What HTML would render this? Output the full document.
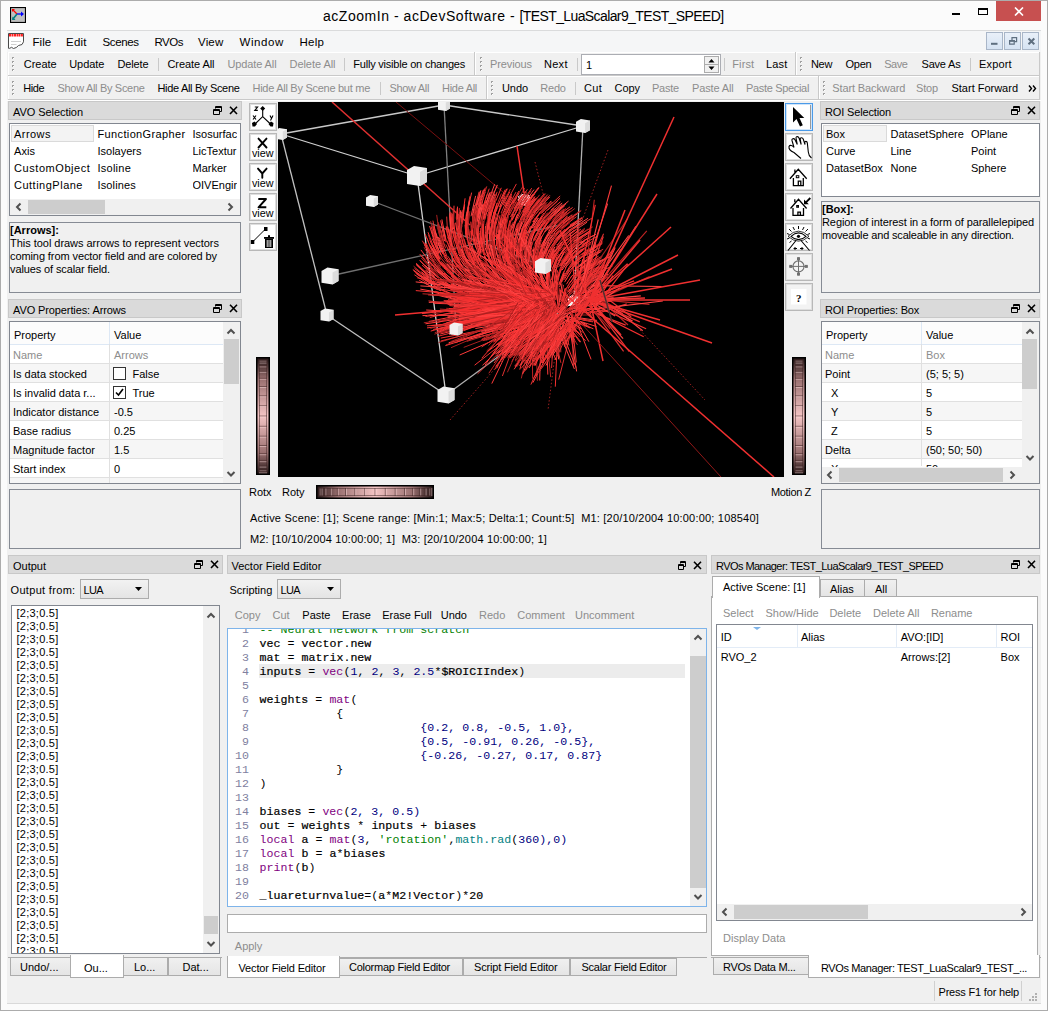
<!DOCTYPE html><html><head><meta charset="utf-8"><style>
html,body{margin:0;padding:0;width:1048px;height:1011px;overflow:hidden;background:#fbfbfb}
.a{position:absolute}
.t{position:absolute;white-space:pre;font-family:"Liberation Sans",sans-serif}
</style></head><body><div class="a" style="left:0px;top:0px;width:1048px;height:1011px;background:#fbfbfb"></div><div class="a" style="left:0px;top:0px;width:1048px;height:1px;background:#acacac"></div><div class="a" style="left:0px;top:1010px;width:1048px;height:1px;background:#acacac"></div><div class="a" style="left:0px;top:0px;width:1px;height:1011px;background:#acacac"></div><div class="a" style="left:1047px;top:0px;width:1px;height:1011px;background:#acacac"></div><svg class="a" style="left:10px;top:7px" width="16" height="16" viewBox="0 0 16 16">
<rect x="0.5" y="0.5" width="15" height="15" fill="#c0c0c0" stroke="#000" stroke-width="1.2"/>
<path d="M7 7 L3 3" stroke="#f00" stroke-width="1.3"/><path d="M2 2 h3 l-3 3z" fill="#f00"/>
<path d="M7 7 H13" stroke="#00f" stroke-width="1.3"/><path d="M14 7 l-3 -2.5 v5z" fill="#00f"/>
<path d="M7 7 L3 12" stroke="#008080" stroke-width="1.6"/><path d="M2 13 h3.5 l-3 -3.5z" fill="#008080"/>
</svg><div class="t" style="left:323px;top:9px;line-height:14px;font-family:'Liberation Sans';font-size:14px;color:#000;letter-spacing:0.535px;">acZoomIn - acDevSoftware - </div><div class="t" style="left:519.5px;top:9px;line-height:14px;font-family:'Liberation Sans';font-size:14px;color:#000;letter-spacing:-0.607px;">[TEST_LuaScalar9_TEST_SPEED]</div><div class="a" style="left:952px;top:13px;width:8px;height:2px;background:#000"></div><div class="a" style="left:978px;top:8px;width:10px;height:7px;border:1px solid #000;border-top-width:2px;box-sizing:border-box"></div><div class="a" style="left:996px;top:1px;width:45px;height:20px;background:#c75050"></div><svg class="a" style="left:1014px;top:7px" width="10" height="9" viewBox="0 0 10 9"><path d="M1 0.5 L9 8.5 M9 0.5 L1 8.5" stroke="#fff" stroke-width="1.6"/></svg><div class="a" style="left:7px;top:30px;width:1034px;height:974px;background:#f0f0f0"></div><div class="a" style="left:7px;top:30px;width:1034px;height:22px;background:#f5f6f7"></div><div class="a" style="left:7px;top:30px;width:1034px;height:1px;background:#dadbdc"></div><svg class="a" style="left:8px;top:33px" width="16" height="16" viewBox="0 0 16 16">
<path d="M0.5 0.5 H15.5 V8.8 L14 11.5 L10.5 12.5 L8.3 14.5 L5.5 15.5 L3.5 14.3 L1.8 15.3 H0.5 Z" fill="#fff" stroke="#4a4a4a" stroke-width="1"/>
<path d="M1 2.2 H15" stroke="#ff2020" stroke-width="2.6" stroke-dasharray="2 0.5 1.5 0.5 2.5 0.5 1.5 0.4 2 0.5"/>
<path d="M3 8.5H13M3 11.5H8.5" stroke="#cfcfcf" stroke-width="1"/>
</svg><div class="t" style="left:32.5px;top:37px;line-height:11.5px;font-family:'Liberation Sans';font-size:11.5px;color:#000;letter-spacing:0.042px;">File</div><div class="t" style="left:66px;top:37px;line-height:11.5px;font-family:'Liberation Sans';font-size:11.5px;color:#000;letter-spacing:0.243px;">Edit</div><div class="t" style="left:102.5px;top:37px;line-height:11.5px;font-family:'Liberation Sans';font-size:11.5px;color:#000;letter-spacing:-0.393px;">Scenes</div><div class="t" style="left:154.5px;top:37px;line-height:11.5px;font-family:'Liberation Sans';font-size:11.5px;color:#000;letter-spacing:-0.492px;">RVOs</div><div class="t" style="left:198px;top:37px;line-height:11.5px;font-family:'Liberation Sans';font-size:11.5px;color:#000;letter-spacing:0.170px;">View</div><div class="t" style="left:239.5px;top:37px;line-height:11.5px;font-family:'Liberation Sans';font-size:11.5px;color:#000;letter-spacing:0.582px;">Window</div><div class="t" style="left:299.5px;top:37px;line-height:11.5px;font-family:'Liberation Sans';font-size:11.5px;color:#000;letter-spacing:0.286px;">Help</div><div class="a" style="left:986px;top:32px;width:17px;height:18px;background:#dce7f5;border:1px solid #a9b6c8;box-sizing:border-box"></div><div class="a" style="left:987px;top:33px;width:15px;height:16px;background:linear-gradient(#e9f0f9,#d6e3f3)"></div><div class="a" style="left:1004px;top:32px;width:17px;height:18px;background:#dce7f5;border:1px solid #a9b6c8;box-sizing:border-box"></div><div class="a" style="left:1005px;top:33px;width:15px;height:16px;background:linear-gradient(#e9f0f9,#d6e3f3)"></div><div class="a" style="left:1022px;top:32px;width:17px;height:18px;background:#dce7f5;border:1px solid #a9b6c8;box-sizing:border-box"></div><div class="a" style="left:1023px;top:33px;width:15px;height:16px;background:linear-gradient(#e9f0f9,#d6e3f3)"></div><svg class="a" style="left:986px;top:32px" width="54" height="18" viewBox="0 0 54 18">
<rect x="5" y="10.8" width="6.5" height="2" fill="#5f6f80"/>
<path d="M23.6 8.6 H28.2 V12.2 H23.6 Z" fill="none" stroke="#5f6f80" stroke-width="1.2"/><rect x="23" y="8" width="5.8" height="1.8" fill="#5f6f80"/>
<path d="M26 8 V5.6 H30.6 V9.6 H28.2" fill="none" stroke="#5f6f80" stroke-width="1.2"/>
<path d="M42.5 6.5 L48.3 12.3 M48.3 6.5 L42.5 12.3" stroke="#5f6f80" stroke-width="2"/>
</svg><div class="a" style="left:8px;top:52px;width:467px;height:24px;background:#f0f0f0"></div><div class="a" style="left:8px;top:52px;width:467px;height:1px;background:#ffffff"></div><div class="a" style="left:8px;top:52px;width:1px;height:24px;background:#ffffff"></div><div class="a" style="left:8px;top:75px;width:467px;height:1px;background:#c9c9c9"></div><div class="a" style="left:474px;top:52px;width:1px;height:24px;background:#c9c9c9"></div><div class="a" style="left:475px;top:52px;width:321px;height:24px;background:#f0f0f0"></div><div class="a" style="left:475px;top:52px;width:321px;height:1px;background:#ffffff"></div><div class="a" style="left:475px;top:52px;width:1px;height:24px;background:#ffffff"></div><div class="a" style="left:475px;top:75px;width:321px;height:1px;background:#c9c9c9"></div><div class="a" style="left:795px;top:52px;width:1px;height:24px;background:#c9c9c9"></div><div class="a" style="left:796px;top:52px;width:244px;height:24px;background:#f0f0f0"></div><div class="a" style="left:796px;top:52px;width:244px;height:1px;background:#ffffff"></div><div class="a" style="left:796px;top:52px;width:1px;height:24px;background:#ffffff"></div><div class="a" style="left:796px;top:75px;width:244px;height:1px;background:#c9c9c9"></div><div class="a" style="left:1039px;top:52px;width:1px;height:24px;background:#c9c9c9"></div><div class="a" style="left:8px;top:76px;width:479px;height:24px;background:#f0f0f0"></div><div class="a" style="left:8px;top:76px;width:479px;height:1px;background:#ffffff"></div><div class="a" style="left:8px;top:76px;width:1px;height:24px;background:#ffffff"></div><div class="a" style="left:8px;top:99px;width:479px;height:1px;background:#c9c9c9"></div><div class="a" style="left:486px;top:76px;width:1px;height:24px;background:#c9c9c9"></div><div class="a" style="left:487px;top:76px;width:332px;height:24px;background:#f0f0f0"></div><div class="a" style="left:487px;top:76px;width:332px;height:1px;background:#ffffff"></div><div class="a" style="left:487px;top:76px;width:1px;height:24px;background:#ffffff"></div><div class="a" style="left:487px;top:99px;width:332px;height:1px;background:#c9c9c9"></div><div class="a" style="left:818px;top:76px;width:1px;height:24px;background:#c9c9c9"></div><div class="a" style="left:819px;top:76px;width:221px;height:24px;background:#f0f0f0"></div><div class="a" style="left:819px;top:76px;width:221px;height:1px;background:#ffffff"></div><div class="a" style="left:819px;top:76px;width:1px;height:24px;background:#ffffff"></div><div class="a" style="left:819px;top:99px;width:221px;height:1px;background:#c9c9c9"></div><div class="a" style="left:1039px;top:76px;width:1px;height:24px;background:#c9c9c9"></div><div class="a" style="left:7px;top:100px;width:1034px;height:1px;background:#ffffff"></div><div class="a" style="left:12px;top:57px;width:2px;height:2px;background:#a0a0a0"></div><div class="a" style="left:13px;top:58px;width:1px;height:1px;background:#fff"></div><div class="a" style="left:12px;top:61px;width:2px;height:2px;background:#a0a0a0"></div><div class="a" style="left:13px;top:62px;width:1px;height:1px;background:#fff"></div><div class="a" style="left:12px;top:65px;width:2px;height:2px;background:#a0a0a0"></div><div class="a" style="left:13px;top:66px;width:1px;height:1px;background:#fff"></div><div class="a" style="left:12px;top:69px;width:2px;height:2px;background:#a0a0a0"></div><div class="a" style="left:13px;top:70px;width:1px;height:1px;background:#fff"></div><div class="a" style="left:480px;top:57px;width:2px;height:2px;background:#a0a0a0"></div><div class="a" style="left:481px;top:58px;width:1px;height:1px;background:#fff"></div><div class="a" style="left:480px;top:61px;width:2px;height:2px;background:#a0a0a0"></div><div class="a" style="left:481px;top:62px;width:1px;height:1px;background:#fff"></div><div class="a" style="left:480px;top:65px;width:2px;height:2px;background:#a0a0a0"></div><div class="a" style="left:481px;top:66px;width:1px;height:1px;background:#fff"></div><div class="a" style="left:480px;top:69px;width:2px;height:2px;background:#a0a0a0"></div><div class="a" style="left:481px;top:70px;width:1px;height:1px;background:#fff"></div><div class="a" style="left:800px;top:57px;width:2px;height:2px;background:#a0a0a0"></div><div class="a" style="left:801px;top:58px;width:1px;height:1px;background:#fff"></div><div class="a" style="left:800px;top:61px;width:2px;height:2px;background:#a0a0a0"></div><div class="a" style="left:801px;top:62px;width:1px;height:1px;background:#fff"></div><div class="a" style="left:800px;top:65px;width:2px;height:2px;background:#a0a0a0"></div><div class="a" style="left:801px;top:66px;width:1px;height:1px;background:#fff"></div><div class="a" style="left:800px;top:69px;width:2px;height:2px;background:#a0a0a0"></div><div class="a" style="left:801px;top:70px;width:1px;height:1px;background:#fff"></div><div class="a" style="left:12px;top:81px;width:2px;height:2px;background:#a0a0a0"></div><div class="a" style="left:13px;top:82px;width:1px;height:1px;background:#fff"></div><div class="a" style="left:12px;top:85px;width:2px;height:2px;background:#a0a0a0"></div><div class="a" style="left:13px;top:86px;width:1px;height:1px;background:#fff"></div><div class="a" style="left:12px;top:89px;width:2px;height:2px;background:#a0a0a0"></div><div class="a" style="left:13px;top:90px;width:1px;height:1px;background:#fff"></div><div class="a" style="left:12px;top:93px;width:2px;height:2px;background:#a0a0a0"></div><div class="a" style="left:13px;top:94px;width:1px;height:1px;background:#fff"></div><div class="a" style="left:491px;top:81px;width:2px;height:2px;background:#a0a0a0"></div><div class="a" style="left:492px;top:82px;width:1px;height:1px;background:#fff"></div><div class="a" style="left:491px;top:85px;width:2px;height:2px;background:#a0a0a0"></div><div class="a" style="left:492px;top:86px;width:1px;height:1px;background:#fff"></div><div class="a" style="left:491px;top:89px;width:2px;height:2px;background:#a0a0a0"></div><div class="a" style="left:492px;top:90px;width:1px;height:1px;background:#fff"></div><div class="a" style="left:491px;top:93px;width:2px;height:2px;background:#a0a0a0"></div><div class="a" style="left:492px;top:94px;width:1px;height:1px;background:#fff"></div><div class="a" style="left:823px;top:81px;width:2px;height:2px;background:#a0a0a0"></div><div class="a" style="left:824px;top:82px;width:1px;height:1px;background:#fff"></div><div class="a" style="left:823px;top:85px;width:2px;height:2px;background:#a0a0a0"></div><div class="a" style="left:824px;top:86px;width:1px;height:1px;background:#fff"></div><div class="a" style="left:823px;top:89px;width:2px;height:2px;background:#a0a0a0"></div><div class="a" style="left:824px;top:90px;width:1px;height:1px;background:#fff"></div><div class="a" style="left:823px;top:93px;width:2px;height:2px;background:#a0a0a0"></div><div class="a" style="left:824px;top:94px;width:1px;height:1px;background:#fff"></div><div class="t" style="left:23.75px;top:59px;line-height:11px;font-family:'Liberation Sans';font-size:11px;color:#000;letter-spacing:-0.005px;">Create</div><div class="t" style="left:69.25px;top:59px;line-height:11px;font-family:'Liberation Sans';font-size:11px;color:#000;letter-spacing:-0.081px;">Update</div><div class="t" style="left:117.5px;top:59px;line-height:11px;font-family:'Liberation Sans';font-size:11px;color:#000;letter-spacing:-0.133px;">Delete</div><div class="t" style="left:167.5px;top:59px;line-height:11px;font-family:'Liberation Sans';font-size:11px;color:#000;letter-spacing:-0.070px;">Create All</div><div class="t" style="left:227.5px;top:59px;line-height:11px;font-family:'Liberation Sans';font-size:11px;color:#8d8d8d;letter-spacing:-0.116px;">Update All</div><div class="t" style="left:289.5px;top:59px;line-height:11px;font-family:'Liberation Sans';font-size:11px;color:#8d8d8d;letter-spacing:-0.048px;">Delete All</div><div class="t" style="left:353.25px;top:59px;line-height:11px;font-family:'Liberation Sans';font-size:11px;color:#000;letter-spacing:-0.210px;">Fully visible on changes</div><div class="t" style="left:490px;top:59px;line-height:11px;font-family:'Liberation Sans';font-size:11px;color:#8d8d8d;letter-spacing:-0.100px;">Previous</div><div class="t" style="left:544px;top:59px;line-height:11px;font-family:'Liberation Sans';font-size:11px;color:#000;letter-spacing:0.281px;">Next</div><div class="t" style="left:732.25px;top:59px;line-height:11px;font-family:'Liberation Sans';font-size:11px;color:#8d8d8d;letter-spacing:0.122px;">First</div><div class="t" style="left:766px;top:59px;line-height:11px;font-family:'Liberation Sans';font-size:11px;color:#000;letter-spacing:0.176px;">Last</div><div class="t" style="left:811px;top:59px;line-height:11px;font-family:'Liberation Sans';font-size:11px;color:#000;letter-spacing:-0.339px;">New</div><div class="t" style="left:845.5px;top:59px;line-height:11px;font-family:'Liberation Sans';font-size:11px;color:#000;letter-spacing:-0.230px;">Open</div><div class="t" style="left:884.25px;top:59px;line-height:11px;font-family:'Liberation Sans';font-size:11px;color:#8d8d8d;letter-spacing:-0.520px;">Save</div><div class="t" style="left:921.5px;top:59px;line-height:11px;font-family:'Liberation Sans';font-size:11px;color:#000;letter-spacing:-0.194px;">Save As</div><div class="t" style="left:979px;top:59px;line-height:11px;font-family:'Liberation Sans';font-size:11px;color:#000;letter-spacing:0.159px;">Export</div><div class="a" style="left:158px;top:58px;width:1px;height:13px;background:#c9c9c9"></div><div class="a" style="left:344px;top:58px;width:1px;height:13px;background:#c9c9c9"></div><div class="a" style="left:577px;top:58px;width:1px;height:13px;background:#c9c9c9"></div><div class="a" style="left:724px;top:58px;width:1px;height:13px;background:#c9c9c9"></div><div class="a" style="left:970px;top:58px;width:1px;height:13px;background:#c9c9c9"></div><div class="a" style="left:581px;top:54px;width:140px;height:21px;background:#fff;border:1px solid #abadb3;box-sizing:border-box"></div><div class="a" style="left:704px;top:56px;width:15px;height:17px;background:#f0f0f0;border:1px solid #acacac;box-sizing:border-box"></div><svg class="a" style="left:704px;top:56px" width="15" height="17" viewBox="0 0 15 17">
<path d="M7.5 3 L10.5 6.5 H4.5Z M7.5 14 L10.5 10.5 H4.5Z" fill="#000"/><path d="M1 8.5 H14" stroke="#acacac"/></svg><div class="t" style="left:586px;top:60px;line-height:11px;font-family:'Liberation Sans';font-size:11px;color:#000;">1</div><div class="t" style="left:23.25px;top:83px;line-height:11px;font-family:'Liberation Sans';font-size:11px;color:#000;letter-spacing:-0.406px;">Hide</div><div class="t" style="left:57.5px;top:83px;line-height:11px;font-family:'Liberation Sans';font-size:11px;color:#8d8d8d;letter-spacing:-0.314px;">Show All By Scene</div><div class="t" style="left:157.5px;top:83px;line-height:11px;font-family:'Liberation Sans';font-size:11px;color:#000;letter-spacing:-0.320px;">Hide All By Scene</div><div class="t" style="left:252.5px;top:83px;line-height:11px;font-family:'Liberation Sans';font-size:11px;color:#8d8d8d;letter-spacing:-0.276px;">Hide All By Scene but me</div><div class="t" style="left:389.5px;top:83px;line-height:11px;font-family:'Liberation Sans';font-size:11px;color:#8d8d8d;letter-spacing:-0.338px;">Show All</div><div class="t" style="left:442px;top:83px;line-height:11px;font-family:'Liberation Sans';font-size:11px;color:#8d8d8d;letter-spacing:-0.287px;">Hide All</div><div class="t" style="left:502px;top:83px;line-height:11px;font-family:'Liberation Sans';font-size:11px;color:#000;letter-spacing:-0.074px;">Undo</div><div class="t" style="left:540.25px;top:83px;line-height:11px;font-family:'Liberation Sans';font-size:11px;color:#8d8d8d;letter-spacing:-0.199px;">Redo</div><div class="t" style="left:584px;top:83px;line-height:11px;font-family:'Liberation Sans';font-size:11px;color:#000;letter-spacing:0.292px;">Cut</div><div class="t" style="left:614.5px;top:83px;line-height:11px;font-family:'Liberation Sans';font-size:11px;color:#000;letter-spacing:-0.047px;">Copy</div><div class="t" style="left:652px;top:83px;line-height:11px;font-family:'Liberation Sans';font-size:11px;color:#8d8d8d;letter-spacing:-0.228px;">Paste</div><div class="t" style="left:692px;top:83px;line-height:11px;font-family:'Liberation Sans';font-size:11px;color:#8d8d8d;letter-spacing:-0.146px;">Paste All</div><div class="t" style="left:746px;top:83px;line-height:11px;font-family:'Liberation Sans';font-size:11px;color:#8d8d8d;letter-spacing:-0.328px;">Paste Special</div><div class="t" style="left:832.25px;top:83px;line-height:11px;font-family:'Liberation Sans';font-size:11px;color:#8d8d8d;letter-spacing:-0.114px;">Start Backward</div><div class="t" style="left:916px;top:83px;line-height:11px;font-family:'Liberation Sans';font-size:11px;color:#8d8d8d;letter-spacing:-0.160px;">Stop</div><div class="t" style="left:951.5px;top:83px;line-height:11px;font-family:'Liberation Sans';font-size:11px;color:#000;letter-spacing:-0.011px;">Start Forward</div><div class="a" style="left:380px;top:82px;width:1px;height:13px;background:#c9c9c9"></div><div class="a" style="left:575px;top:82px;width:1px;height:13px;background:#c9c9c9"></div><svg class="a" style="left:1028px;top:85px" width="9" height="7" viewBox="0 0 9 7"><path d="M1 0.5 L3.5 3.5 L1 6.5 M5 0.5 L7.5 3.5 L5 6.5" fill="none" stroke="#000" stroke-width="1.4"/></svg><div class="a" style="left:8px;top:101px;width:234px;height:19px;background:#dadada;border:1px solid #c8c8c8;box-sizing:border-box"></div><div class="t" style="left:13px;top:107px;line-height:11px;font-family:'Liberation Sans';font-size:11px;color:#000;letter-spacing:-0.056px;">AVO Selection</div><svg class="a" style="left:214px;top:106px" width="24" height="9" viewBox="0 0 24 9" overflow="visible">
<path d="M-0.5 8.5 V3.5 H5.5 V8.5 Z M-0.5 4.5 H5.5" fill="none" stroke="#000" stroke-width="1"/>
<path d="M1.5 2.5 V0.5 H7.5 V5.5 H5.5 M1.5 1.5 H7.5" fill="none" stroke="#000" stroke-width="1"/>
<path d="M16 0.8 L23 8 M23 0.8 L16 8" stroke="#000" stroke-width="1.6"/>
</svg><div class="a" style="left:9px;top:123px;width:232px;height:93px;background:#fff;border:1px solid #828790;box-sizing:border-box"></div><div class="a" style="left:11px;top:125px;width:83px;height:17px;background:#f3f3f3;border:1px solid #dadada;box-sizing:border-box"></div><div class="t" style="left:14px;top:129px;line-height:11px;font-family:'Liberation Sans';font-size:11px;color:#000;letter-spacing:0.461px;">Arrows</div><div class="t" style="left:97.5px;top:129px;line-height:11px;font-family:'Liberation Sans';font-size:11px;color:#000;letter-spacing:0.364px;">FunctionGrapher</div><div class="a" style="left:192px;top:126px;width:48px;height:16px;overflow:hidden;background:transparent"></div><div class="t" style="left:192.5px;top:129px;line-height:11px;font-family:'Liberation Sans';font-size:11px;color:#000;max-width:47px;overflow:hidden">Isosurfac</div><div class="t" style="left:14px;top:146px;line-height:11px;font-family:'Liberation Sans';font-size:11px;color:#000;letter-spacing:0.055px;">Axis</div><div class="t" style="left:97.5px;top:146px;line-height:11px;font-family:'Liberation Sans';font-size:11px;color:#000;letter-spacing:-0.003px;">Isolayers</div><div class="a" style="left:192px;top:143px;width:48px;height:16px;overflow:hidden;background:transparent"></div><div class="t" style="left:192.5px;top:146px;line-height:11px;font-family:'Liberation Sans';font-size:11px;color:#000;max-width:47px;overflow:hidden">LicTextur</div><div class="t" style="left:14px;top:163px;line-height:11px;font-family:'Liberation Sans';font-size:11px;color:#000;letter-spacing:0.566px;">CustomObject</div><div class="t" style="left:97.5px;top:163px;line-height:11px;font-family:'Liberation Sans';font-size:11px;color:#000;letter-spacing:0.243px;">Isoline</div><div class="a" style="left:192px;top:160px;width:48px;height:16px;overflow:hidden;background:transparent"></div><div class="t" style="left:192.5px;top:163px;line-height:11px;font-family:'Liberation Sans';font-size:11px;color:#000;max-width:47px;overflow:hidden">Marker</div><div class="t" style="left:14px;top:180px;line-height:11px;font-family:'Liberation Sans';font-size:11px;color:#000;letter-spacing:0.500px;">CuttingPlane</div><div class="t" style="left:97.5px;top:180px;line-height:11px;font-family:'Liberation Sans';font-size:11px;color:#000;letter-spacing:0.150px;">Isolines</div><div class="a" style="left:192px;top:177px;width:48px;height:16px;overflow:hidden;background:transparent"></div><div class="t" style="left:192.5px;top:180px;line-height:11px;font-family:'Liberation Sans';font-size:11px;color:#000;max-width:47px;overflow:hidden">OIVEngir</div><div class="a" style="left:10px;top:199px;width:230px;height:16px;background:#f0f0f0"></div><div class="a" style="left:28px;top:200px;width:77px;height:14px;background:#cdcdcd"></div><div class="a" style="left:9px;top:222px;width:232px;height:71px;background:#f0f0f0;border:1px solid #868b94;box-sizing:border-box"></div><div class="t" style="left:10px;top:225px;line-height:11px;font-family:'Liberation Sans';font-size:11px;font-weight:bold;color:#000;">[Arrows]:</div><div class="t" style="left:10px;top:238px;line-height:11px;font-family:'Liberation Sans';font-size:11px;color:#000;letter-spacing:-0.031px;">This tool draws arrows to represent vectors</div><div class="t" style="left:10px;top:251px;line-height:11px;font-family:'Liberation Sans';font-size:11px;color:#000;letter-spacing:-0.092px;">coming from vector field and are colored by</div><div class="t" style="left:10px;top:264px;line-height:11px;font-family:'Liberation Sans';font-size:11px;color:#000;letter-spacing:-0.118px;">values of scalar field.</div><div class="a" style="left:8px;top:299px;width:234px;height:19px;background:#dadada;border:1px solid #c8c8c8;box-sizing:border-box"></div><div class="t" style="left:13px;top:305px;line-height:11px;font-family:'Liberation Sans';font-size:11px;color:#000;letter-spacing:-0.107px;">AVO Properties: Arrows</div><svg class="a" style="left:214px;top:304px" width="24" height="9" viewBox="0 0 24 9" overflow="visible">
<path d="M-0.5 8.5 V3.5 H5.5 V8.5 Z M-0.5 4.5 H5.5" fill="none" stroke="#000" stroke-width="1"/>
<path d="M1.5 2.5 V0.5 H7.5 V5.5 H5.5 M1.5 1.5 H7.5" fill="none" stroke="#000" stroke-width="1"/>
<path d="M16 0.8 L23 8 M23 0.8 L16 8" stroke="#000" stroke-width="1.6"/>
</svg><div class="a" style="left:9px;top:321px;width:232px;height:163px;background:#fff;border:1px solid #828790;box-sizing:border-box"></div><div class="a" style="left:10px;top:322px;width:213px;height:22px;background:#fcfcfc"></div><div class="a" style="left:10px;top:344px;width:213px;height:1px;background:#dde8f5"></div><div class="a" style="left:109px;top:322px;width:1px;height:22px;background:#dde8f5"></div><div class="t" style="left:14px;top:330px;line-height:11px;font-family:'Liberation Sans';font-size:11px;color:#000;">Property</div><div class="t" style="left:114px;top:330px;line-height:11px;font-family:'Liberation Sans';font-size:11px;color:#000;">Value</div><div class="a" style="left:10px;top:345px;width:213px;height:18px;background:#ffffff"></div><div class="a" style="left:10px;top:363px;width:213px;height:1px;background:#e0e0e0"></div><div class="a" style="left:109px;top:344px;width:1px;height:19px;background:#e0e0e0"></div><div class="t" style="left:13px;top:350px;line-height:11px;font-family:'Liberation Sans';font-size:11px;color:#8d8d8d;">Name</div><div class="t" style="left:114px;top:350px;line-height:11px;font-family:'Liberation Sans';font-size:11px;color:#8d8d8d;">Arrows</div><div class="a" style="left:10px;top:364px;width:213px;height:18px;background:#f6f6f6"></div><div class="a" style="left:10px;top:382px;width:213px;height:1px;background:#e0e0e0"></div><div class="a" style="left:109px;top:363px;width:1px;height:19px;background:#e0e0e0"></div><div class="t" style="left:13px;top:369px;line-height:11px;font-family:'Liberation Sans';font-size:11px;color:#000;">Is data stocked</div><div class="a" style="left:113px;top:367px;width:13px;height:13px;background:#fff;border:1px solid #333;box-sizing:border-box"></div><div class="t" style="left:132.5px;top:369px;line-height:11px;font-family:'Liberation Sans';font-size:11px;color:#000;">False</div><div class="a" style="left:10px;top:383px;width:213px;height:18px;background:#ffffff"></div><div class="a" style="left:10px;top:401px;width:213px;height:1px;background:#e0e0e0"></div><div class="a" style="left:109px;top:382px;width:1px;height:19px;background:#e0e0e0"></div><div class="t" style="left:13px;top:388px;line-height:11px;font-family:'Liberation Sans';font-size:11px;color:#000;">Is invalid data r...</div><div class="a" style="left:113px;top:386px;width:13px;height:13px;background:#fff;border:1px solid #333;box-sizing:border-box"></div><svg class="a" style="left:113px;top:386px" width="13" height="13" viewBox="0 0 13 13"><path d="M3 6.5 L5.5 9 L10 3" fill="none" stroke="#000" stroke-width="1.6"/></svg><div class="t" style="left:132.5px;top:388px;line-height:11px;font-family:'Liberation Sans';font-size:11px;color:#000;">True</div><div class="a" style="left:10px;top:402px;width:213px;height:18px;background:#f6f6f6"></div><div class="a" style="left:10px;top:420px;width:213px;height:1px;background:#e0e0e0"></div><div class="a" style="left:109px;top:401px;width:1px;height:19px;background:#e0e0e0"></div><div class="t" style="left:13px;top:407px;line-height:11px;font-family:'Liberation Sans';font-size:11px;color:#000;">Indicator distance</div><div class="t" style="left:114px;top:407px;line-height:11px;font-family:'Liberation Sans';font-size:11px;color:#000;">-0.5</div><div class="a" style="left:10px;top:421px;width:213px;height:18px;background:#ffffff"></div><div class="a" style="left:10px;top:439px;width:213px;height:1px;background:#e0e0e0"></div><div class="a" style="left:109px;top:420px;width:1px;height:19px;background:#e0e0e0"></div><div class="t" style="left:13px;top:426px;line-height:11px;font-family:'Liberation Sans';font-size:11px;color:#000;">Base radius</div><div class="t" style="left:114px;top:426px;line-height:11px;font-family:'Liberation Sans';font-size:11px;color:#000;">0.25</div><div class="a" style="left:10px;top:440px;width:213px;height:18px;background:#f6f6f6"></div><div class="a" style="left:10px;top:458px;width:213px;height:1px;background:#e0e0e0"></div><div class="a" style="left:109px;top:439px;width:1px;height:19px;background:#e0e0e0"></div><div class="t" style="left:13px;top:445px;line-height:11px;font-family:'Liberation Sans';font-size:11px;color:#000;">Magnitude factor</div><div class="t" style="left:114px;top:445px;line-height:11px;font-family:'Liberation Sans';font-size:11px;color:#000;">1.5</div><div class="a" style="left:10px;top:459px;width:213px;height:18px;background:#ffffff"></div><div class="a" style="left:10px;top:477px;width:213px;height:1px;background:#e0e0e0"></div><div class="a" style="left:109px;top:458px;width:1px;height:19px;background:#e0e0e0"></div><div class="t" style="left:13px;top:464px;line-height:11px;font-family:'Liberation Sans';font-size:11px;color:#000;">Start index</div><div class="t" style="left:114px;top:464px;line-height:11px;font-family:'Liberation Sans';font-size:11px;color:#000;">0</div><div class="a" style="left:10px;top:478px;width:213px;height:5px;background:#f6f6f6"></div><div class="a" style="left:109px;top:477px;width:1px;height:6px;background:#e0e0e0"></div><div class="t" style="left:13px;top:483px;line-height:11px;font-family:'Liberation Sans';font-size:11px;color:#000;"></div><div class="t" style="left:114px;top:483px;line-height:11px;font-family:'Liberation Sans';font-size:11px;color:#000;"></div><div class="a" style="left:223px;top:322px;width:17px;height:161px;background:#f0f0f0"></div><div class="a" style="left:224px;top:339px;width:15px;height:45px;background:#cdcdcd"></div><div class="a" style="left:9px;top:489px;width:232px;height:60px;background:#f0f0f0;border:1px solid #868b94;box-sizing:border-box"></div><div class="a" style="left:249px;top:103px;width:28px;height:28px;background:#fff;border:1px solid #b8b8b8;box-sizing:border-box;box-shadow:inset 0 0 0 1px #dedede"></div><div class="a" style="left:249px;top:133px;width:28px;height:28px;background:#fff;border:1px solid #b8b8b8;box-sizing:border-box;box-shadow:inset 0 0 0 1px #dedede"></div><div class="a" style="left:249px;top:163px;width:28px;height:28px;background:#fff;border:1px solid #b8b8b8;box-sizing:border-box;box-shadow:inset 0 0 0 1px #dedede"></div><div class="a" style="left:249px;top:193px;width:28px;height:28px;background:#fff;border:1px solid #b8b8b8;box-sizing:border-box;box-shadow:inset 0 0 0 1px #dedede"></div><div class="a" style="left:249px;top:223px;width:28px;height:28px;background:#fff;border:1px solid #b8b8b8;box-sizing:border-box;box-shadow:inset 0 0 0 1px #dedede"></div><div class="a" style="left:785px;top:103px;width:28px;height:28px;background:#fff;border:1px solid #4a9ae8;box-sizing:border-box;box-shadow:inset 0 0 0 1px #cfe5fb"></div><div class="a" style="left:810px;top:105px;width:1px;height:24px;background:#9a9a9a"></div><div class="a" style="left:785px;top:133px;width:28px;height:28px;background:#fff;border:1px solid #b8b8b8;box-sizing:border-box;box-shadow:inset 0 0 0 1px #dedede"></div><div class="a" style="left:785px;top:163px;width:28px;height:28px;background:#fff;border:1px solid #b8b8b8;box-sizing:border-box;box-shadow:inset 0 0 0 1px #dedede"></div><div class="a" style="left:785px;top:193px;width:28px;height:28px;background:#fff;border:1px solid #b8b8b8;box-sizing:border-box;box-shadow:inset 0 0 0 1px #dedede"></div><div class="a" style="left:785px;top:223px;width:28px;height:28px;background:#fff;border:1px solid #b8b8b8;box-sizing:border-box;box-shadow:inset 0 0 0 1px #dedede"></div><div class="a" style="left:785px;top:253px;width:28px;height:28px;background:#f3f3f3;border:1px solid #b8b8b8;box-sizing:border-box;box-shadow:inset 0 0 0 1px #dedede"></div><div class="a" style="left:785px;top:283px;width:28px;height:28px;background:#f3f3f3;border:1px solid #b8b8b8;box-sizing:border-box;box-shadow:inset 0 0 0 1px #dedede"></div><svg class="a" style="left:249px;top:103px" width="28" height="148" viewBox="0 0 28 148">
<path d="M13.7 5 V13.6 L5.5 21.5 M13.7 13.6 L22 21.5" fill="none" stroke="#000" stroke-width="1.1"/>
<path d="M13.7 3 L16.2 5.5 L13.7 8 L11.2 5.5Z" fill="#000"/>
<path d="M3 20 L5.5 18.5 L8 21 L6 23.5 L3.5 23.5Z" fill="#000"/>
<path d="M24.5 20 L22 18.5 L19.5 21 L21.5 23.5 L24 23.5Z" fill="#000"/>
<path d="M5.8 4 H8.6 L5.8 7.4 H8.8" fill="none" stroke="#000" stroke-width="1.1"/>
<path d="M4 12.5 L7 16.5 M7 12.5 L4 16.5" stroke="#000" stroke-width="1.1"/>
<path d="M21 12.5 L22.6 15.5 M24 12.5 L21.5 17.5" stroke="#000" stroke-width="1.1"/>
<path d="M9.5 35.6 L17.5 44.5 M17.5 35.6 L9.5 44.5" stroke="#000" stroke-width="1.9" stroke-linecap="round"/>
<text x="13.7" y="54.2" text-anchor="middle" font-family="Liberation Sans" font-size="11.5" textLength="21.5" lengthAdjust="spacingAndGlyphs">view</text>
<path d="M9 65.6 L13.3 70.5 L17.6 65.6 M13.3 70.5 V74.7" fill="none" stroke="#000" stroke-width="1.9" stroke-linecap="round"/>
<text x="13.7" y="84.2" text-anchor="middle" font-family="Liberation Sans" font-size="11.5" textLength="21.5" lengthAdjust="spacingAndGlyphs">view</text>
<path d="M9.3 96 H17 L9.5 104.3 H17.3" fill="none" stroke="#000" stroke-width="1.9" stroke-linejoin="round"/>
<text x="13.7" y="114.2" text-anchor="middle" font-family="Liberation Sans" font-size="11.5" textLength="21.5" lengthAdjust="spacingAndGlyphs">view</text>
<path d="M3.5 139 L16.5 126" stroke="#000" stroke-width="1"/>
<rect x="1.8" y="137" width="3.5" height="4" fill="#000"/><rect x="15" y="124" width="3.5" height="4" fill="#000"/>
<rect x="15" y="134" width="10" height="1.8" fill="#000"/><rect x="19" y="132.2" width="2" height="2" fill="#000"/>
<rect x="16" y="135.5" width="8" height="9.5" fill="#000"/>
<path d="M18.2 137 V144 M20 137 V144 M21.8 137 V144" stroke="#fff" stroke-width="0.9"/>
</svg><svg class="a" style="left:785px;top:103px" width="28" height="208" viewBox="0 0 28 208">
<path d="M8 4 V19.5 L11.5 16 L15 23.5 L17.8 22.3 L14.5 15 H19.3 Z" fill="#000"/>
<path d="M16 55.5 L9 49.5 C6.5 48.5 3.5 46.5 4 43.5 C5 41.5 7.5 42.5 9 44.5 L7 37.5 C6.5 35.5 9 35 10 36.8 L12.3 41.5 L11 35 C10.8 33.3 13.3 33 14 35 L16.2 41.5 L15.2 36 C15 34.5 17.5 34.3 18.2 36 L20 41.5 L19.8 39.5 C19.8 38 22 38 22.3 39.8 L23.3 49 C23.5 51.5 24.5 53.5 26.5 55" fill="none" stroke="#000" stroke-width="1.1"/>
<path d="M4.9 75.7 L13.3 66.3 L21.7 75.7 M8.4 75 V82.6 H18.3 V75 M13.3 82.6 V78.2 H15.8 V82.6 M9.9 70 V66.5" fill="none" stroke="#000" stroke-width="1.3"/>
<rect x="11.3" y="72.7" width="2.5" height="2" fill="none" stroke="#000" stroke-width="1"/>
<path d="M5.5 105.5 L13.5 96.3 L21.6 105.5 M8 105 V112.3 H18.5 V105 M12.9 112.3 V109.2 H15.4 V112.3 M9.8 99.3 V96.3" fill="none" stroke="#000" stroke-width="1.3"/>
<rect x="11.7" y="102.5" width="1.8" height="1.8" fill="none" stroke="#000" stroke-width="1"/>
<path d="M25.3 95 L19.7 100.6" stroke="#000" stroke-width="1.8"/><path d="M19 96.5 V101.3 H23.8 Z" fill="#000"/>
<ellipse cx="13.5" cy="43.3" rx="0" ry="0"/>
<path d="M6 133.3 Q13.5 126.5 21 133.3 Q13.5 140 6 133.3Z" fill="none" stroke="#000" stroke-width="1.1"/>
<path d="M3 133.3 Q13.5 123 24 133.3 M3 133.3 Q13.5 143 24 133.3" fill="none" stroke="#000" stroke-width="0.8"/>
<circle cx="13.5" cy="133.3" r="1.6" fill="#000"/>
<path d="M13.5 123 V126 M8 124 L9.5 127 M19 124 L17.5 127 M4 126 L6.5 128.5 M23 126 L20.5 128.5 M2 130.5 L4.5 131.5 M25 130.5 L22.5 131.5 M2 136 L4.5 135 M25 136 L22.5 135 M4.5 139.5 L6.5 138 M22.5 139.5 L20.5 138" stroke="#000" stroke-width="1"/>
<path d="M11 137.5 L3 147.5 M16 137.5 L24.5 147.5" stroke="#000" stroke-width="1.1"/>
<path d="M9 145.5 H12 M9 145.5 L10.5 144 M9 145.5 L10.5 147 M18 145.5 H15 M18 145.5 L16.5 144 M18 145.5 L16.5 147" stroke="#000" stroke-width="1"/>
<circle cx="13.5" cy="163.4" r="5.5" fill="none" stroke="#707070" stroke-width="1.1"/>
<path d="M13.5 154.4 V172.4 M4.5 163.4 H22.5" stroke="#707070" stroke-width="1"/>
<rect x="12" y="154.2" width="3" height="3" fill="#707070"/><rect x="12" y="169.6" width="3" height="3" fill="#707070"/>
<rect x="4.3" y="161.9" width="3" height="3" fill="#707070"/><rect x="19.8" y="161.9" width="3" height="3" fill="#707070"/>
<rect x="6" y="186" width="15.5" height="15.5" fill="#fff"/>
<text x="13.7" y="198.5" text-anchor="middle" font-family="Liberation Serif" font-size="11" font-weight="bold">?</text>
</svg><div class="a" style="left:278px;top:102px;width:506px;height:375px;background:#000"></div><svg class="a" style="left:256px;top:357px" width="14" height="118" viewBox="0 0 14 118"><defs><linearGradient id="g256_357" x1="0" y1="0" x2="0" y2="1"><stop offset="0" stop-color="#2a1a1a"/><stop offset="0.18" stop-color="#9a7070"/><stop offset="0.5" stop-color="#f4c4c4"/><stop offset="0.82" stop-color="#9a7070"/><stop offset="1" stop-color="#2a1a1a"/></linearGradient></defs><rect x="0" y="0" width="14" height="118" fill="#000"/><rect x="1.5" y="1.5" width="11" height="115" fill="url(#g256_357)"/><path d="M3 3.2 H11" stroke="rgba(70,40,40,0.55)" stroke-width="1"/><path d="M3 4.2 H11" stroke="rgba(255,225,225,0.45)" stroke-width="1"/><path d="M3 5.1 H11" stroke="rgba(70,40,40,0.55)" stroke-width="1"/><path d="M3 6.1 H11" stroke="rgba(255,225,225,0.45)" stroke-width="1"/><path d="M3 8.9 H11" stroke="rgba(70,40,40,0.55)" stroke-width="1"/><path d="M3 9.9 H11" stroke="rgba(255,225,225,0.45)" stroke-width="1"/><path d="M3 14.3 H11" stroke="rgba(70,40,40,0.55)" stroke-width="1"/><path d="M3 15.3 H11" stroke="rgba(255,225,225,0.45)" stroke-width="1"/><path d="M3 21.3 H11" stroke="rgba(70,40,40,0.55)" stroke-width="1"/><path d="M3 22.3 H11" stroke="rgba(255,225,225,0.45)" stroke-width="1"/><path d="M3 29.5 H11" stroke="rgba(70,40,40,0.55)" stroke-width="1"/><path d="M3 30.5 H11" stroke="rgba(255,225,225,0.45)" stroke-width="1"/><path d="M3 38.8 H11" stroke="rgba(70,40,40,0.55)" stroke-width="1"/><path d="M3 39.8 H11" stroke="rgba(255,225,225,0.45)" stroke-width="1"/><path d="M3 48.7 H11" stroke="rgba(70,40,40,0.55)" stroke-width="1"/><path d="M3 49.7 H11" stroke="rgba(255,225,225,0.45)" stroke-width="1"/><path d="M3 59.0 H11" stroke="rgba(70,40,40,0.55)" stroke-width="1"/><path d="M3 60.0 H11" stroke="rgba(255,225,225,0.45)" stroke-width="1"/><path d="M3 69.3 H11" stroke="rgba(70,40,40,0.55)" stroke-width="1"/><path d="M3 70.3 H11" stroke="rgba(255,225,225,0.45)" stroke-width="1"/><path d="M3 79.2 H11" stroke="rgba(70,40,40,0.55)" stroke-width="1"/><path d="M3 80.2 H11" stroke="rgba(255,225,225,0.45)" stroke-width="1"/><path d="M3 88.5 H11" stroke="rgba(70,40,40,0.55)" stroke-width="1"/><path d="M3 89.5 H11" stroke="rgba(255,225,225,0.45)" stroke-width="1"/><path d="M3 96.7 H11" stroke="rgba(70,40,40,0.55)" stroke-width="1"/><path d="M3 97.7 H11" stroke="rgba(255,225,225,0.45)" stroke-width="1"/><path d="M3 103.7 H11" stroke="rgba(70,40,40,0.55)" stroke-width="1"/><path d="M3 104.7 H11" stroke="rgba(255,225,225,0.45)" stroke-width="1"/><path d="M3 109.1 H11" stroke="rgba(70,40,40,0.55)" stroke-width="1"/><path d="M3 110.1 H11" stroke="rgba(255,225,225,0.45)" stroke-width="1"/><path d="M3 112.9 H11" stroke="rgba(70,40,40,0.55)" stroke-width="1"/><path d="M3 113.9 H11" stroke="rgba(255,225,225,0.45)" stroke-width="1"/><path d="M3 114.8 H11" stroke="rgba(70,40,40,0.55)" stroke-width="1"/><path d="M3 115.8 H11" stroke="rgba(255,225,225,0.45)" stroke-width="1"/><path d="M3.5 3 V115 M10.5 3 V115" stroke="rgba(60,35,35,0.5)" stroke-width="1"/></svg><svg class="a" style="left:792px;top:357px" width="14" height="118" viewBox="0 0 14 118"><defs><linearGradient id="g792_357" x1="0" y1="0" x2="0" y2="1"><stop offset="0" stop-color="#2a1a1a"/><stop offset="0.18" stop-color="#9a7070"/><stop offset="0.5" stop-color="#f4c4c4"/><stop offset="0.82" stop-color="#9a7070"/><stop offset="1" stop-color="#2a1a1a"/></linearGradient></defs><rect x="0" y="0" width="14" height="118" fill="#000"/><rect x="1.5" y="1.5" width="11" height="115" fill="url(#g792_357)"/><path d="M3 3.2 H11" stroke="rgba(70,40,40,0.55)" stroke-width="1"/><path d="M3 4.2 H11" stroke="rgba(255,225,225,0.45)" stroke-width="1"/><path d="M3 5.1 H11" stroke="rgba(70,40,40,0.55)" stroke-width="1"/><path d="M3 6.1 H11" stroke="rgba(255,225,225,0.45)" stroke-width="1"/><path d="M3 8.9 H11" stroke="rgba(70,40,40,0.55)" stroke-width="1"/><path d="M3 9.9 H11" stroke="rgba(255,225,225,0.45)" stroke-width="1"/><path d="M3 14.3 H11" stroke="rgba(70,40,40,0.55)" stroke-width="1"/><path d="M3 15.3 H11" stroke="rgba(255,225,225,0.45)" stroke-width="1"/><path d="M3 21.3 H11" stroke="rgba(70,40,40,0.55)" stroke-width="1"/><path d="M3 22.3 H11" stroke="rgba(255,225,225,0.45)" stroke-width="1"/><path d="M3 29.5 H11" stroke="rgba(70,40,40,0.55)" stroke-width="1"/><path d="M3 30.5 H11" stroke="rgba(255,225,225,0.45)" stroke-width="1"/><path d="M3 38.8 H11" stroke="rgba(70,40,40,0.55)" stroke-width="1"/><path d="M3 39.8 H11" stroke="rgba(255,225,225,0.45)" stroke-width="1"/><path d="M3 48.7 H11" stroke="rgba(70,40,40,0.55)" stroke-width="1"/><path d="M3 49.7 H11" stroke="rgba(255,225,225,0.45)" stroke-width="1"/><path d="M3 59.0 H11" stroke="rgba(70,40,40,0.55)" stroke-width="1"/><path d="M3 60.0 H11" stroke="rgba(255,225,225,0.45)" stroke-width="1"/><path d="M3 69.3 H11" stroke="rgba(70,40,40,0.55)" stroke-width="1"/><path d="M3 70.3 H11" stroke="rgba(255,225,225,0.45)" stroke-width="1"/><path d="M3 79.2 H11" stroke="rgba(70,40,40,0.55)" stroke-width="1"/><path d="M3 80.2 H11" stroke="rgba(255,225,225,0.45)" stroke-width="1"/><path d="M3 88.5 H11" stroke="rgba(70,40,40,0.55)" stroke-width="1"/><path d="M3 89.5 H11" stroke="rgba(255,225,225,0.45)" stroke-width="1"/><path d="M3 96.7 H11" stroke="rgba(70,40,40,0.55)" stroke-width="1"/><path d="M3 97.7 H11" stroke="rgba(255,225,225,0.45)" stroke-width="1"/><path d="M3 103.7 H11" stroke="rgba(70,40,40,0.55)" stroke-width="1"/><path d="M3 104.7 H11" stroke="rgba(255,225,225,0.45)" stroke-width="1"/><path d="M3 109.1 H11" stroke="rgba(70,40,40,0.55)" stroke-width="1"/><path d="M3 110.1 H11" stroke="rgba(255,225,225,0.45)" stroke-width="1"/><path d="M3 112.9 H11" stroke="rgba(70,40,40,0.55)" stroke-width="1"/><path d="M3 113.9 H11" stroke="rgba(255,225,225,0.45)" stroke-width="1"/><path d="M3 114.8 H11" stroke="rgba(70,40,40,0.55)" stroke-width="1"/><path d="M3 115.8 H11" stroke="rgba(255,225,225,0.45)" stroke-width="1"/><path d="M3.5 3 V115 M10.5 3 V115" stroke="rgba(60,35,35,0.5)" stroke-width="1"/></svg><svg class="a" style="left:316px;top:485px" width="118" height="14" viewBox="0 0 118 14"><defs><linearGradient id="g316_485" x1="0" y1="0" x2="1" y2="0"><stop offset="0" stop-color="#2a1a1a"/><stop offset="0.18" stop-color="#9a7070"/><stop offset="0.5" stop-color="#f4c4c4"/><stop offset="0.82" stop-color="#9a7070"/><stop offset="1" stop-color="#2a1a1a"/></linearGradient></defs><rect x="0" y="0" width="118" height="14" fill="#000"/><rect x="1.5" y="1.5" width="115" height="11" fill="url(#g316_485)"/><path d="M3.2 3 V11" stroke="rgba(70,40,40,0.55)" stroke-width="1"/><path d="M4.2 3 V11" stroke="rgba(255,225,225,0.45)" stroke-width="1"/><path d="M5.1 3 V11" stroke="rgba(70,40,40,0.55)" stroke-width="1"/><path d="M6.1 3 V11" stroke="rgba(255,225,225,0.45)" stroke-width="1"/><path d="M8.9 3 V11" stroke="rgba(70,40,40,0.55)" stroke-width="1"/><path d="M9.9 3 V11" stroke="rgba(255,225,225,0.45)" stroke-width="1"/><path d="M14.3 3 V11" stroke="rgba(70,40,40,0.55)" stroke-width="1"/><path d="M15.3 3 V11" stroke="rgba(255,225,225,0.45)" stroke-width="1"/><path d="M21.3 3 V11" stroke="rgba(70,40,40,0.55)" stroke-width="1"/><path d="M22.3 3 V11" stroke="rgba(255,225,225,0.45)" stroke-width="1"/><path d="M29.5 3 V11" stroke="rgba(70,40,40,0.55)" stroke-width="1"/><path d="M30.5 3 V11" stroke="rgba(255,225,225,0.45)" stroke-width="1"/><path d="M38.8 3 V11" stroke="rgba(70,40,40,0.55)" stroke-width="1"/><path d="M39.8 3 V11" stroke="rgba(255,225,225,0.45)" stroke-width="1"/><path d="M48.7 3 V11" stroke="rgba(70,40,40,0.55)" stroke-width="1"/><path d="M49.7 3 V11" stroke="rgba(255,225,225,0.45)" stroke-width="1"/><path d="M59.0 3 V11" stroke="rgba(70,40,40,0.55)" stroke-width="1"/><path d="M60.0 3 V11" stroke="rgba(255,225,225,0.45)" stroke-width="1"/><path d="M69.3 3 V11" stroke="rgba(70,40,40,0.55)" stroke-width="1"/><path d="M70.3 3 V11" stroke="rgba(255,225,225,0.45)" stroke-width="1"/><path d="M79.2 3 V11" stroke="rgba(70,40,40,0.55)" stroke-width="1"/><path d="M80.2 3 V11" stroke="rgba(255,225,225,0.45)" stroke-width="1"/><path d="M88.5 3 V11" stroke="rgba(70,40,40,0.55)" stroke-width="1"/><path d="M89.5 3 V11" stroke="rgba(255,225,225,0.45)" stroke-width="1"/><path d="M96.7 3 V11" stroke="rgba(70,40,40,0.55)" stroke-width="1"/><path d="M97.7 3 V11" stroke="rgba(255,225,225,0.45)" stroke-width="1"/><path d="M103.7 3 V11" stroke="rgba(70,40,40,0.55)" stroke-width="1"/><path d="M104.7 3 V11" stroke="rgba(255,225,225,0.45)" stroke-width="1"/><path d="M109.1 3 V11" stroke="rgba(70,40,40,0.55)" stroke-width="1"/><path d="M110.1 3 V11" stroke="rgba(255,225,225,0.45)" stroke-width="1"/><path d="M112.9 3 V11" stroke="rgba(70,40,40,0.55)" stroke-width="1"/><path d="M113.9 3 V11" stroke="rgba(255,225,225,0.45)" stroke-width="1"/><path d="M114.8 3 V11" stroke="rgba(70,40,40,0.55)" stroke-width="1"/><path d="M115.8 3 V11" stroke="rgba(255,225,225,0.45)" stroke-width="1"/><path d="M3 3.5 H115 M3 10.5 H115" stroke="rgba(60,35,35,0.5)" stroke-width="1"/></svg><div class="t" style="left:249px;top:487px;line-height:11px;font-family:'Liberation Sans';font-size:11px;color:#000;">Rotx</div><div class="t" style="left:282px;top:487px;line-height:11px;font-family:'Liberation Sans';font-size:11px;color:#000;">Roty</div><div class="t" style="left:771px;top:487px;line-height:11px;font-family:'Liberation Sans';font-size:11px;color:#000;letter-spacing:-0.350px;">Motion Z</div><div class="t" style="left:250px;top:513px;line-height:11px;font-family:'Liberation Sans';font-size:11px;color:#000;letter-spacing:0.200px;">Active Scene: [1]; Scene range: [Min:1; Max:5; Delta:1; Count:5]  M1: [20/10/2004 10:00:00; 108540]</div><div class="t" style="left:250px;top:534px;line-height:11px;font-family:'Liberation Sans';font-size:11px;color:#000;letter-spacing:0.165px;">M2: [10/10/2004 10:00:00; 1]  M3: [20/10/2004 10:00:00; 1]</div><div class="a" style="left:820px;top:101px;width:220px;height:19px;background:#dadada;border:1px solid #c8c8c8;box-sizing:border-box"></div><div class="t" style="left:825px;top:107px;line-height:11px;font-family:'Liberation Sans';font-size:11px;color:#000;letter-spacing:-0.144px;">ROI Selection</div><svg class="a" style="left:1012px;top:106px" width="24" height="9" viewBox="0 0 24 9" overflow="visible">
<path d="M-0.5 8.5 V3.5 H5.5 V8.5 Z M-0.5 4.5 H5.5" fill="none" stroke="#000" stroke-width="1"/>
<path d="M1.5 2.5 V0.5 H7.5 V5.5 H5.5 M1.5 1.5 H7.5" fill="none" stroke="#000" stroke-width="1"/>
<path d="M16 0.8 L23 8 M23 0.8 L16 8" stroke="#000" stroke-width="1.6"/>
</svg><div class="a" style="left:821px;top:123px;width:219px;height:74px;background:#fff;border:1px solid #828790;box-sizing:border-box"></div><div class="a" style="left:823px;top:125px;width:64px;height:17px;background:#f3f3f3;border:1px solid #dadada;box-sizing:border-box"></div><div class="t" style="left:826px;top:129px;line-height:11px;font-family:'Liberation Sans';font-size:11px;color:#000;">Box</div><div class="t" style="left:890.5px;top:129px;line-height:11px;font-family:'Liberation Sans';font-size:11px;color:#000;">DatasetSphere</div><div class="t" style="left:971px;top:129px;line-height:11px;font-family:'Liberation Sans';font-size:11px;color:#000;">OPlane</div><div class="t" style="left:826px;top:146px;line-height:11px;font-family:'Liberation Sans';font-size:11px;color:#000;">Curve</div><div class="t" style="left:890.5px;top:146px;line-height:11px;font-family:'Liberation Sans';font-size:11px;color:#000;">Line</div><div class="t" style="left:971px;top:146px;line-height:11px;font-family:'Liberation Sans';font-size:11px;color:#000;">Point</div><div class="t" style="left:826px;top:163px;line-height:11px;font-family:'Liberation Sans';font-size:11px;color:#000;">DatasetBox</div><div class="t" style="left:890.5px;top:163px;line-height:11px;font-family:'Liberation Sans';font-size:11px;color:#000;">None</div><div class="t" style="left:971px;top:163px;line-height:11px;font-family:'Liberation Sans';font-size:11px;color:#000;">Sphere</div><div class="a" style="left:821px;top:201px;width:219px;height:92px;background:#f0f0f0;border:1px solid #868b94;box-sizing:border-box"></div><div class="t" style="left:822px;top:204px;line-height:11px;font-family:'Liberation Sans';font-size:11px;font-weight:bold;color:#000;">[Box]:</div><div class="t" style="left:822px;top:217px;line-height:11px;font-family:'Liberation Sans';font-size:11px;color:#000;letter-spacing:-0.084px;">Region of interest in a form of parallelepiped</div><div class="t" style="left:822px;top:230px;line-height:11px;font-family:'Liberation Sans';font-size:11px;color:#000;letter-spacing:-0.169px;">moveable and scaleable in any direction.</div><div class="a" style="left:820px;top:299px;width:220px;height:19px;background:#dadada;border:1px solid #c8c8c8;box-sizing:border-box"></div><div class="t" style="left:825px;top:305px;line-height:11px;font-family:'Liberation Sans';font-size:11px;color:#000;letter-spacing:-0.201px;">ROI Properties: Box</div><svg class="a" style="left:1012px;top:304px" width="24" height="9" viewBox="0 0 24 9" overflow="visible">
<path d="M-0.5 8.5 V3.5 H5.5 V8.5 Z M-0.5 4.5 H5.5" fill="none" stroke="#000" stroke-width="1"/>
<path d="M1.5 2.5 V0.5 H7.5 V5.5 H5.5 M1.5 1.5 H7.5" fill="none" stroke="#000" stroke-width="1"/>
<path d="M16 0.8 L23 8 M23 0.8 L16 8" stroke="#000" stroke-width="1.6"/>
</svg><div class="a" style="left:821px;top:321px;width:219px;height:163px;background:#fff;border:1px solid #828790;box-sizing:border-box"></div><div class="a" style="left:822px;top:322px;width:200px;height:22px;background:#fcfcfc"></div><div class="a" style="left:822px;top:344px;width:200px;height:1px;background:#dde8f5"></div><div class="a" style="left:921px;top:322px;width:1px;height:22px;background:#dde8f5"></div><div class="t" style="left:826px;top:330px;line-height:11px;font-family:'Liberation Sans';font-size:11px;color:#000;">Property</div><div class="t" style="left:926px;top:330px;line-height:11px;font-family:'Liberation Sans';font-size:11px;color:#000;">Value</div><div class="a" style="left:822px;top:345px;width:200px;height:18px;background:#ffffff"></div><div class="a" style="left:822px;top:363px;width:200px;height:1px;background:#e0e0e0"></div><div class="a" style="left:921px;top:344px;width:1px;height:19px;background:#e0e0e0"></div><div class="t" style="left:825px;top:350px;line-height:11px;font-family:'Liberation Sans';font-size:11px;color:#8d8d8d;">Name</div><div class="t" style="left:926px;top:350px;line-height:11px;font-family:'Liberation Sans';font-size:11px;color:#8d8d8d;">Box</div><div class="a" style="left:822px;top:364px;width:200px;height:18px;background:#f6f6f6"></div><div class="a" style="left:822px;top:382px;width:200px;height:1px;background:#e0e0e0"></div><div class="a" style="left:921px;top:363px;width:1px;height:19px;background:#e0e0e0"></div><div class="t" style="left:825px;top:369px;line-height:11px;font-family:'Liberation Sans';font-size:11px;color:#000;">Point</div><div class="t" style="left:926px;top:369px;line-height:11px;font-family:'Liberation Sans';font-size:11px;color:#000;">(5; 5; 5)</div><div class="a" style="left:822px;top:383px;width:200px;height:18px;background:#ffffff"></div><div class="a" style="left:822px;top:401px;width:200px;height:1px;background:#e0e0e0"></div><div class="a" style="left:921px;top:382px;width:1px;height:19px;background:#e0e0e0"></div><div class="t" style="left:831px;top:388px;line-height:11px;font-family:'Liberation Sans';font-size:11px;color:#000;">X</div><div class="t" style="left:926px;top:388px;line-height:11px;font-family:'Liberation Sans';font-size:11px;color:#000;">5</div><div class="a" style="left:822px;top:402px;width:200px;height:18px;background:#f6f6f6"></div><div class="a" style="left:822px;top:420px;width:200px;height:1px;background:#e0e0e0"></div><div class="a" style="left:921px;top:401px;width:1px;height:19px;background:#e0e0e0"></div><div class="t" style="left:831px;top:407px;line-height:11px;font-family:'Liberation Sans';font-size:11px;color:#000;">Y</div><div class="t" style="left:926px;top:407px;line-height:11px;font-family:'Liberation Sans';font-size:11px;color:#000;">5</div><div class="a" style="left:822px;top:421px;width:200px;height:18px;background:#ffffff"></div><div class="a" style="left:822px;top:439px;width:200px;height:1px;background:#e0e0e0"></div><div class="a" style="left:921px;top:420px;width:1px;height:19px;background:#e0e0e0"></div><div class="t" style="left:831px;top:426px;line-height:11px;font-family:'Liberation Sans';font-size:11px;color:#000;">Z</div><div class="t" style="left:926px;top:426px;line-height:11px;font-family:'Liberation Sans';font-size:11px;color:#000;">5</div><div class="a" style="left:822px;top:440px;width:200px;height:18px;background:#f6f6f6"></div><div class="a" style="left:822px;top:458px;width:200px;height:1px;background:#e0e0e0"></div><div class="a" style="left:921px;top:439px;width:1px;height:19px;background:#e0e0e0"></div><div class="t" style="left:825px;top:445px;line-height:11px;font-family:'Liberation Sans';font-size:11px;color:#000;">Delta</div><div class="t" style="left:926px;top:445px;line-height:11px;font-family:'Liberation Sans';font-size:11px;color:#000;">(50; 50; 50)</div><div class="a" style="left:822px;top:459px;width:200px;height:7px;background:#ffffff"></div><div class="a" style="left:921px;top:458px;width:1px;height:8px;background:#e0e0e0"></div><div class="t" style="left:831px;top:464px;line-height:11px;font-family:'Liberation Sans';font-size:11px;color:#000;">X</div><div class="t" style="left:926px;top:464px;line-height:11px;font-family:'Liberation Sans';font-size:11px;color:#000;">50</div><div class="a" style="left:1022px;top:322px;width:17px;height:145px;background:#f0f0f0"></div><div class="a" style="left:1022px;top:339px;width:15px;height:50px;background:#cdcdcd"></div><div class="a" style="left:822px;top:467px;width:217px;height:16px;background:#f0f0f0"></div><div class="a" style="left:839px;top:468px;width:164px;height:14px;background:#cdcdcd"></div><div class="a" style="left:821px;top:489px;width:219px;height:60px;background:#f0f0f0;border:1px solid #868b94;box-sizing:border-box"></div><div class="a" style="left:8px;top:555px;width:215px;height:19px;background:#dadada;border:1px solid #c8c8c8;box-sizing:border-box"></div><div class="t" style="left:13px;top:561px;line-height:11px;font-family:'Liberation Sans';font-size:11px;color:#000;">Output</div><svg class="a" style="left:195px;top:560px" width="24" height="9" viewBox="0 0 24 9" overflow="visible">
<path d="M-0.5 8.5 V3.5 H5.5 V8.5 Z M-0.5 4.5 H5.5" fill="none" stroke="#000" stroke-width="1"/>
<path d="M1.5 2.5 V0.5 H7.5 V5.5 H5.5 M1.5 1.5 H7.5" fill="none" stroke="#000" stroke-width="1"/>
<path d="M16 0.8 L23 8 M23 0.8 L16 8" stroke="#000" stroke-width="1.6"/>
</svg><div class="t" style="left:10.5px;top:585px;line-height:11px;font-family:'Liberation Sans';font-size:11px;color:#000;letter-spacing:0.322px;">Output from:</div><div class="a" style="left:80px;top:579px;width:69px;height:20px;background:linear-gradient(#f2f2f2,#e4e4e4);border:1px solid #acacac;box-sizing:border-box"></div><div class="t" style="left:83.5px;top:585px;line-height:11px;font-family:'Liberation Sans';font-size:11px;color:#000;letter-spacing:-0.635px;">LUA</div><div class="a" style="left:11px;top:605px;width:209px;height:349px;background:#fff;border:1px solid #828790;box-sizing:border-box"></div><div class="t" style="left:16.5px;top:608px;line-height:11px;font-family:'Liberation Sans';font-size:11px;color:#000;letter-spacing:0.248px;">[2;3;0.5]</div><div class="t" style="left:16.5px;top:621px;line-height:11px;font-family:'Liberation Sans';font-size:11px;color:#000;letter-spacing:0.248px;">[2;3;0.5]</div><div class="t" style="left:16.5px;top:634px;line-height:11px;font-family:'Liberation Sans';font-size:11px;color:#000;letter-spacing:0.248px;">[2;3;0.5]</div><div class="t" style="left:16.5px;top:647px;line-height:11px;font-family:'Liberation Sans';font-size:11px;color:#000;letter-spacing:0.248px;">[2;3;0.5]</div><div class="t" style="left:16.5px;top:660px;line-height:11px;font-family:'Liberation Sans';font-size:11px;color:#000;letter-spacing:0.248px;">[2;3;0.5]</div><div class="t" style="left:16.5px;top:673px;line-height:11px;font-family:'Liberation Sans';font-size:11px;color:#000;letter-spacing:0.248px;">[2;3;0.5]</div><div class="t" style="left:16.5px;top:686px;line-height:11px;font-family:'Liberation Sans';font-size:11px;color:#000;letter-spacing:0.248px;">[2;3;0.5]</div><div class="t" style="left:16.5px;top:699px;line-height:11px;font-family:'Liberation Sans';font-size:11px;color:#000;letter-spacing:0.248px;">[2;3;0.5]</div><div class="t" style="left:16.5px;top:712px;line-height:11px;font-family:'Liberation Sans';font-size:11px;color:#000;letter-spacing:0.248px;">[2;3;0.5]</div><div class="t" style="left:16.5px;top:725px;line-height:11px;font-family:'Liberation Sans';font-size:11px;color:#000;letter-spacing:0.248px;">[2;3;0.5]</div><div class="t" style="left:16.5px;top:738px;line-height:11px;font-family:'Liberation Sans';font-size:11px;color:#000;letter-spacing:0.248px;">[2;3;0.5]</div><div class="t" style="left:16.5px;top:751px;line-height:11px;font-family:'Liberation Sans';font-size:11px;color:#000;letter-spacing:0.248px;">[2;3;0.5]</div><div class="t" style="left:16.5px;top:764px;line-height:11px;font-family:'Liberation Sans';font-size:11px;color:#000;letter-spacing:0.248px;">[2;3;0.5]</div><div class="t" style="left:16.5px;top:777px;line-height:11px;font-family:'Liberation Sans';font-size:11px;color:#000;letter-spacing:0.248px;">[2;3;0.5]</div><div class="t" style="left:16.5px;top:790px;line-height:11px;font-family:'Liberation Sans';font-size:11px;color:#000;letter-spacing:0.248px;">[2;3;0.5]</div><div class="t" style="left:16.5px;top:803px;line-height:11px;font-family:'Liberation Sans';font-size:11px;color:#000;letter-spacing:0.248px;">[2;3;0.5]</div><div class="t" style="left:16.5px;top:816px;line-height:11px;font-family:'Liberation Sans';font-size:11px;color:#000;letter-spacing:0.248px;">[2;3;0.5]</div><div class="t" style="left:16.5px;top:829px;line-height:11px;font-family:'Liberation Sans';font-size:11px;color:#000;letter-spacing:0.248px;">[2;3;0.5]</div><div class="t" style="left:16.5px;top:842px;line-height:11px;font-family:'Liberation Sans';font-size:11px;color:#000;letter-spacing:0.248px;">[2;3;0.5]</div><div class="t" style="left:16.5px;top:855px;line-height:11px;font-family:'Liberation Sans';font-size:11px;color:#000;letter-spacing:0.248px;">[2;3;0.5]</div><div class="t" style="left:16.5px;top:868px;line-height:11px;font-family:'Liberation Sans';font-size:11px;color:#000;letter-spacing:0.248px;">[2;3;0.5]</div><div class="t" style="left:16.5px;top:881px;line-height:11px;font-family:'Liberation Sans';font-size:11px;color:#000;letter-spacing:0.248px;">[2;3;0.5]</div><div class="t" style="left:16.5px;top:894px;line-height:11px;font-family:'Liberation Sans';font-size:11px;color:#000;letter-spacing:0.248px;">[2;3;0.5]</div><div class="t" style="left:16.5px;top:907px;line-height:11px;font-family:'Liberation Sans';font-size:11px;color:#000;letter-spacing:0.248px;">[2;3;0.5]</div><div class="t" style="left:16.5px;top:920px;line-height:11px;font-family:'Liberation Sans';font-size:11px;color:#000;letter-spacing:0.248px;">[2;3;0.5]</div><div class="t" style="left:16.5px;top:933px;line-height:11px;font-family:'Liberation Sans';font-size:11px;color:#000;letter-spacing:0.248px;">[2;3;0.5]</div><div class="t" style="left:16.5px;top:946px;line-height:11px;font-family:'Liberation Sans';font-size:11px;color:#000;letter-spacing:0.248px;">[2;3;0.5]</div><div class="a" style="left:12px;top:953px;width:207px;height:12px;background:#f0f0f0"></div><div class="a" style="left:203px;top:606px;width:16px;height:347px;background:#f0f0f0"></div><div class="a" style="left:204px;top:916px;width:14px;height:18px;background:#cdcdcd"></div><div class="a" style="left:11px;top:605px;width:209px;height:349px;background:transparent;border:1px solid #828790;box-sizing:border-box"></div><div class="a" style="left:8px;top:957px;width:214px;height:1px;background:#acacac"></div><div class="a" style="left:10px;top:957px;width:61px;height:19px;background:linear-gradient(#f0f0f0,#e5e5e5);border:1px solid #acacac;box-sizing:border-box"></div><div class="t" style="left:20px;top:962px;line-height:11px;font-family:'Liberation Sans';font-size:11px;color:#000;">Undo/...</div><div class="a" style="left:123px;top:957px;width:45px;height:19px;background:linear-gradient(#f0f0f0,#e5e5e5);border:1px solid #acacac;box-sizing:border-box"></div><div class="t" style="left:134px;top:962px;line-height:11px;font-family:'Liberation Sans';font-size:11px;color:#000;">Lo...</div><div class="a" style="left:168px;top:957px;width:53px;height:19px;background:linear-gradient(#f0f0f0,#e5e5e5);border:1px solid #acacac;box-sizing:border-box"></div><div class="t" style="left:182.5px;top:962px;line-height:11px;font-family:'Liberation Sans';font-size:11px;color:#000;">Dat...</div><div class="a" style="left:70px;top:955px;width:54px;height:23px;background:#fff;border:1px solid #acacac;border-top:none;box-sizing:border-box"></div><div class="t" style="left:84px;top:963px;line-height:11px;font-family:'Liberation Sans';font-size:11px;color:#000;">Ou...</div><div class="a" style="left:227px;top:555px;width:480px;height:19px;background:#dadada;border:1px solid #c8c8c8;box-sizing:border-box"></div><div class="t" style="left:231.5px;top:561px;line-height:11px;font-family:'Liberation Sans';font-size:11px;color:#000;">Vector Field Editor</div><svg class="a" style="left:678px;top:561px" width="25" height="9" viewBox="0 0 25 9">
<path d="M0.5 8.5 V3.5 H5.5 V8.5 Z M0.5 4.5 H5.5" fill="none" stroke="#000"/>
<path d="M2.5 2.5 V0.5 H7.5 V5.5 H5.5 M2.5 1.5 H7.5" fill="none" stroke="#000"/>
<path d="M16 0.8 L23 8 M23 0.8 L16 8" stroke="#000" stroke-width="1.6"/></svg><div class="t" style="left:229.5px;top:585px;line-height:11px;font-family:'Liberation Sans';font-size:11px;color:#000;">Scripting</div><div class="a" style="left:277px;top:579px;width:64px;height:20px;background:linear-gradient(#f2f2f2,#e4e4e4);border:1px solid #acacac;box-sizing:border-box"></div><div class="t" style="left:280.5px;top:585px;line-height:11px;font-family:'Liberation Sans';font-size:11px;color:#000;letter-spacing:-0.635px;">LUA</div><div class="t" style="left:234.8px;top:610px;line-height:11px;font-family:'Liberation Sans';font-size:11px;color:#8d8d8d;">Copy</div><div class="t" style="left:272.5px;top:610px;line-height:11px;font-family:'Liberation Sans';font-size:11px;color:#8d8d8d;">Cut</div><div class="t" style="left:302.3px;top:610px;line-height:11px;font-family:'Liberation Sans';font-size:11px;color:#000;">Paste</div><div class="t" style="left:342.1px;top:610px;line-height:11px;font-family:'Liberation Sans';font-size:11px;color:#000;">Erase</div><div class="t" style="left:382.2px;top:610px;line-height:11px;font-family:'Liberation Sans';font-size:11px;color:#000;">Erase Full</div><div class="t" style="left:440.7px;top:610px;line-height:11px;font-family:'Liberation Sans';font-size:11px;color:#000;">Undo</div><div class="t" style="left:479px;top:610px;line-height:11px;font-family:'Liberation Sans';font-size:11px;color:#8d8d8d;">Redo</div><div class="t" style="left:517.2px;top:610px;line-height:11px;font-family:'Liberation Sans';font-size:11px;color:#8d8d8d;">Comment</div><div class="t" style="left:575px;top:610px;line-height:11px;font-family:'Liberation Sans';font-size:11px;color:#8d8d8d;">Uncomment</div><div class="a" style="left:227px;top:628px;width:480px;height:279px;background:#fff;border:1px solid #7eb4ea;box-sizing:border-box"></div><div class="a" style="left:259px;top:664px;width:426px;height:14px;background:#ececec"></div><div class="a" style="left:228px;top:629px;width:462px;height:277px;overflow:hidden"><div class="a" style="left:-228px;top:-629px;width:1048px;height:1011px"><div class="t" style="left:242px;top:624px;font-family:'Liberation Mono';font-size:11.6px;line-height:12px;color:#8080a0;letter-spacing:0.04px">1</div><div class="t" style="left:259.4px;top:624px;font-family:'Liberation Mono';font-size:11.6px;line-height:12px;letter-spacing:0.04px"><span style="color:#008000">-- Neural network from scratch</span></div><div class="t" style="left:242px;top:638px;font-family:'Liberation Mono';font-size:11.6px;line-height:12px;color:#8080a0;letter-spacing:0.04px">2</div><div class="t" style="left:259.4px;top:638px;font-family:'Liberation Mono';font-size:11.6px;line-height:12px;letter-spacing:0.04px"><span style="color:#000;-webkit-text-stroke:0.2px #000">vec</span><span style="color:#000"> = </span><span style="color:#000;-webkit-text-stroke:0.2px #000">vector</span><span style="color:#000">.</span><span style="color:#000;-webkit-text-stroke:0.2px #000">new</span></div><div class="t" style="left:242px;top:652px;font-family:'Liberation Mono';font-size:11.6px;line-height:12px;color:#8080a0;letter-spacing:0.04px">3</div><div class="t" style="left:259.4px;top:652px;font-family:'Liberation Mono';font-size:11.6px;line-height:12px;letter-spacing:0.04px"><span style="color:#000;-webkit-text-stroke:0.2px #000">mat</span><span style="color:#000"> = </span><span style="color:#000;-webkit-text-stroke:0.2px #000">matrix</span><span style="color:#000">.</span><span style="color:#000;-webkit-text-stroke:0.2px #000">new</span></div><div class="t" style="left:242px;top:666px;font-family:'Liberation Mono';font-size:11.6px;line-height:12px;color:#8080a0;letter-spacing:0.04px">4</div><div class="t" style="left:259.4px;top:666px;font-family:'Liberation Mono';font-size:11.6px;line-height:12px;letter-spacing:0.04px"><span style="color:#000;-webkit-text-stroke:0.2px #000">inputs</span><span style="color:#000"> = </span><span style="color:#800080">vec</span><span style="color:#000">(</span><span style="color:#000080">1</span><span style="color:#000">, </span><span style="color:#000080">2</span><span style="color:#000">, </span><span style="color:#000080">3</span><span style="color:#000">, </span><span style="color:#000080">2.5</span><span style="color:#000">*</span><span style="color:#000;-webkit-text-stroke:0.2px #000">$ROICIIndex</span><span style="color:#000">)</span></div><div class="t" style="left:242px;top:680px;font-family:'Liberation Mono';font-size:11.6px;line-height:12px;color:#8080a0;letter-spacing:0.04px">5</div><div class="t" style="left:259.4px;top:680px;font-family:'Liberation Mono';font-size:11.6px;line-height:12px;letter-spacing:0.04px"></div><div class="t" style="left:242px;top:694px;font-family:'Liberation Mono';font-size:11.6px;line-height:12px;color:#8080a0;letter-spacing:0.04px">6</div><div class="t" style="left:259.4px;top:694px;font-family:'Liberation Mono';font-size:11.6px;line-height:12px;letter-spacing:0.04px"><span style="color:#000;-webkit-text-stroke:0.2px #000">weights</span><span style="color:#000"> = </span><span style="color:#800080">mat</span><span style="color:#000">(</span></div><div class="t" style="left:242px;top:708px;font-family:'Liberation Mono';font-size:11.6px;line-height:12px;color:#8080a0;letter-spacing:0.04px">7</div><div class="t" style="left:259.4px;top:708px;font-family:'Liberation Mono';font-size:11.6px;line-height:12px;letter-spacing:0.04px"><span style="color:#000">           {</span></div><div class="t" style="left:242px;top:722px;font-family:'Liberation Mono';font-size:11.6px;line-height:12px;color:#8080a0;letter-spacing:0.04px">8</div><div class="t" style="left:259.4px;top:722px;font-family:'Liberation Mono';font-size:11.6px;line-height:12px;letter-spacing:0.04px"><span style="color:#000">                       </span><span style="color:#000080">{0.2, 0.8, -0.5, 1.0},</span></div><div class="t" style="left:242px;top:736px;font-family:'Liberation Mono';font-size:11.6px;line-height:12px;color:#8080a0;letter-spacing:0.04px">9</div><div class="t" style="left:259.4px;top:736px;font-family:'Liberation Mono';font-size:11.6px;line-height:12px;letter-spacing:0.04px"><span style="color:#000">                       </span><span style="color:#000080">{0.5, -0.91, 0.26, -0.5},</span></div><div class="t" style="left:235px;top:750px;font-family:'Liberation Mono';font-size:11.6px;line-height:12px;color:#8080a0;letter-spacing:0.04px">10</div><div class="t" style="left:259.4px;top:750px;font-family:'Liberation Mono';font-size:11.6px;line-height:12px;letter-spacing:0.04px"><span style="color:#000">                       </span><span style="color:#000080">{-0.26, -0.27, 0.17, 0.87}</span></div><div class="t" style="left:235px;top:764px;font-family:'Liberation Mono';font-size:11.6px;line-height:12px;color:#8080a0;letter-spacing:0.04px">11</div><div class="t" style="left:259.4px;top:764px;font-family:'Liberation Mono';font-size:11.6px;line-height:12px;letter-spacing:0.04px"><span style="color:#000">           }</span></div><div class="t" style="left:235px;top:778px;font-family:'Liberation Mono';font-size:11.6px;line-height:12px;color:#8080a0;letter-spacing:0.04px">12</div><div class="t" style="left:259.4px;top:778px;font-family:'Liberation Mono';font-size:11.6px;line-height:12px;letter-spacing:0.04px"><span style="color:#000">)</span></div><div class="t" style="left:235px;top:792px;font-family:'Liberation Mono';font-size:11.6px;line-height:12px;color:#8080a0;letter-spacing:0.04px">13</div><div class="t" style="left:259.4px;top:792px;font-family:'Liberation Mono';font-size:11.6px;line-height:12px;letter-spacing:0.04px"></div><div class="t" style="left:235px;top:806px;font-family:'Liberation Mono';font-size:11.6px;line-height:12px;color:#8080a0;letter-spacing:0.04px">14</div><div class="t" style="left:259.4px;top:806px;font-family:'Liberation Mono';font-size:11.6px;line-height:12px;letter-spacing:0.04px"><span style="color:#000;-webkit-text-stroke:0.2px #000">biases</span><span style="color:#000"> = </span><span style="color:#800080">vec</span><span style="color:#000">(</span><span style="color:#000080">2, 3, 0.5)</span></div><div class="t" style="left:235px;top:820px;font-family:'Liberation Mono';font-size:11.6px;line-height:12px;color:#8080a0;letter-spacing:0.04px">15</div><div class="t" style="left:259.4px;top:820px;font-family:'Liberation Mono';font-size:11.6px;line-height:12px;letter-spacing:0.04px"><span style="color:#000;-webkit-text-stroke:0.2px #000">out</span><span style="color:#000"> = </span><span style="color:#000;-webkit-text-stroke:0.2px #000">weights</span><span style="color:#000"> * </span><span style="color:#000;-webkit-text-stroke:0.2px #000">inputs</span><span style="color:#000"> + </span><span style="color:#000;-webkit-text-stroke:0.2px #000">biases</span></div><div class="t" style="left:235px;top:834px;font-family:'Liberation Mono';font-size:11.6px;line-height:12px;color:#8080a0;letter-spacing:0.04px">16</div><div class="t" style="left:259.4px;top:834px;font-family:'Liberation Mono';font-size:11.6px;line-height:12px;letter-spacing:0.04px"><span style="color:#800080">local</span><span style="color:#000"> </span><span style="color:#000;-webkit-text-stroke:0.2px #000">a</span><span style="color:#000"> = </span><span style="color:#800080">mat</span><span style="color:#000">(</span><span style="color:#000080">3</span><span style="color:#000">, </span><span style="color:#008000">&#x27;rotation&#x27;</span><span style="color:#000">,</span><span style="color:#008080">math.rad</span><span style="color:#000">(</span><span style="color:#000080">360),0)</span></div><div class="t" style="left:235px;top:848px;font-family:'Liberation Mono';font-size:11.6px;line-height:12px;color:#8080a0;letter-spacing:0.04px">17</div><div class="t" style="left:259.4px;top:848px;font-family:'Liberation Mono';font-size:11.6px;line-height:12px;letter-spacing:0.04px"><span style="color:#800080">local</span><span style="color:#000"> </span><span style="color:#000;-webkit-text-stroke:0.2px #000">b</span><span style="color:#000"> = </span><span style="color:#000;-webkit-text-stroke:0.2px #000">a</span><span style="color:#000">*</span><span style="color:#000;-webkit-text-stroke:0.2px #000">biases</span></div><div class="t" style="left:235px;top:862px;font-family:'Liberation Mono';font-size:11.6px;line-height:12px;color:#8080a0;letter-spacing:0.04px">18</div><div class="t" style="left:259.4px;top:862px;font-family:'Liberation Mono';font-size:11.6px;line-height:12px;letter-spacing:0.04px"><span style="color:#800080">print</span><span style="color:#000">(</span><span style="color:#000;-webkit-text-stroke:0.2px #000">b</span><span style="color:#000">)</span></div><div class="t" style="left:235px;top:876px;font-family:'Liberation Mono';font-size:11.6px;line-height:12px;color:#8080a0;letter-spacing:0.04px">19</div><div class="t" style="left:259.4px;top:876px;font-family:'Liberation Mono';font-size:11.6px;line-height:12px;letter-spacing:0.04px"></div><div class="t" style="left:235px;top:890px;font-family:'Liberation Mono';font-size:11.6px;line-height:12px;color:#8080a0;letter-spacing:0.04px">20</div><div class="t" style="left:259.4px;top:890px;font-family:'Liberation Mono';font-size:11.6px;line-height:12px;letter-spacing:0.04px"><span style="color:#000;-webkit-text-stroke:0.2px #000">_luareturnvalue</span><span style="color:#000">=(</span><span style="color:#000;-webkit-text-stroke:0.2px #000">a</span><span style="color:#000">*</span><span style="color:#000;-webkit-text-stroke:0.2px #000">M2!Vector</span><span style="color:#000">)*</span><span style="color:#000;-webkit-text-stroke:0.2px #000">20</span></div></div></div><div class="a" style="left:690px;top:629px;width:16px;height:277px;background:#f0f0f0"></div><div class="a" style="left:690px;top:656px;width:16px;height:232px;background:#cdcdcd"></div><div class="a" style="left:227px;top:914px;width:480px;height:19px;background:#fff;border:1px solid #acacac;box-sizing:border-box"></div><div class="t" style="left:234.8px;top:941px;line-height:11px;font-family:'Liberation Sans';font-size:11px;color:#8d8d8d;">Apply</div><div class="a" style="left:339px;top:957px;width:368px;height:1px;background:#acacac"></div><div class="a" style="left:339px;top:958px;width:124px;height:18px;background:linear-gradient(#f0f0f0,#e5e5e5);border:1px solid #acacac;box-sizing:border-box"></div><div class="t" style="left:349px;top:962px;line-height:11px;font-family:'Liberation Sans';font-size:11px;color:#000;letter-spacing:-0.256px;">Colormap Field Editor</div><div class="a" style="left:463px;top:958px;width:107px;height:18px;background:linear-gradient(#f0f0f0,#e5e5e5);border:1px solid #acacac;box-sizing:border-box"></div><div class="t" style="left:474px;top:962px;line-height:11px;font-family:'Liberation Sans';font-size:11px;color:#000;letter-spacing:-0.174px;">Script Field Editor</div><div class="a" style="left:570px;top:958px;width:107px;height:18px;background:linear-gradient(#f0f0f0,#e5e5e5);border:1px solid #acacac;box-sizing:border-box"></div><div class="t" style="left:581.5px;top:962px;line-height:11px;font-family:'Liberation Sans';font-size:11px;color:#000;letter-spacing:-0.257px;">Scalar Field Editor</div><div class="a" style="left:227px;top:956px;width:113px;height:22px;background:#fff;border:1px solid #acacac;border-top:none;box-sizing:border-box"></div><div class="t" style="left:238.5px;top:963px;line-height:11px;font-family:'Liberation Sans';font-size:11px;color:#000;letter-spacing:-0.151px;">Vector Field Editor</div><div class="a" style="left:711px;top:555px;width:329px;height:19px;background:#dadada;border:1px solid #c8c8c8;box-sizing:border-box"></div><div class="t" style="left:716px;top:561px;line-height:11px;font-family:'Liberation Sans';font-size:11px;color:#000;letter-spacing:-0.551px;">RVOs Manager: TEST_LuaScalar9_TEST_SPEED</div><svg class="a" style="left:1012px;top:560px" width="24" height="9" viewBox="0 0 24 9" overflow="visible">
<path d="M-0.5 8.5 V3.5 H5.5 V8.5 Z M-0.5 4.5 H5.5" fill="none" stroke="#000" stroke-width="1"/>
<path d="M1.5 2.5 V0.5 H7.5 V5.5 H5.5 M1.5 1.5 H7.5" fill="none" stroke="#000" stroke-width="1"/>
<path d="M16 0.8 L23 8 M23 0.8 L16 8" stroke="#000" stroke-width="1.6"/>
</svg><div class="a" style="left:711px;top:596px;width:327px;height:360px;background:#fff;border:1px solid #acacac;box-sizing:border-box"></div><div class="a" style="left:712px;top:576px;width:108px;height:22px;background:#fff;border:1px solid #acacac;border-bottom:none;box-sizing:border-box"></div><div class="a" style="left:820px;top:579px;width:45px;height:18px;background:linear-gradient(#f0f0f0,#e5e5e5);border:1px solid #acacac;box-sizing:border-box"></div><div class="a" style="left:864px;top:579px;width:33px;height:18px;background:linear-gradient(#f0f0f0,#e5e5e5);border:1px solid #acacac;box-sizing:border-box"></div><div class="t" style="left:723px;top:582px;line-height:11px;font-family:'Liberation Sans';font-size:11px;color:#000;">Active Scene: [1]</div><div class="t" style="left:830px;top:584px;line-height:11px;font-family:'Liberation Sans';font-size:11px;color:#000;">Alias</div><div class="t" style="left:875px;top:584px;line-height:11px;font-family:'Liberation Sans';font-size:11px;color:#000;">All</div><div class="t" style="left:723px;top:608px;line-height:11px;font-family:'Liberation Sans';font-size:11px;color:#8d8d8d;">Select</div><div class="t" style="left:765.5px;top:608px;line-height:11px;font-family:'Liberation Sans';font-size:11px;color:#8d8d8d;">Show/Hide</div><div class="t" style="left:829.4px;top:608px;line-height:11px;font-family:'Liberation Sans';font-size:11px;color:#8d8d8d;">Delete</div><div class="t" style="left:873px;top:608px;line-height:11px;font-family:'Liberation Sans';font-size:11px;color:#8d8d8d;">Delete All</div><div class="t" style="left:930.9px;top:608px;line-height:11px;font-family:'Liberation Sans';font-size:11px;color:#8d8d8d;">Rename</div><div class="a" style="left:716px;top:624px;width:317px;height:297px;background:#fff;border:1px solid #828790;box-sizing:border-box"></div><div class="a" style="left:717px;top:647px;width:315px;height:1px;background:#e3ecf7"></div><div class="a" style="left:797px;top:625px;width:1px;height:22px;background:#e3ecf7"></div><div class="a" style="left:896px;top:625px;width:1px;height:22px;background:#e3ecf7"></div><div class="a" style="left:996px;top:625px;width:1px;height:22px;background:#e3ecf7"></div><div class="t" style="left:720.7px;top:632px;line-height:11px;font-family:'Liberation Sans';font-size:11px;color:#000;">ID</div><div class="t" style="left:801px;top:632px;line-height:11px;font-family:'Liberation Sans';font-size:11px;color:#000;">Alias</div><div class="t" style="left:900.7px;top:632px;line-height:11px;font-family:'Liberation Sans';font-size:11px;color:#000;">AVO:[ID]</div><div class="t" style="left:1000.6px;top:632px;line-height:11px;font-family:'Liberation Sans';font-size:11px;color:#000;">ROI</div><div class="t" style="left:720.7px;top:652px;line-height:11px;font-family:'Liberation Sans';font-size:11px;color:#000;">RVO_2</div><div class="t" style="left:900.7px;top:652px;line-height:11px;font-family:'Liberation Sans';font-size:11px;color:#000;">Arrows:[2]</div><div class="t" style="left:1000.6px;top:652px;line-height:11px;font-family:'Liberation Sans';font-size:11px;color:#000;">Box</div><div class="a" style="left:717px;top:904px;width:315px;height:16px;background:#f0f0f0"></div><div class="a" style="left:734px;top:905px;width:134px;height:14px;background:#cdcdcd"></div><div class="t" style="left:723px;top:933px;line-height:11px;font-family:'Liberation Sans';font-size:11px;color:#8d8d8d;">Display Data</div><div class="a" style="left:711px;top:957px;width:330px;height:1px;background:#acacac"></div><div class="a" style="left:713px;top:957px;width:96px;height:18px;background:linear-gradient(#f0f0f0,#e5e5e5);border:1px solid #acacac;box-sizing:border-box"></div><div class="t" style="left:723px;top:962px;line-height:11px;font-family:'Liberation Sans';font-size:11px;color:#000;letter-spacing:-0.309px;">RVOs Data M...</div><div class="a" style="left:808px;top:955px;width:232px;height:23px;background:#fff;border:1px solid #acacac;border-top:none;box-sizing:border-box"></div><div class="t" style="left:821px;top:963px;line-height:11px;font-family:'Liberation Sans';font-size:11px;color:#000;letter-spacing:-0.393px;">RVOs Manager: TEST_LuaScalar9_TEST_...</div><div class="a" style="left:934px;top:981px;width:1px;height:20px;background:#d0d0d0"></div><div class="a" style="left:1021px;top:981px;width:1px;height:20px;background:#d0d0d0"></div><div class="t" style="left:938.5px;top:987px;line-height:11px;font-family:'Liberation Sans';font-size:11px;color:#000;letter-spacing:-0.192px;">Press F1 for help</div><div class="a" style="left:1035px;top:993px;width:2px;height:2px;background:#b0b0b0"></div><div class="a" style="left:1032px;top:996px;width:2px;height:2px;background:#b0b0b0"></div><div class="a" style="left:1035px;top:996px;width:2px;height:2px;background:#b0b0b0"></div><div class="a" style="left:1029px;top:999px;width:2px;height:2px;background:#b0b0b0"></div><div class="a" style="left:1032px;top:999px;width:2px;height:2px;background:#b0b0b0"></div><div class="a" style="left:1035px;top:999px;width:2px;height:2px;background:#b0b0b0"></div><div class="a" style="left:7px;top:1003px;width:1034px;height:1px;background:#d9d9d9"></div><svg class="a" style="left:278px;top:102px" width="506" height="375" viewBox="278 102 506 375"><path d="M281 134 L444 105" stroke="#c8c8c8" stroke-width="1.3"/><path d="M444 105 L583 126" stroke="#c8c8c8" stroke-width="1.3"/><path d="M281 134 L417 176" stroke="#d0d0d0" stroke-width="1.3"/><path d="M417 176 L583 126" stroke="#d0d0d0" stroke-width="1.3"/><path d="M281 134 L327 315" stroke="#c0c0c0" stroke-width="1.3"/><path d="M417 176 L446 395" stroke="#d0d0d0" stroke-width="1.3"/><path d="M583 126 L574 301" stroke="#b0b0b0" stroke-width="1.3"/><path d="M327 315 L446 395" stroke="#c0c0c0" stroke-width="1.3"/><path d="M446 395 L574 301" stroke="#b0b0b0" stroke-width="1.3"/><path d="M444 105 L456 329" stroke="#808080" stroke-width="1.3"/><path d="M372 201 L543 266" stroke="#707070" stroke-width="1.3"/><path d="M330 276 L560 225" stroke="#707070" stroke-width="1.3"/><path d="M518.0 196.4 L522.2 194.0 L530.0 195.2 L530.0 203.6 L525.8 206.0 L518.0 204.8Z" fill="#f2f2f2"/><path d="M525.8 197.6 L530.0 195.2 L530.0 203.6 L525.8 206.0Z" fill="#dcdcdc"/><path d="M568.0 297.4 L572.2 295.0 L580.0 296.2 L580.0 304.6 L575.8 307.0 L568.0 305.8Z" fill="#f2f2f2"/><path d="M575.8 298.6 L580.0 296.2 L580.0 304.6 L575.8 307.0Z" fill="#dcdcdc"/><path d="M396 102 L560 240" stroke="#7a1010" stroke-width="1"/><path d="M332 102 L470 225" stroke="#e03030" stroke-width="1.5"/><path d="M500.4 306.3 L481.5 303.6" stroke="#ff3a3a" stroke-width="1"/><path d="M521.3 259.8 L522.5 241.6" stroke="#c02424" stroke-width="1"/><path d="M520.1 302.2 L505.4 296.3" stroke="#f03333" stroke-width="1"/><path d="M559.5 312.2 L555.5 291.0" stroke="#ff3a3a" stroke-width="1"/><path d="M571.9 259.4 L585.9 247.8" stroke="#ff3a3a" stroke-width="1"/><path d="M463.5 259.6 L454.9 237.5" stroke="#ff3a3a" stroke-width="1"/><path d="M482.3 270.7 L474.3 257.0" stroke="#c02424" stroke-width="1"/><path d="M551.8 310.7 L532.8 300.8" stroke="#f03333" stroke-width="1"/><path d="M559.3 315.1 L571.7 312.6" stroke="#ff3a3a" stroke-width="1"/><path d="M490.7 273.7 L484.9 264.5" stroke="#f03333" stroke-width="1"/><path d="M450.7 282.3 L434.4 269.2" stroke="#ff4444" stroke-width="1"/><path d="M460.4 252.8 L456.1 239.3" stroke="#a82020" stroke-width="1"/><path d="M544.9 339.6 L539.1 349.1" stroke="#e03030" stroke-width="1"/><path d="M432.5 269.6 L419.7 254.0" stroke="#e03030" stroke-width="1"/><path d="M493.5 267.8 L487.1 251.8" stroke="#f03333" stroke-width="1"/><path d="M511.0 250.1 L512.7 233.3" stroke="#ff3a3a" stroke-width="1"/><path d="M534.3 276.9 L532.6 259.2" stroke="#a82020" stroke-width="1"/><path d="M542.1 249.8 L551.6 232.5" stroke="#c02424" stroke-width="1"/><path d="M434.1 280.5 L425.3 274.0" stroke="#ff3a3a" stroke-width="1"/><path d="M563.2 262.1 L575.8 247.6" stroke="#ff3a3a" stroke-width="1"/><path d="M503.0 237.0 L507.0 219.3" stroke="#f83030" stroke-width="1"/><path d="M528.7 241.9 L534.7 227.7" stroke="#f83030" stroke-width="1"/><path d="M472.0 281.4 L461.7 271.9" stroke="#f83030" stroke-width="1"/><path d="M517.3 326.5 L495.8 332.3" stroke="#ff3a3a" stroke-width="1"/><path d="M541.9 320.7 L528.7 324.9" stroke="#f03333" stroke-width="1"/><path d="M541.6 210.9 L551.3 200.9" stroke="#ff4444" stroke-width="1"/><path d="M578.8 274.0 L591.0 264.8" stroke="#f03333" stroke-width="1"/><path d="M535.3 306.3 L522.8 301.9" stroke="#f03333" stroke-width="1"/><path d="M586.7 284.5 L597.6 278.3" stroke="#e03030" stroke-width="1"/><path d="M564.6 282.2 L572.5 269.3" stroke="#c02424" stroke-width="1"/><path d="M503.4 304.7 L481.9 300.2" stroke="#c02424" stroke-width="1"/><path d="M466.8 223.6 L468.9 207.3" stroke="#a82020" stroke-width="1"/><path d="M521.7 206.8 L534.0 189.6" stroke="#ff4444" stroke-width="1"/><path d="M470.7 308.1 L454.0 306.9" stroke="#ff4444" stroke-width="1"/><path d="M532.9 288.5 L526.8 277.1" stroke="#f03333" stroke-width="1"/><path d="M560.1 315.1 L568.3 323.1" stroke="#c02424" stroke-width="1"/><path d="M530.1 300.6 L517.3 292.7" stroke="#ff3a3a" stroke-width="1"/><path d="M548.0 297.2 L542.2 283.1" stroke="#f83030" stroke-width="1"/><path d="M513.7 324.4 L498.9 327.4" stroke="#ff3a3a" stroke-width="1"/><path d="M563.1 315.0 L539.4 314.9" stroke="#ff4444" stroke-width="1"/><path d="M486.8 281.9 L478.7 273.8" stroke="#e03030" stroke-width="1"/><path d="M504.2 225.9 L511.2 207.5" stroke="#c02424" stroke-width="1"/><path d="M590.1 290.7 L606.0 283.6" stroke="#f03333" stroke-width="1"/><path d="M477.3 210.0 L483.1 190.2" stroke="#e03030" stroke-width="1"/><path d="M585.8 269.6 L603.2 260.1" stroke="#e03030" stroke-width="1"/><path d="M429.7 271.3 L419.6 260.3" stroke="#f03333" stroke-width="1"/><path d="M436.5 265.8 L428.0 254.0" stroke="#f03333" stroke-width="1"/><path d="M451.3 235.6 L449.6 215.1" stroke="#f03333" stroke-width="1"/><path d="M533.5 212.0 L546.7 196.6" stroke="#f03333" stroke-width="1"/><path d="M534.5 328.8 L516.7 338.5" stroke="#ff3a3a" stroke-width="1"/><path d="M523.2 225.8 L529.4 214.7" stroke="#c02424" stroke-width="1"/><path d="M562.3 267.6 L576.8 249.6" stroke="#e03030" stroke-width="1"/><path d="M558.9 266.5 L565.9 255.4" stroke="#f03333" stroke-width="1"/><path d="M464.0 288.5 L449.8 279.8" stroke="#c02424" stroke-width="1"/><path d="M539.4 233.8 L550.7 218.3" stroke="#a82020" stroke-width="1"/><path d="M459.7 221.8 L460.7 210.2" stroke="#ff4444" stroke-width="1"/><path d="M522.5 211.6 L532.0 197.8" stroke="#f03333" stroke-width="1"/><path d="M577.2 317.5 L597.1 320.4" stroke="#ff4444" stroke-width="1"/><path d="M504.1 247.1 L504.7 235.4" stroke="#f03333" stroke-width="1"/><path d="M461.1 252.3 L455.8 233.9" stroke="#c02424" stroke-width="1"/><path d="M546.1 208.9 L560.2 195.9" stroke="#e03030" stroke-width="1"/><path d="M548.6 325.3 L541.0 332.3" stroke="#a82020" stroke-width="1"/><path d="M575.7 268.2 L589.2 257.4" stroke="#f03333" stroke-width="1"/><path d="M527.4 247.4 L531.5 234.5" stroke="#e03030" stroke-width="1"/><path d="M436.5 279.2 L425.2 270.1" stroke="#c02424" stroke-width="1"/><path d="M488.2 294.6 L468.1 284.0" stroke="#e03030" stroke-width="1"/><path d="M562.4 241.2 L578.7 227.3" stroke="#c02424" stroke-width="1"/><path d="M449.8 279.8 L436.7 268.4" stroke="#ff3a3a" stroke-width="1"/><path d="M559.7 228.7 L574.2 217.1" stroke="#a82020" stroke-width="1"/><path d="M520.1 249.5 L523.5 233.2" stroke="#f83030" stroke-width="1"/><path d="M529.9 295.2 L516.5 281.1" stroke="#c02424" stroke-width="1"/><path d="M438.3 255.3 L433.2 245.0" stroke="#c02424" stroke-width="1"/><path d="M547.0 292.6 L544.0 282.4" stroke="#ff3a3a" stroke-width="1"/><path d="M448.6 278.3 L433.6 264.1" stroke="#ff3a3a" stroke-width="1"/><path d="M451.4 279.0 L436.9 265.6" stroke="#ff4444" stroke-width="1"/><path d="M434.8 276.7 L422.2 265.2" stroke="#f03333" stroke-width="1"/><path d="M482.0 210.7 L489.2 188.7" stroke="#e03030" stroke-width="1"/><path d="M580.2 242.8 L591.3 236.4" stroke="#ff4444" stroke-width="1"/><path d="M534.0 301.4 L520.5 292.4" stroke="#ff3a3a" stroke-width="1"/><path d="M482.3 233.7 L483.4 220.7" stroke="#e03030" stroke-width="1"/><path d="M525.5 204.0 L532.7 194.3" stroke="#f83030" stroke-width="1"/><path d="M477.2 242.1 L476.4 228.6" stroke="#f03333" stroke-width="1"/><path d="M548.5 276.0 L554.7 253.5" stroke="#ff4444" stroke-width="1"/><path d="M535.2 260.7 L539.9 242.0" stroke="#f03333" stroke-width="1"/><path d="M545.3 320.8 L529.3 327.2" stroke="#e03030" stroke-width="1"/><path d="M467.1 301.0 L456.0 298.5" stroke="#e03030" stroke-width="1"/><path d="M571.7 288.0 L582.7 276.1" stroke="#ff3a3a" stroke-width="1"/><path d="M571.1 325.5 L580.7 334.5" stroke="#ff3a3a" stroke-width="1"/><path d="M552.7 304.6 L542.4 284.4" stroke="#f03333" stroke-width="1"/><path d="M510.7 307.0 L494.9 304.5" stroke="#f83030" stroke-width="1"/><path d="M527.5 242.5 L531.8 231.2" stroke="#c02424" stroke-width="1"/><path d="M444.7 250.7 L440.7 240.2" stroke="#ff3a3a" stroke-width="1"/><path d="M520.0 250.2 L525.1 228.2" stroke="#e03030" stroke-width="1"/><path d="M570.0 256.4 L586.3 242.8" stroke="#ff3a3a" stroke-width="1"/><path d="M478.9 256.6 L475.1 243.5" stroke="#ff3a3a" stroke-width="1"/><path d="M465.7 293.0 L449.7 285.4" stroke="#e03030" stroke-width="1"/><path d="M499.1 270.7 L491.5 252.3" stroke="#ff3a3a" stroke-width="1"/><path d="M552.9 272.5 L557.2 260.7" stroke="#e03030" stroke-width="1"/><path d="M466.0 237.6 L465.1 224.8" stroke="#ff4444" stroke-width="1"/><path d="M476.0 280.2 L465.6 269.6" stroke="#ff3a3a" stroke-width="1"/><path d="M527.9 279.4 L524.6 269.6" stroke="#c02424" stroke-width="1"/><path d="M476.2 270.0 L467.6 255.8" stroke="#ff4444" stroke-width="1"/><path d="M568.5 320.4 L582.0 329.0" stroke="#ff4444" stroke-width="1"/><path d="M434.0 261.2 L422.3 240.7" stroke="#e03030" stroke-width="1"/><path d="M475.5 206.1 L479.6 191.9" stroke="#a82020" stroke-width="1"/><path d="M562.6 232.0 L571.9 224.4" stroke="#e03030" stroke-width="1"/><path d="M587.3 270.0 L596.2 264.9" stroke="#f83030" stroke-width="1"/><path d="M506.7 239.2 L509.1 227.2" stroke="#ff3a3a" stroke-width="1"/><path d="M482.2 238.5 L482.9 221.5" stroke="#e03030" stroke-width="1"/><path d="M451.0 240.4 L449.0 230.0" stroke="#f03333" stroke-width="1"/><path d="M546.0 321.1 L533.5 326.6" stroke="#e03030" stroke-width="1"/><path d="M571.3 269.5 L580.8 260.0" stroke="#e03030" stroke-width="1"/><path d="M521.9 311.7 L507.3 310.5" stroke="#ff3a3a" stroke-width="1"/><path d="M451.7 288.1 L440.6 281.8" stroke="#c02424" stroke-width="1"/><path d="M514.3 259.1 L514.5 237.6" stroke="#f03333" stroke-width="1"/><path d="M497.9 288.8 L489.8 282.4" stroke="#e03030" stroke-width="1"/><path d="M494.6 266.3 L487.5 244.1" stroke="#a82020" stroke-width="1"/><path d="M507.5 215.9 L516.6 198.0" stroke="#c02424" stroke-width="1"/><path d="M478.5 307.6 L454.8 305.5" stroke="#f03333" stroke-width="1"/><path d="M559.3 329.8 L558.5 349.8" stroke="#c02424" stroke-width="1"/><path d="M457.6 233.0 L457.2 211.6" stroke="#f03333" stroke-width="1"/><path d="M570.1 242.0 L584.6 231.5" stroke="#a82020" stroke-width="1"/><path d="M533.4 211.0 L545.2 197.1" stroke="#f83030" stroke-width="1"/><path d="M479.1 218.6 L482.2 205.7" stroke="#ff3a3a" stroke-width="1"/><path d="M572.5 298.6 L590.3 283.3" stroke="#ff4444" stroke-width="1"/><path d="M540.2 228.8 L552.0 214.2" stroke="#f83030" stroke-width="1"/><path d="M469.8 272.3 L461.6 261.3" stroke="#ff4444" stroke-width="1"/><path d="M529.3 213.3 L539.8 199.8" stroke="#c02424" stroke-width="1"/><path d="M560.2 314.7 L571.1 297.4" stroke="#ff4444" stroke-width="1"/><path d="M513.5 300.9 L500.8 295.8" stroke="#f83030" stroke-width="1"/><path d="M510.5 243.2 L514.5 224.6" stroke="#ff4444" stroke-width="1"/><path d="M459.5 282.1 L446.6 271.5" stroke="#f83030" stroke-width="1"/><path d="M510.5 297.0 L494.1 287.7" stroke="#f03333" stroke-width="1"/><path d="M541.9 295.2 L535.1 283.5" stroke="#f83030" stroke-width="1"/><path d="M484.7 219.9 L487.7 208.5" stroke="#ff4444" stroke-width="1"/><path d="M553.3 298.6 L550.2 279.4" stroke="#f83030" stroke-width="1"/><path d="M527.8 330.6 L509.9 339.3" stroke="#e03030" stroke-width="1"/><path d="M454.5 290.9 L444.0 285.8" stroke="#c02424" stroke-width="1"/><path d="M540.8 348.0 L529.1 368.0" stroke="#ff3a3a" stroke-width="1"/><path d="M508.8 300.8 L492.8 294.7" stroke="#ff4444" stroke-width="1"/><path d="M561.3 281.0 L572.7 261.2" stroke="#f03333" stroke-width="1"/><path d="M536.7 293.4 L526.2 275.8" stroke="#e03030" stroke-width="1"/><path d="M540.1 274.7 L542.0 253.3" stroke="#c02424" stroke-width="1"/><path d="M509.0 305.0 L494.2 301.9" stroke="#ff4444" stroke-width="1"/><path d="M557.1 245.1 L563.9 237.3" stroke="#ff3a3a" stroke-width="1"/><path d="M575.3 258.9 L587.8 249.4" stroke="#f83030" stroke-width="1"/><path d="M547.0 314.4 L532.6 313.7" stroke="#a82020" stroke-width="1"/><path d="M489.9 317.6 L475.2 318.1" stroke="#ff4444" stroke-width="1"/><path d="M568.2 326.2 L580.0 342.3" stroke="#f83030" stroke-width="1"/><path d="M501.3 324.7 L486.0 327.2" stroke="#a82020" stroke-width="1"/><path d="M466.7 255.4 L461.7 240.2" stroke="#e03030" stroke-width="1"/><path d="M537.0 245.5 L541.6 235.8" stroke="#f83030" stroke-width="1"/><path d="M515.3 318.8 L498.2 320.3" stroke="#f03333" stroke-width="1"/><path d="M518.7 209.1 L527.4 195.7" stroke="#ff3a3a" stroke-width="1"/><path d="M532.3 222.1 L546.4 204.2" stroke="#c02424" stroke-width="1"/><path d="M440.4 258.6 L435.3 249.3" stroke="#f83030" stroke-width="1"/><path d="M562.2 330.5 L564.5 347.1" stroke="#c02424" stroke-width="1"/><path d="M556.4 316.1 L542.2 320.5" stroke="#e03030" stroke-width="1"/><path d="M477.9 238.2 L477.8 224.8" stroke="#ff4444" stroke-width="1"/><path d="M460.0 262.1 L454.3 251.2" stroke="#f03333" stroke-width="1"/><path d="M562.6 309.1 L572.1 290.0" stroke="#c02424" stroke-width="1"/><path d="M530.5 348.3 L514.6 366.2" stroke="#ff4444" stroke-width="1"/><path d="M516.7 311.7 L499.0 310.3" stroke="#e03030" stroke-width="1"/><path d="M518.4 318.2 L500.5 319.5" stroke="#ff3a3a" stroke-width="1"/><path d="M508.2 228.8 L513.7 213.9" stroke="#c02424" stroke-width="1"/><path d="M527.5 317.8 L507.1 319.5" stroke="#ff4444" stroke-width="1"/><path d="M558.8 315.6 L542.4 324.7" stroke="#a82020" stroke-width="1"/><path d="M525.1 263.4 L526.7 240.9" stroke="#ff4444" stroke-width="1"/><path d="M469.5 309.7 L446.2 308.3" stroke="#a82020" stroke-width="1"/><path d="M541.6 205.4 L549.8 196.9" stroke="#ff4444" stroke-width="1"/><path d="M487.3 206.6 L493.1 191.0" stroke="#c02424" stroke-width="1"/><path d="M490.9 283.5 L475.3 266.6" stroke="#a82020" stroke-width="1"/><path d="M453.7 271.1 L443.7 258.2" stroke="#a82020" stroke-width="1"/><path d="M540.5 301.0 L528.0 289.1" stroke="#f83030" stroke-width="1"/><path d="M567.2 320.5 L583.0 332.5" stroke="#a82020" stroke-width="1"/><path d="M513.3 226.6 L520.7 210.5" stroke="#ff3a3a" stroke-width="1"/><path d="M541.6 282.6 L540.1 264.7" stroke="#ff3a3a" stroke-width="1"/><path d="M480.7 244.7 L479.7 233.0" stroke="#e03030" stroke-width="1"/><path d="M456.5 272.3 L443.8 256.0" stroke="#ff3a3a" stroke-width="1"/><path d="M564.6 307.0 L574.6 291.8" stroke="#ff4444" stroke-width="1"/><path d="M569.6 282.7 L585.9 265.1" stroke="#e03030" stroke-width="1"/><path d="M573.1 264.4 L590.5 250.4" stroke="#ff4444" stroke-width="1"/><path d="M447.8 269.5 L441.2 261.3" stroke="#ff4444" stroke-width="1"/><path d="M495.9 236.4 L497.3 226.2" stroke="#ff4444" stroke-width="1"/><path d="M560.6 235.6 L568.8 228.1" stroke="#f03333" stroke-width="1"/><path d="M467.2 212.4 L469.9 199.5" stroke="#ff3a3a" stroke-width="1"/><path d="M483.8 215.8 L488.1 201.4" stroke="#ff4444" stroke-width="1"/><path d="M539.0 341.6 L526.3 357.5" stroke="#c02424" stroke-width="1"/><path d="M564.7 304.1 L570.7 292.8" stroke="#a82020" stroke-width="1"/><path d="M526.7 245.1 L531.0 232.7" stroke="#a82020" stroke-width="1"/><path d="M531.7 265.2 L533.8 246.6" stroke="#c02424" stroke-width="1"/><path d="M530.7 313.1 L514.9 312.1" stroke="#f83030" stroke-width="1"/><path d="M568.8 303.8 L585.1 287.7" stroke="#ff3a3a" stroke-width="1"/><path d="M532.2 352.9 L525.1 362.5" stroke="#ff3a3a" stroke-width="1"/><path d="M500.4 247.8 L501.0 231.5" stroke="#f83030" stroke-width="1"/><path d="M560.5 234.6 L579.1 219.6" stroke="#f03333" stroke-width="1"/><path d="M498.8 308.7 L475.8 306.4" stroke="#f83030" stroke-width="1"/><path d="M467.0 289.4 L449.8 278.9" stroke="#a82020" stroke-width="1"/><path d="M478.1 310.8 L465.8 310.2" stroke="#ff3a3a" stroke-width="1"/><path d="M534.6 292.0 L526.1 278.6" stroke="#ff3a3a" stroke-width="1"/><path d="M440.8 254.4 L434.6 240.4" stroke="#a82020" stroke-width="1"/><path d="M541.3 213.5 L552.5 202.0" stroke="#ff3a3a" stroke-width="1"/><path d="M499.0 247.4 L499.6 229.8" stroke="#ff4444" stroke-width="1"/><path d="M535.1 321.6 L513.3 327.4" stroke="#ff3a3a" stroke-width="1"/><path d="M481.3 252.5 L478.1 234.0" stroke="#ff4444" stroke-width="1"/><path d="M527.3 283.8 L522.6 274.0" stroke="#ff3a3a" stroke-width="1"/><path d="M549.0 252.1 L556.2 240.3" stroke="#c02424" stroke-width="1"/><path d="M578.2 299.3 L594.9 288.9" stroke="#e03030" stroke-width="1"/><path d="M446.1 242.3 L441.9 219.4" stroke="#ff3a3a" stroke-width="1"/><path d="M551.8 288.0 L552.8 271.4" stroke="#ff4444" stroke-width="1"/><path d="M560.2 265.8 L567.7 254.6" stroke="#ff4444" stroke-width="1"/><path d="M521.9 254.6 L524.5 237.8" stroke="#ff3a3a" stroke-width="1"/><path d="M530.5 215.4 L544.0 198.6" stroke="#a82020" stroke-width="1"/><path d="M541.3 310.9 L519.8 306.1" stroke="#ff4444" stroke-width="1"/><path d="M547.3 299.8 L537.5 281.7" stroke="#f03333" stroke-width="1"/><path d="M448.6 285.9 L438.2 279.4" stroke="#ff4444" stroke-width="1"/><path d="M571.5 224.6 L583.3 217.6" stroke="#ff3a3a" stroke-width="1"/><path d="M531.5 325.9 L509.2 334.3" stroke="#ff4444" stroke-width="1"/><path d="M529.5 305.1 L514.0 299.7" stroke="#f83030" stroke-width="1"/><path d="M521.7 334.1 L503.1 343.4" stroke="#a82020" stroke-width="1"/><path d="M566.2 325.3 L573.5 337.3" stroke="#c02424" stroke-width="1"/><path d="M509.2 317.8 L495.6 318.6" stroke="#ff4444" stroke-width="1"/><path d="M514.3 317.4 L502.2 318.1" stroke="#c02424" stroke-width="1"/><path d="M521.9 298.4 L510.4 291.4" stroke="#f03333" stroke-width="1"/><path d="M472.1 279.8 L457.4 264.4" stroke="#f83030" stroke-width="1"/><path d="M495.6 282.7 L488.7 275.4" stroke="#a82020" stroke-width="1"/><path d="M521.2 329.9 L507.0 335.3" stroke="#e03030" stroke-width="1"/><path d="M516.9 298.1 L501.0 288.8" stroke="#a82020" stroke-width="1"/><path d="M437.6 241.9 L433.9 227.2" stroke="#a82020" stroke-width="1"/><path d="M544.5 329.9 L529.4 344.3" stroke="#f83030" stroke-width="1"/><path d="M536.8 273.6 L537.3 255.2" stroke="#c02424" stroke-width="1"/><path d="M503.6 292.4 L491.5 283.9" stroke="#ff3a3a" stroke-width="1"/><path d="M528.2 316.4 L509.8 317.3" stroke="#f83030" stroke-width="1"/><path d="M572.7 242.4 L590.7 230.7" stroke="#ff4444" stroke-width="1"/><path d="M493.8 249.5 L493.0 235.2" stroke="#f03333" stroke-width="1"/><path d="M567.8 292.4 L577.5 278.8" stroke="#ff4444" stroke-width="1"/><path d="M557.7 311.9 L547.0 297.8" stroke="#f83030" stroke-width="1"/><path d="M443.2 266.8 L434.2 254.1" stroke="#e03030" stroke-width="1"/><path d="M474.7 301.4 L460.7 298.2" stroke="#ff3a3a" stroke-width="1"/><path d="M481.2 318.1 L459.1 319.0" stroke="#a82020" stroke-width="1"/><path d="M490.4 305.4 L470.4 302.5" stroke="#f03333" stroke-width="1"/><path d="M561.9 260.6 L569.5 251.0" stroke="#ff3a3a" stroke-width="1"/><path d="M530.6 235.6 L541.8 216.2" stroke="#ff4444" stroke-width="1"/><path d="M514.3 251.0 L515.3 240.3" stroke="#f03333" stroke-width="1"/><path d="M456.5 219.9 L457.5 208.7" stroke="#c02424" stroke-width="1"/><path d="M574.8 248.1 L584.9 240.9" stroke="#e03030" stroke-width="1"/><path d="M503.4 332.8 L481.5 339.7" stroke="#ff3a3a" stroke-width="1"/><path d="M528.1 209.4 L536.7 198.1" stroke="#a82020" stroke-width="1"/><path d="M586.9 250.8 L602.0 243.5" stroke="#ff3a3a" stroke-width="1"/><path d="M455.7 239.4 L454.1 228.3" stroke="#f83030" stroke-width="1"/><path d="M452.0 229.6 L451.6 217.3" stroke="#a82020" stroke-width="1"/><path d="M549.2 230.4 L562.1 216.9" stroke="#f03333" stroke-width="1"/><path d="M526.9 250.0 L530.3 237.4" stroke="#ff4444" stroke-width="1"/><path d="M541.4 269.2 L544.1 254.4" stroke="#f03333" stroke-width="1"/><path d="M525.0 272.3 L522.5 254.6" stroke="#a82020" stroke-width="1"/><path d="M475.5 222.1 L478.1 207.8" stroke="#ff4444" stroke-width="1"/><path d="M458.3 246.9 L454.3 228.6" stroke="#e03030" stroke-width="1"/><path d="M481.3 244.4 L480.4 230.9" stroke="#ff4444" stroke-width="1"/><path d="M477.9 235.8 L478.6 219.7" stroke="#ff3a3a" stroke-width="1"/><path d="M592.8 280.8 L608.0 274.2" stroke="#ff4444" stroke-width="1"/><path d="M514.1 209.1 L522.5 195.0" stroke="#f03333" stroke-width="1"/><path d="M529.1 231.7 L534.3 222.1" stroke="#e03030" stroke-width="1"/><path d="M489.9 290.2 L476.5 281.1" stroke="#c02424" stroke-width="1"/><path d="M501.3 266.6 L497.6 255.3" stroke="#f83030" stroke-width="1"/><path d="M570.3 312.7 L592.3 307.8" stroke="#f83030" stroke-width="1"/><path d="M540.3 274.4 L542.5 252.5" stroke="#c02424" stroke-width="1"/><path d="M499.5 206.9 L504.8 195.4" stroke="#ff4444" stroke-width="1"/><path d="M526.7 216.6 L538.7 200.4" stroke="#f03333" stroke-width="1"/><path d="M557.8 302.6 L557.8 282.0" stroke="#f03333" stroke-width="1"/><path d="M556.6 249.0 L565.2 238.6" stroke="#ff4444" stroke-width="1"/><path d="M526.8 317.3 L509.7 318.4" stroke="#e03030" stroke-width="1"/><path d="M487.3 304.1 L471.9 301.4" stroke="#f83030" stroke-width="1"/><path d="M571.5 254.8 L589.3 241.1" stroke="#f03333" stroke-width="1"/><path d="M519.9 242.2 L526.5 222.5" stroke="#ff3a3a" stroke-width="1"/><path d="M476.1 246.5 L474.0 224.4" stroke="#c02424" stroke-width="1"/><path d="M442.1 273.0 L427.3 255.9" stroke="#e03030" stroke-width="1"/><path d="M576.2 277.1 L588.0 267.1" stroke="#a82020" stroke-width="1"/><path d="M477.3 313.4 L462.1 313.1" stroke="#f03333" stroke-width="1"/><path d="M480.7 292.3 L463.0 282.2" stroke="#ff3a3a" stroke-width="1"/><path d="M562.6 223.3 L581.2 210.6" stroke="#f83030" stroke-width="1"/><path d="M527.4 280.6 L523.3 269.2" stroke="#c02424" stroke-width="1"/><path d="M470.5 243.9 L468.7 228.9" stroke="#ff3a3a" stroke-width="1"/><path d="M543.6 308.1 L526.0 300.6" stroke="#ff3a3a" stroke-width="1"/><path d="M569.6 300.9 L579.1 290.2" stroke="#c02424" stroke-width="1"/><path d="M489.4 307.9 L471.4 306.1" stroke="#c02424" stroke-width="1"/><path d="M552.0 314.4 L530.5 312.9" stroke="#f03333" stroke-width="1"/><path d="M565.3 332.6 L569.1 345.4" stroke="#f03333" stroke-width="1"/><path d="M491.6 285.7 L482.5 277.7" stroke="#f83030" stroke-width="1"/><path d="M519.5 229.8 L525.2 217.4" stroke="#ff3a3a" stroke-width="1"/><path d="M578.7 305.5 L599.2 296.1" stroke="#c02424" stroke-width="1"/><path d="M474.4 240.6 L474.0 217.5" stroke="#f83030" stroke-width="1"/><path d="M476.4 280.6 L469.2 273.6" stroke="#ff3a3a" stroke-width="1"/><path d="M457.4 269.9 L449.5 259.2" stroke="#ff3a3a" stroke-width="1"/><path d="M533.8 268.6 L535.3 250.1" stroke="#f83030" stroke-width="1"/><path d="M540.4 269.6 L542.2 256.9" stroke="#c02424" stroke-width="1"/><path d="M465.6 230.2 L466.2 214.4" stroke="#c02424" stroke-width="1"/><path d="M536.6 317.2 L522.4 318.5" stroke="#ff3a3a" stroke-width="1"/><path d="M580.7 277.3 L594.4 267.7" stroke="#c02424" stroke-width="1"/><path d="M585.4 283.0 L603.3 273.1" stroke="#ff4444" stroke-width="1"/><path d="M569.0 310.8 L580.2 305.4" stroke="#ff3a3a" stroke-width="1"/><path d="M565.9 325.2 L577.5 345.0" stroke="#a82020" stroke-width="1"/><path d="M513.3 298.4 L496.6 289.5" stroke="#f83030" stroke-width="1"/><path d="M468.7 275.3 L456.8 260.5" stroke="#f03333" stroke-width="1"/><path d="M562.3 310.2 L567.6 299.0" stroke="#f03333" stroke-width="1"/><path d="M530.5 249.5 L534.2 237.9" stroke="#e03030" stroke-width="1"/><path d="M534.8 323.1 L517.3 328.7" stroke="#ff4444" stroke-width="1"/><path d="M564.0 245.2 L578.8 232.2" stroke="#f83030" stroke-width="1"/><path d="M541.9 230.5 L552.3 217.5" stroke="#c02424" stroke-width="1"/><path d="M482.2 209.8 L487.1 194.4" stroke="#f83030" stroke-width="1"/><path d="M521.1 232.2 L528.9 215.7" stroke="#c02424" stroke-width="1"/><path d="M537.8 263.5 L539.7 253.3" stroke="#ff3a3a" stroke-width="1"/><path d="M486.3 261.0 L480.2 238.1" stroke="#f83030" stroke-width="1"/><path d="M530.0 285.4 L522.3 267.3" stroke="#f83030" stroke-width="1"/><path d="M533.4 285.6 L529.2 275.8" stroke="#a82020" stroke-width="1"/><path d="M467.3 256.5 L460.7 236.1" stroke="#a82020" stroke-width="1"/><path d="M443.8 268.3 L430.8 250.2" stroke="#a82020" stroke-width="1"/><path d="M580.4 237.9 L590.5 232.3" stroke="#f03333" stroke-width="1"/><path d="M520.2 295.8 L501.9 281.3" stroke="#a82020" stroke-width="1"/><path d="M510.8 258.9 L510.2 238.4" stroke="#f83030" stroke-width="1"/><path d="M506.8 303.1 L495.8 300.1" stroke="#a82020" stroke-width="1"/><path d="M481.4 246.0 L480.2 231.4" stroke="#e03030" stroke-width="1"/><path d="M553.6 286.6 L555.5 272.8" stroke="#f83030" stroke-width="1"/><path d="M512.0 204.2 L522.8 186.5" stroke="#c02424" stroke-width="1"/><path d="M433.1 278.8 L418.8 266.8" stroke="#ff3a3a" stroke-width="1"/><path d="M514.7 268.0 L511.6 251.1" stroke="#ff3a3a" stroke-width="1"/><path d="M474.0 273.5 L461.4 255.3" stroke="#ff3a3a" stroke-width="1"/><path d="M469.9 261.6 L463.4 246.8" stroke="#c02424" stroke-width="1"/><path d="M537.5 340.1 L521.7 357.7" stroke="#ff3a3a" stroke-width="1"/><path d="M499.8 299.8 L481.4 292.9" stroke="#a82020" stroke-width="1"/><path d="M538.6 327.6 L525.8 335.1" stroke="#a82020" stroke-width="1"/><path d="M445.9 273.7 L437.5 264.9" stroke="#a82020" stroke-width="1"/><path d="M530.1 340.6 L517.2 351.6" stroke="#ff3a3a" stroke-width="1"/><path d="M577.2 252.8 L591.2 243.5" stroke="#f83030" stroke-width="1"/><path d="M485.8 270.9 L478.6 258.2" stroke="#ff3a3a" stroke-width="1"/><path d="M471.7 307.5 L449.4 305.6" stroke="#ff3a3a" stroke-width="1"/><path d="M481.2 309.8 L465.2 308.8" stroke="#c02424" stroke-width="1"/><path d="M460.8 281.1 L444.2 266.1" stroke="#f03333" stroke-width="1"/><path d="M538.9 272.4 L540.6 254.2" stroke="#f83030" stroke-width="1"/><path d="M509.3 215.1 L516.1 201.8" stroke="#e03030" stroke-width="1"/><path d="M432.0 270.3 L421.3 258.0" stroke="#c02424" stroke-width="1"/><path d="M507.7 248.1 L509.3 232.0" stroke="#a82020" stroke-width="1"/><path d="M512.5 316.3 L497.8 316.6" stroke="#f83030" stroke-width="1"/><path d="M540.8 254.1 L545.6 242.4" stroke="#e03030" stroke-width="1"/><path d="M509.6 207.4 L518.8 191.1" stroke="#f83030" stroke-width="1"/><path d="M538.7 311.6 L524.3 309.3" stroke="#c02424" stroke-width="1"/><path d="M492.2 310.0 L468.8 308.2" stroke="#e03030" stroke-width="1"/><path d="M581.4 268.1 L590.8 261.6" stroke="#f83030" stroke-width="1"/><path d="M558.3 312.9 L543.4 294.3" stroke="#a82020" stroke-width="1"/><path d="M498.7 319.1 L484.9 320.0" stroke="#ff3a3a" stroke-width="1"/><path d="M492.4 260.3 L489.1 247.8" stroke="#ff4444" stroke-width="1"/><path d="M504.5 284.2 L490.8 267.1" stroke="#ff4444" stroke-width="1"/><path d="M487.2 228.1 L491.0 209.7" stroke="#ff4444" stroke-width="1"/><path d="M553.4 288.8 L556.0 268.6" stroke="#ff3a3a" stroke-width="1"/><path d="M503.0 203.3 L510.4 189.0" stroke="#c02424" stroke-width="1"/><path d="M451.3 248.9 L445.7 227.8" stroke="#f83030" stroke-width="1"/><path d="M493.2 207.0 L501.3 187.8" stroke="#f83030" stroke-width="1"/><path d="M475.0 260.8 L470.3 249.2" stroke="#ff3a3a" stroke-width="1"/><path d="M467.9 292.6 L451.0 284.3" stroke="#ff3a3a" stroke-width="1"/><path d="M542.4 256.5 L548.4 242.1" stroke="#f83030" stroke-width="1"/><path d="M480.6 251.9 L477.8 236.2" stroke="#ff4444" stroke-width="1"/><path d="M586.3 288.8 L601.6 280.7" stroke="#f83030" stroke-width="1"/><path d="M542.6 267.7 L547.5 249.1" stroke="#a82020" stroke-width="1"/><path d="M584.1 285.3 L603.9 274.2" stroke="#ff3a3a" stroke-width="1"/><path d="M570.7 294.2 L578.5 284.8" stroke="#a82020" stroke-width="1"/><path d="M546.4 270.3 L550.2 255.9" stroke="#a82020" stroke-width="1"/><path d="M454.4 255.4 L447.3 236.6" stroke="#c02424" stroke-width="1"/><path d="M584.0 286.7 L597.0 278.9" stroke="#e03030" stroke-width="1"/><path d="M531.6 339.7 L519.9 349.8" stroke="#a82020" stroke-width="1"/><path d="M574.0 251.5 L589.1 240.7" stroke="#f83030" stroke-width="1"/><path d="M553.7 296.6 L552.1 281.1" stroke="#ff3a3a" stroke-width="1"/><path d="M579.4 313.2 L598.1 311.5" stroke="#f83030" stroke-width="1"/><path d="M486.8 311.0 L473.7 310.3" stroke="#f83030" stroke-width="1"/><path d="M589.9 265.3 L611.3 255.8" stroke="#ff4444" stroke-width="1"/><path d="M523.6 307.0 L503.2 302.5" stroke="#a82020" stroke-width="1"/><path d="M520.2 248.1 L524.7 229.7" stroke="#f83030" stroke-width="1"/><path d="M539.9 213.3 L551.2 201.3" stroke="#e03030" stroke-width="1"/><path d="M511.4 216.5 L521.4 198.2" stroke="#ff4444" stroke-width="1"/><path d="M508.1 326.1 L494.8 329.0" stroke="#ff4444" stroke-width="1"/><path d="M482.7 232.0 L485.7 210.9" stroke="#a82020" stroke-width="1"/><path d="M505.8 316.7 L491.6 317.1" stroke="#ff4444" stroke-width="1"/><path d="M443.7 284.9 L434.2 278.9" stroke="#e03030" stroke-width="1"/><path d="M542.4 314.2 L527.0 313.5" stroke="#ff3a3a" stroke-width="1"/><path d="M544.8 212.4 L560.1 198.1" stroke="#f03333" stroke-width="1"/><path d="M462.5 272.1 L451.6 257.6" stroke="#f83030" stroke-width="1"/><path d="M590.4 285.2 L607.8 277.2" stroke="#e03030" stroke-width="1"/><path d="M459.0 244.3 L455.5 222.6" stroke="#f03333" stroke-width="1"/><path d="M517.2 232.8 L521.6 221.5" stroke="#ff4444" stroke-width="1"/><path d="M518.1 251.2 L522.3 229.1" stroke="#c02424" stroke-width="1"/><path d="M536.8 280.2 L534.6 257.7" stroke="#c02424" stroke-width="1"/><path d="M526.8 207.1 L534.5 196.9" stroke="#f83030" stroke-width="1"/><path d="M521.6 302.0 L501.8 293.2" stroke="#f83030" stroke-width="1"/><path d="M555.7 238.9 L565.2 229.0" stroke="#f03333" stroke-width="1"/><path d="M535.2 231.5 L545.2 216.8" stroke="#ff4444" stroke-width="1"/><path d="M481.3 286.5 L468.0 276.1" stroke="#ff4444" stroke-width="1"/><path d="M548.9 327.1 L535.2 342.0" stroke="#f03333" stroke-width="1"/><path d="M539.4 234.2 L549.8 219.6" stroke="#f83030" stroke-width="1"/><path d="M497.3 329.5 L481.7 333.1" stroke="#f83030" stroke-width="1"/><path d="M567.7 310.0 L583.6 299.6" stroke="#ff3a3a" stroke-width="1"/><path d="M530.9 284.9 L523.6 266.0" stroke="#e03030" stroke-width="1"/><path d="M519.4 258.6 L520.3 241.8" stroke="#a82020" stroke-width="1"/><path d="M524.0 273.9 L520.4 254.1" stroke="#f83030" stroke-width="1"/><path d="M533.3 298.8 L518.7 286.2" stroke="#e03030" stroke-width="1"/><path d="M452.5 289.5 L434.3 279.4" stroke="#f03333" stroke-width="1"/><path d="M503.1 323.3 L489.7 325.2" stroke="#ff3a3a" stroke-width="1"/><path d="M529.4 243.6 L538.2 223.9" stroke="#ff4444" stroke-width="1"/><path d="M544.1 245.8 L550.7 234.8" stroke="#ff4444" stroke-width="1"/><path d="M521.5 235.5 L527.1 222.1" stroke="#e03030" stroke-width="1"/><path d="M568.8 332.1 L574.0 342.1" stroke="#ff3a3a" stroke-width="1"/><path d="M489.6 294.5 L480.0 289.8" stroke="#a82020" stroke-width="1"/><path d="M566.1 250.5 L580.5 237.8" stroke="#a82020" stroke-width="1"/><path d="M448.6 279.7 L437.0 269.7" stroke="#f03333" stroke-width="1"/><path d="M458.8 233.6 L458.3 215.2" stroke="#f83030" stroke-width="1"/><path d="M528.3 289.8 L517.9 274.1" stroke="#f83030" stroke-width="1"/><path d="M512.2 254.7 L512.4 242.2" stroke="#ff3a3a" stroke-width="1"/><path d="M491.3 292.9 L471.7 280.8" stroke="#ff3a3a" stroke-width="1"/><path d="M522.9 220.6 L530.0 209.0" stroke="#e03030" stroke-width="1"/><path d="M518.8 292.9 L511.0 286.3" stroke="#c02424" stroke-width="1"/><path d="M456.2 218.6 L457.3 207.9" stroke="#c02424" stroke-width="1"/><path d="M434.9 271.4 L421.3 255.6" stroke="#ff4444" stroke-width="1"/><path d="M436.4 245.8 L431.6 230.3" stroke="#ff3a3a" stroke-width="1"/><path d="M479.8 226.9 L484.3 203.4" stroke="#f83030" stroke-width="1"/><path d="M567.2 273.9 L577.2 261.6" stroke="#ff3a3a" stroke-width="1"/><path d="M560.8 311.6 L566.2 289.7" stroke="#f83030" stroke-width="1"/><path d="M518.8 282.7 L509.6 265.5" stroke="#ff3a3a" stroke-width="1"/><path d="M587.8 272.5 L599.3 266.2" stroke="#ff3a3a" stroke-width="1"/><path d="M521.8 289.6 L509.4 273.9" stroke="#f03333" stroke-width="1"/><path d="M553.7 259.0 L565.0 241.9" stroke="#f83030" stroke-width="1"/><path d="M553.8 224.0 L562.0 216.5" stroke="#f83030" stroke-width="1"/><path d="M454.5 261.7 L445.8 244.5" stroke="#e03030" stroke-width="1"/><path d="M527.6 270.4 L526.5 260.0" stroke="#ff3a3a" stroke-width="1"/><path d="M575.7 287.2 L592.2 273.5" stroke="#ff3a3a" stroke-width="1"/><path d="M477.8 307.0 L459.5 305.2" stroke="#a82020" stroke-width="1"/><path d="M542.1 225.2 L551.5 214.2" stroke="#c02424" stroke-width="1"/><path d="M500.4 224.9 L504.3 213.1" stroke="#a82020" stroke-width="1"/><path d="M571.4 327.8 L579.6 337.0" stroke="#a82020" stroke-width="1"/><path d="M468.7 303.2 L448.0 299.6" stroke="#e03030" stroke-width="1"/><path d="M522.1 220.3 L529.5 208.3" stroke="#ff3a3a" stroke-width="1"/><path d="M459.2 237.5 L457.8 216.3" stroke="#c02424" stroke-width="1"/><path d="M584.6 269.2 L600.6 260.0" stroke="#e03030" stroke-width="1"/><path d="M436.0 239.8 L432.9 226.7" stroke="#ff4444" stroke-width="1"/><path d="M481.4 225.3 L486.2 203.2" stroke="#a82020" stroke-width="1"/><path d="M493.9 315.2 L481.7 315.3" stroke="#a82020" stroke-width="1"/><path d="M514.3 208.3 L521.6 196.3" stroke="#f03333" stroke-width="1"/><path d="M537.4 210.3 L549.5 197.0" stroke="#e03030" stroke-width="1"/><path d="M583.1 268.5 L598.2 259.3" stroke="#a82020" stroke-width="1"/><path d="M552.6 254.9 L558.6 245.4" stroke="#c02424" stroke-width="1"/><path d="M461.0 285.5 L444.0 273.2" stroke="#f83030" stroke-width="1"/><path d="M546.7 265.7 L553.3 248.4" stroke="#f83030" stroke-width="1"/><path d="M568.0 250.9 L575.5 244.1" stroke="#ff4444" stroke-width="1"/><path d="M489.6 287.2 L473.4 273.4" stroke="#a82020" stroke-width="1"/><path d="M560.3 301.9 L563.5 284.9" stroke="#e03030" stroke-width="1"/><path d="M554.4 241.6 L565.5 229.2" stroke="#c02424" stroke-width="1"/><path d="M525.5 313.3 L514.2 312.7" stroke="#a82020" stroke-width="1"/><path d="M493.1 235.2 L496.0 217.6" stroke="#ff4444" stroke-width="1"/><path d="M522.8 205.7 L530.5 194.7" stroke="#ff4444" stroke-width="1"/><path d="M495.1 298.2 L477.7 291.0" stroke="#a82020" stroke-width="1"/><path d="M554.1 302.6 L550.6 292.8" stroke="#e03030" stroke-width="1"/><path d="M499.3 278.1 L493.3 269.6" stroke="#a82020" stroke-width="1"/><path d="M547.5 238.6 L558.8 224.6" stroke="#e03030" stroke-width="1"/><path d="M550.1 260.5 L555.0 250.3" stroke="#ff4444" stroke-width="1"/><path d="M514.9 209.2 L527.4 189.3" stroke="#e03030" stroke-width="1"/><path d="M535.0 243.6 L546.5 222.6" stroke="#ff4444" stroke-width="1"/><path d="M530.2 290.7 L520.2 275.9" stroke="#a82020" stroke-width="1"/><path d="M491.5 228.4 L496.8 207.2" stroke="#ff3a3a" stroke-width="1"/><path d="M551.0 232.1 L567.3 216.0" stroke="#f83030" stroke-width="1"/><path d="M551.3 271.5 L557.6 254.8" stroke="#f83030" stroke-width="1"/><path d="M576.3 318.1 L593.1 321.3" stroke="#f03333" stroke-width="1"/><path d="M482.6 291.2 L462.8 278.6" stroke="#f83030" stroke-width="1"/><path d="M516.4 295.2 L505.3 287.4" stroke="#e03030" stroke-width="1"/><path d="M569.0 301.6 L575.6 293.6" stroke="#ff3a3a" stroke-width="1"/><path d="M512.6 333.5 L493.6 340.8" stroke="#a82020" stroke-width="1"/><path d="M531.5 278.7 L528.8 267.0" stroke="#a82020" stroke-width="1"/><path d="M548.7 284.5 L550.3 264.0" stroke="#c02424" stroke-width="1"/><path d="M446.4 241.6 L444.0 230.4" stroke="#e03030" stroke-width="1"/><path d="M476.5 314.0 L461.3 313.8" stroke="#ff4444" stroke-width="1"/><path d="M534.6 312.3 L522.7 311.0" stroke="#f83030" stroke-width="1"/><path d="M552.5 247.1 L567.1 229.6" stroke="#a82020" stroke-width="1"/><path d="M589.0 296.3 L601.0 291.1" stroke="#c02424" stroke-width="1"/><path d="M562.6 221.7 L572.3 214.7" stroke="#ff4444" stroke-width="1"/><path d="M587.6 258.5 L601.4 251.5" stroke="#ff3a3a" stroke-width="1"/><path d="M469.5 241.6 L468.1 226.9" stroke="#a82020" stroke-width="1"/><path d="M517.5 305.7 L502.7 302.4" stroke="#e03030" stroke-width="1"/><path d="M518.9 299.2 L501.5 289.4" stroke="#c02424" stroke-width="1"/><path d="M552.5 245.1 L560.0 235.5" stroke="#ff4444" stroke-width="1"/><path d="M484.3 295.7 L471.6 290.2" stroke="#a82020" stroke-width="1"/><path d="M512.8 305.1 L496.9 301.5" stroke="#ff4444" stroke-width="1"/><path d="M573.3 328.1 L581.0 335.6" stroke="#a82020" stroke-width="1"/><path d="M490.5 249.2 L489.4 232.5" stroke="#e03030" stroke-width="1"/><path d="M562.5 319.4 L574.2 339.8" stroke="#ff4444" stroke-width="1"/><path d="M591.5 275.1 L612.5 266.0" stroke="#ff3a3a" stroke-width="1"/><path d="M469.9 310.8 L457.7 310.3" stroke="#a82020" stroke-width="1"/><path d="M501.6 240.0 L506.1 216.8" stroke="#ff3a3a" stroke-width="1"/><path d="M456.4 299.1 L439.8 294.7" stroke="#ff4444" stroke-width="1"/><path d="M585.7 280.5 L600.8 271.9" stroke="#f03333" stroke-width="1"/><path d="M502.6 292.4 L489.6 283.4" stroke="#e03030" stroke-width="1"/><path d="M482.2 267.2 L476.6 256.0" stroke="#a82020" stroke-width="1"/><path d="M520.0 311.6 L501.7 310.0" stroke="#a82020" stroke-width="1"/><path d="M564.1 312.8 L579.0 304.8" stroke="#e03030" stroke-width="1"/><path d="M530.3 305.9 L511.8 299.9" stroke="#f83030" stroke-width="1"/><path d="M533.1 222.1 L540.7 211.8" stroke="#ff3a3a" stroke-width="1"/><path d="M486.1 228.1 L490.7 206.8" stroke="#ff3a3a" stroke-width="1"/><path d="M461.2 274.6 L452.0 264.1" stroke="#f83030" stroke-width="1"/><path d="M548.8 236.1 L555.2 228.1" stroke="#a82020" stroke-width="1"/><path d="M512.6 312.5 L491.0 311.4" stroke="#e03030" stroke-width="1"/><path d="M577.4 295.9 L592.1 285.3" stroke="#a82020" stroke-width="1"/><path d="M570.2 282.4 L580.9 270.1" stroke="#c02424" stroke-width="1"/><path d="M557.6 302.2 L556.8 288.8" stroke="#a82020" stroke-width="1"/><path d="M540.2 247.5 L549.8 230.0" stroke="#ff4444" stroke-width="1"/><path d="M437.2 245.2 L433.2 231.7" stroke="#ff3a3a" stroke-width="1"/><path d="M565.9 264.4 L577.4 251.7" stroke="#c02424" stroke-width="1"/><path d="M520.3 252.7 L522.2 239.4" stroke="#ff3a3a" stroke-width="1"/><path d="M519.6 311.8 L508.2 310.9" stroke="#e03030" stroke-width="1"/><path d="M430.4 252.5 L426.1 243.2" stroke="#f83030" stroke-width="1"/><path d="M505.5 241.6 L509.8 220.3" stroke="#f83030" stroke-width="1"/><path d="M455.6 255.2 L448.8 236.5" stroke="#ff3a3a" stroke-width="1"/><path d="M497.5 298.6 L485.9 294.1" stroke="#e03030" stroke-width="1"/><path d="M559.0 315.4 L543.2 321.5" stroke="#e03030" stroke-width="1"/><path d="M538.4 300.0 L522.5 284.2" stroke="#c02424" stroke-width="1"/><path d="M442.3 239.0 L439.9 227.2" stroke="#c02424" stroke-width="1"/><path d="M462.4 292.3 L441.6 281.9" stroke="#ff3a3a" stroke-width="1"/><path d="M558.0 261.4 L567.1 248.3" stroke="#a82020" stroke-width="1"/><path d="M499.6 274.0 L489.6 252.7" stroke="#ff3a3a" stroke-width="1"/><path d="M517.2 233.7 L522.0 221.2" stroke="#e03030" stroke-width="1"/><path d="M490.7 208.5 L497.2 191.8" stroke="#e03030" stroke-width="1"/><path d="M540.0 210.1 L547.3 202.2" stroke="#c02424" stroke-width="1"/><path d="M555.5 326.7 L550.1 340.6" stroke="#a82020" stroke-width="1"/><path d="M561.3 304.7 L565.3 288.1" stroke="#ff3a3a" stroke-width="1"/><path d="M523.2 328.0 L508.5 333.2" stroke="#ff4444" stroke-width="1"/><path d="M456.8 228.9 L457.5 206.6" stroke="#ff3a3a" stroke-width="1"/><path d="M575.7 293.7 L586.2 284.8" stroke="#f83030" stroke-width="1"/><path d="M460.6 237.9 L459.3 216.6" stroke="#ff3a3a" stroke-width="1"/><path d="M479.2 253.7 L475.6 236.8" stroke="#ff4444" stroke-width="1"/><path d="M514.4 295.2 L504.7 288.7" stroke="#e03030" stroke-width="1"/><path d="M492.9 259.6 L488.9 241.7" stroke="#c02424" stroke-width="1"/><path d="M530.7 268.6 L531.2 250.4" stroke="#f03333" stroke-width="1"/><path d="M458.0 300.2 L436.3 294.9" stroke="#ff4444" stroke-width="1"/><path d="M471.6 262.6 L463.7 243.9" stroke="#f83030" stroke-width="1"/><path d="M435.5 260.3 L426.3 244.2" stroke="#c02424" stroke-width="1"/><path d="M524.8 325.6 L507.9 330.8" stroke="#e03030" stroke-width="1"/><path d="M452.0 293.9 L434.8 286.8" stroke="#ff4444" stroke-width="1"/><path d="M517.3 268.2 L514.7 253.8" stroke="#f03333" stroke-width="1"/><path d="M459.5 277.0 L446.9 263.8" stroke="#ff3a3a" stroke-width="1"/><path d="M540.0 268.7 L545.0 245.9" stroke="#e03030" stroke-width="1"/><path d="M454.1 260.7 L447.7 248.3" stroke="#f03333" stroke-width="1"/><path d="M527.7 298.8 L509.9 285.5" stroke="#ff4444" stroke-width="1"/><path d="M474.9 234.2 L476.3 212.5" stroke="#e03030" stroke-width="1"/><path d="M507.4 254.0 L507.2 240.8" stroke="#f83030" stroke-width="1"/><path d="M507.2 249.3 L508.2 234.6" stroke="#e03030" stroke-width="1"/><path d="M540.4 307.5 L523.1 300.8" stroke="#e03030" stroke-width="1"/><path d="M533.9 228.8 L545.6 212.2" stroke="#f83030" stroke-width="1"/><path d="M583.8 240.4 L596.1 234.2" stroke="#f83030" stroke-width="1"/><path d="M487.1 204.5 L491.2 193.5" stroke="#a82020" stroke-width="1"/><path d="M558.3 312.9 L547.1 299.2" stroke="#ff3a3a" stroke-width="1"/><path d="M428.0 281.3 L413.5 270.6" stroke="#ff4444" stroke-width="1"/><path d="M535.0 247.0 L542.8 230.0" stroke="#ff3a3a" stroke-width="1"/><path d="M500.6 325.5 L483.1 328.6" stroke="#ff4444" stroke-width="1"/><path d="M508.4 277.1 L499.4 258.7" stroke="#ff4444" stroke-width="1"/><path d="M480.0 308.1 L462.5 306.5" stroke="#a82020" stroke-width="1"/><path d="M554.4 321.9 L542.9 336.0" stroke="#ff3a3a" stroke-width="1"/><path d="M528.9 240.9 L539.2 219.8" stroke="#c02424" stroke-width="1"/><path d="M552.4 211.2 L562.2 202.9" stroke="#ff4444" stroke-width="1"/><path d="M574.1 228.0 L582.9 222.7" stroke="#e03030" stroke-width="1"/><path d="M455.9 260.3 L446.4 239.5" stroke="#a82020" stroke-width="1"/><path d="M500.3 228.5 L505.0 212.7" stroke="#ff3a3a" stroke-width="1"/><path d="M468.8 256.4 L462.1 234.2" stroke="#f83030" stroke-width="1"/><path d="M549.8 297.8 L544.8 282.9" stroke="#c02424" stroke-width="1"/><path d="M438.4 249.2 L431.2 226.8" stroke="#ff4444" stroke-width="1"/><path d="M560.1 243.9 L574.3 230.3" stroke="#f83030" stroke-width="1"/><path d="M523.7 250.2 L526.9 236.1" stroke="#ff3a3a" stroke-width="1"/><path d="M536.9 227.7 L543.7 218.3" stroke="#e03030" stroke-width="1"/><path d="M478.6 214.8 L485.2 191.9" stroke="#ff4444" stroke-width="1"/><path d="M467.1 239.9 L465.9 218.5" stroke="#f03333" stroke-width="1"/><path d="M474.4 278.6 L465.8 269.5" stroke="#f83030" stroke-width="1"/><path d="M486.2 271.1 L477.6 255.3" stroke="#f83030" stroke-width="1"/><path d="M499.8 268.7 L494.3 253.9" stroke="#a82020" stroke-width="1"/><path d="M579.9 281.3 L594.3 271.0" stroke="#e03030" stroke-width="1"/><path d="M490.6 293.9 L481.6 289.1" stroke="#ff3a3a" stroke-width="1"/><path d="M535.1 329.0 L519.6 337.7" stroke="#e03030" stroke-width="1"/><path d="M563.2 223.8 L577.3 213.9" stroke="#f03333" stroke-width="1"/><path d="M461.0 256.5 L456.6 245.7" stroke="#f03333" stroke-width="1"/><path d="M449.7 272.6 L442.7 264.8" stroke="#ff3a3a" stroke-width="1"/><path d="M545.7 325.3 L528.2 337.8" stroke="#c02424" stroke-width="1"/><path d="M466.8 227.5 L468.3 209.5" stroke="#f03333" stroke-width="1"/><path d="M498.0 233.0 L500.5 220.9" stroke="#e03030" stroke-width="1"/><path d="M453.5 229.0 L454.0 205.7" stroke="#ff3a3a" stroke-width="1"/><path d="M500.1 293.3 L481.4 280.9" stroke="#c02424" stroke-width="1"/><path d="M512.1 263.1 L510.5 252.4" stroke="#f03333" stroke-width="1"/><path d="M516.0 297.8 L496.3 285.8" stroke="#a82020" stroke-width="1"/><path d="M517.3 288.0 L503.7 270.5" stroke="#ff4444" stroke-width="1"/><path d="M565.3 267.8 L580.9 250.5" stroke="#f03333" stroke-width="1"/><path d="M477.0 221.9 L480.7 204.1" stroke="#ff4444" stroke-width="1"/><path d="M435.5 286.2 L423.9 279.4" stroke="#f03333" stroke-width="1"/><path d="M539.1 320.5 L529.3 323.0" stroke="#e03030" stroke-width="1"/><path d="M472.3 307.4 L457.7 306.1" stroke="#a82020" stroke-width="1"/><path d="M471.2 311.4 L460.3 311.0" stroke="#ff3a3a" stroke-width="1"/><path d="M460.7 264.4 L452.7 249.9" stroke="#e03030" stroke-width="1"/><path d="M516.0 295.6 L500.3 284.5" stroke="#e03030" stroke-width="1"/><path d="M523.5 242.4 L527.2 231.2" stroke="#f03333" stroke-width="1"/><path d="M557.1 315.4 L535.6 318.3" stroke="#a82020" stroke-width="1"/><path d="M517.1 325.7 L504.4 328.8" stroke="#ff4444" stroke-width="1"/><path d="M535.3 350.0 L525.5 364.0" stroke="#f03333" stroke-width="1"/><path d="M550.5 229.5 L567.2 213.4" stroke="#e03030" stroke-width="1"/><path d="M463.7 253.1 L457.6 230.0" stroke="#c02424" stroke-width="1"/><path d="M515.0 339.1 L503.6 345.2" stroke="#a82020" stroke-width="1"/><path d="M508.8 212.5 L513.9 202.5" stroke="#a82020" stroke-width="1"/><path d="M467.3 262.3 L460.7 248.4" stroke="#ff3a3a" stroke-width="1"/><path d="M482.4 212.9 L486.2 200.2" stroke="#f03333" stroke-width="1"/><path d="M495.9 259.2 L492.5 241.6" stroke="#e03030" stroke-width="1"/><path d="M533.6 212.8 L541.7 203.0" stroke="#f83030" stroke-width="1"/><path d="M497.8 313.3 L486.0 312.9" stroke="#f83030" stroke-width="1"/><path d="M474.2 306.6 L452.5 304.5" stroke="#ff4444" stroke-width="1"/><path d="M519.2 206.4 L531.7 188.2" stroke="#f03333" stroke-width="1"/><path d="M543.0 268.1 L546.5 253.4" stroke="#a82020" stroke-width="1"/><path d="M483.0 240.1 L483.2 224.3" stroke="#f83030" stroke-width="1"/><path d="M491.2 230.6 L496.7 207.2" stroke="#ff4444" stroke-width="1"/><path d="M528.8 304.7 L507.5 296.6" stroke="#f83030" stroke-width="1"/><path d="M527.6 340.3 L515.3 350.0" stroke="#c02424" stroke-width="1"/><path d="M534.7 309.0 L520.9 305.8" stroke="#ff4444" stroke-width="1"/><path d="M503.0 221.4 L510.3 204.1" stroke="#f03333" stroke-width="1"/><path d="M473.7 266.1 L466.0 251.0" stroke="#c02424" stroke-width="1"/><path d="M513.9 329.3 L495.2 335.1" stroke="#e03030" stroke-width="1"/><path d="M536.6 272.4 L538.0 251.8" stroke="#f83030" stroke-width="1"/><path d="M511.5 296.9 L492.7 285.7" stroke="#c02424" stroke-width="1"/><path d="M479.3 206.3 L485.3 187.7" stroke="#ff3a3a" stroke-width="1"/><path d="M518.7 247.3 L524.4 225.2" stroke="#f83030" stroke-width="1"/><path d="M555.0 254.5 L567.3 238.3" stroke="#f83030" stroke-width="1"/><path d="M480.3 256.5 L476.0 239.7" stroke="#e03030" stroke-width="1"/><path d="M559.9 264.8 L573.8 246.5" stroke="#f83030" stroke-width="1"/><path d="M442.0 279.9 L425.4 265.8" stroke="#f83030" stroke-width="1"/><path d="M494.7 286.6 L480.2 273.2" stroke="#ff4444" stroke-width="1"/><path d="M471.0 216.3 L475.6 195.9" stroke="#ff4444" stroke-width="1"/><path d="M512.3 265.8 L509.3 246.2" stroke="#a82020" stroke-width="1"/><path d="M477.5 267.8 L471.6 257.0" stroke="#a82020" stroke-width="1"/><path d="M467.9 235.1 L467.7 221.6" stroke="#ff3a3a" stroke-width="1"/><path d="M538.9 318.5 L527.7 320.3" stroke="#f83030" stroke-width="1"/><path d="M503.8 306.1 L484.2 302.9" stroke="#f83030" stroke-width="1"/><path d="M439.1 286.0 L430.4 280.9" stroke="#f83030" stroke-width="1"/><path d="M488.1 313.2 L465.7 312.7" stroke="#f03333" stroke-width="1"/><path d="M475.2 261.2 L468.5 243.7" stroke="#ff3a3a" stroke-width="1"/><path d="M438.6 258.9 L432.5 248.1" stroke="#f83030" stroke-width="1"/><path d="M559.3 337.5 L558.5 359.3" stroke="#ff4444" stroke-width="1"/><path d="M524.0 257.0 L525.7 243.0" stroke="#e03030" stroke-width="1"/><path d="M496.2 283.5 L481.4 266.5" stroke="#e03030" stroke-width="1"/><path d="M537.4 338.4 L526.1 350.1" stroke="#ff3a3a" stroke-width="1"/><path d="M546.0 321.2 L529.6 328.5" stroke="#e03030" stroke-width="1"/><path d="M524.2 297.8 L515.7 292.2" stroke="#a82020" stroke-width="1"/><path d="M438.0 285.7 L425.5 278.1" stroke="#f83030" stroke-width="1"/><path d="M485.7 270.9 L477.6 256.1" stroke="#ff4444" stroke-width="1"/><path d="M436.0 284.6 L423.7 276.9" stroke="#e03030" stroke-width="1"/><path d="M567.5 248.7 L581.9 236.7" stroke="#f83030" stroke-width="1"/><path d="M485.0 247.4 L483.8 234.0" stroke="#f03333" stroke-width="1"/><path d="M510.9 268.5 L507.1 253.4" stroke="#f03333" stroke-width="1"/><path d="M504.8 311.2 L485.9 310.0" stroke="#a82020" stroke-width="1"/><path d="M565.0 237.9 L573.7 230.6" stroke="#f83030" stroke-width="1"/><path d="M543.6 218.3 L553.8 207.9" stroke="#f03333" stroke-width="1"/><path d="M478.6 241.9 L478.0 228.7" stroke="#f03333" stroke-width="1"/><path d="M462.5 266.9 L451.7 248.1" stroke="#f03333" stroke-width="1"/><path d="M539.6 292.3 L530.8 273.0" stroke="#a82020" stroke-width="1"/><path d="M564.2 279.7 L569.7 270.5" stroke="#f03333" stroke-width="1"/><path d="M450.7 281.3 L441.1 273.8" stroke="#e03030" stroke-width="1"/><path d="M455.0 241.5 L452.9 229.7" stroke="#f03333" stroke-width="1"/><path d="M546.7 320.9 L525.2 330.4" stroke="#ff3a3a" stroke-width="1"/><path d="M586.1 269.5 L600.7 261.4" stroke="#f03333" stroke-width="1"/><path d="M512.0 278.6 L502.7 259.0" stroke="#a82020" stroke-width="1"/><path d="M539.4 229.2 L546.5 219.5" stroke="#ff3a3a" stroke-width="1"/><path d="M476.3 231.8 L477.6 215.9" stroke="#e03030" stroke-width="1"/><path d="M521.2 286.0 L509.3 265.9" stroke="#f03333" stroke-width="1"/><path d="M538.4 262.3 L541.8 248.5" stroke="#ff4444" stroke-width="1"/><path d="M530.8 217.7 L541.9 203.6" stroke="#ff4444" stroke-width="1"/><path d="M555.0 305.3 L548.7 290.1" stroke="#c02424" stroke-width="1"/><path d="M572.7 239.4 L592.8 226.8" stroke="#c02424" stroke-width="1"/><path d="M452.3 229.7 L451.9 218.9" stroke="#f83030" stroke-width="1"/><path d="M459.5 260.0 L453.1 246.2" stroke="#f83030" stroke-width="1"/><path d="M481.4 245.6 L480.2 230.8" stroke="#f83030" stroke-width="1"/><path d="M548.1 289.0 L546.7 269.6" stroke="#ff4444" stroke-width="1"/><path d="M498.2 253.1 L497.1 235.0" stroke="#c02424" stroke-width="1"/><path d="M462.2 256.2 L456.2 239.8" stroke="#c02424" stroke-width="1"/><path d="M471.7 293.7 L459.7 288.3" stroke="#f03333" stroke-width="1"/><path d="M485.4 274.4 L473.6 255.7" stroke="#e03030" stroke-width="1"/><path d="M488.4 254.1 L485.6 234.9" stroke="#f83030" stroke-width="1"/><path d="M447.9 283.4 L437.1 275.8" stroke="#c02424" stroke-width="1"/><path d="M483.2 217.1 L489.8 195.3" stroke="#c02424" stroke-width="1"/><path d="M559.3 305.6 L559.0 294.6" stroke="#ff4444" stroke-width="1"/><path d="M555.8 317.7 L541.4 326.9" stroke="#a82020" stroke-width="1"/><path d="M511.0 256.4 L511.9 232.6" stroke="#f83030" stroke-width="1"/><path d="M454.6 276.0 L441.2 261.7" stroke="#c02424" stroke-width="1"/><path d="M552.4 342.5 L547.6 359.8" stroke="#a82020" stroke-width="1"/><path d="M557.3 309.7 L549.0 293.0" stroke="#ff4444" stroke-width="1"/><path d="M517.4 326.1 L507.5 328.7" stroke="#c02424" stroke-width="1"/><path d="M565.1 264.4 L572.6 255.4" stroke="#f03333" stroke-width="1"/><path d="M450.6 229.5 L450.2 211.7" stroke="#f83030" stroke-width="1"/><path d="M533.2 258.5 L538.5 238.8" stroke="#e03030" stroke-width="1"/><path d="M533.3 213.0 L539.7 205.2" stroke="#e03030" stroke-width="1"/><path d="M554.4 313.5 L534.8 308.2" stroke="#e03030" stroke-width="1"/><path d="M507.9 265.6 L504.2 247.5" stroke="#ff3a3a" stroke-width="1"/><path d="M484.5 314.0 L466.0 313.8" stroke="#ff3a3a" stroke-width="1"/><path d="M571.3 249.1 L582.0 240.7" stroke="#f03333" stroke-width="1"/><path d="M507.9 272.6 L500.2 250.0" stroke="#ff4444" stroke-width="1"/><path d="M521.7 287.5 L514.8 278.3" stroke="#a82020" stroke-width="1"/><path d="M515.1 309.6 L492.2 306.8" stroke="#a82020" stroke-width="1"/><path d="M488.7 233.9 L490.1 221.9" stroke="#e03030" stroke-width="1"/><path d="M442.6 266.0 L430.8 248.3" stroke="#ff4444" stroke-width="1"/><path d="M560.0 284.5 L564.3 273.2" stroke="#c02424" stroke-width="1"/><path d="M498.6 283.4 L484.6 266.8" stroke="#ff3a3a" stroke-width="1"/><path d="M545.8 339.5 L536.0 356.4" stroke="#ff4444" stroke-width="1"/><path d="M553.1 213.4 L568.5 201.1" stroke="#ff4444" stroke-width="1"/><path d="M493.0 266.6 L487.7 253.0" stroke="#f03333" stroke-width="1"/><path d="M503.6 305.5 L485.1 302.2" stroke="#f03333" stroke-width="1"/><path d="M540.4 319.1 L524.2 322.5" stroke="#c02424" stroke-width="1"/><path d="M495.0 320.3 L478.2 321.6" stroke="#f03333" stroke-width="1"/><path d="M565.2 290.1 L578.3 270.2" stroke="#ff3a3a" stroke-width="1"/><path d="M458.9 229.4 L458.9 217.4" stroke="#ff4444" stroke-width="1"/><path d="M504.8 333.1 L491.8 337.3" stroke="#c02424" stroke-width="1"/><path d="M451.0 252.4 L446.9 241.2" stroke="#f83030" stroke-width="1"/><path d="M570.2 294.7 L584.1 279.2" stroke="#a82020" stroke-width="1"/><path d="M533.0 325.8 L516.3 332.5" stroke="#ff3a3a" stroke-width="1"/><path d="M485.9 310.4 L464.8 309.1" stroke="#a82020" stroke-width="1"/><path d="M519.1 250.8 L520.7 239.9" stroke="#a82020" stroke-width="1"/><path d="M487.8 318.2 L465.8 319.1" stroke="#f03333" stroke-width="1"/><path d="M495.7 290.8 L483.6 282.3" stroke="#e03030" stroke-width="1"/><path d="M563.9 231.7 L577.5 221.4" stroke="#f03333" stroke-width="1"/><path d="M539.4 203.4 L547.8 194.6" stroke="#f03333" stroke-width="1"/><path d="M587.7 282.8 L602.2 275.1" stroke="#ff4444" stroke-width="1"/><path d="M568.2 252.5 L577.1 244.4" stroke="#f83030" stroke-width="1"/><path d="M431.2 255.8 L424.5 242.7" stroke="#f03333" stroke-width="1"/><path d="M490.1 268.8 L484.6 257.5" stroke="#c02424" stroke-width="1"/><path d="M577.0 268.1 L593.2 256.1" stroke="#ff3a3a" stroke-width="1"/><path d="M534.6 241.0 L540.2 229.9" stroke="#e03030" stroke-width="1"/><path d="M439.4 261.3 L430.1 245.0" stroke="#f03333" stroke-width="1"/><path d="M498.1 244.9 L499.0 229.4" stroke="#f03333" stroke-width="1"/><path d="M544.3 254.4 L551.9 239.2" stroke="#ff3a3a" stroke-width="1"/><path d="M539.5 338.1 L523.8 355.6" stroke="#c02424" stroke-width="1"/><path d="M535.4 289.5 L526.6 270.0" stroke="#c02424" stroke-width="1"/><path d="M496.1 303.3 L483.7 300.6" stroke="#c02424" stroke-width="1"/><path d="M505.0 273.1 L499.1 259.9" stroke="#ff3a3a" stroke-width="1"/><path d="M527.9 321.4 L507.8 325.3" stroke="#f83030" stroke-width="1"/><path d="M446.9 286.0 L429.1 274.4" stroke="#f03333" stroke-width="1"/><path d="M562.1 298.7 L565.1 288.5" stroke="#f83030" stroke-width="1"/><path d="M451.8 237.1 L449.7 213.4" stroke="#ff4444" stroke-width="1"/><path d="M510.3 331.8 L500.6 335.0" stroke="#e03030" stroke-width="1"/><path d="M430.7 248.1 L426.8 238.0" stroke="#c02424" stroke-width="1"/><path d="M488.8 207.8 L493.0 196.4" stroke="#ff3a3a" stroke-width="1"/><path d="M534.2 305.2 L515.1 297.1" stroke="#ff3a3a" stroke-width="1"/><path d="M481.3 315.4 L466.4 315.5" stroke="#f83030" stroke-width="1"/><path d="M455.9 250.3 L450.7 231.8" stroke="#c02424" stroke-width="1"/><path d="M474.7 264.3 L467.0 247.2" stroke="#a82020" stroke-width="1"/><path d="M489.4 213.3 L496.5 193.7" stroke="#e03030" stroke-width="1"/><path d="M471.9 233.4 L472.9 213.6" stroke="#c02424" stroke-width="1"/><path d="M505.4 333.2 L483.4 340.5" stroke="#f03333" stroke-width="1"/><path d="M511.9 336.8 L501.5 341.5" stroke="#a82020" stroke-width="1"/><path d="M515.4 234.8 L524.2 212.7" stroke="#f03333" stroke-width="1"/><path d="M571.5 254.3 L580.4 246.7" stroke="#c02424" stroke-width="1"/><path d="M447.3 278.7 L437.8 270.5" stroke="#c02424" stroke-width="1"/><path d="M491.0 301.6 L479.0 298.5" stroke="#f83030" stroke-width="1"/><path d="M553.9 223.4 L567.1 212.0" stroke="#e03030" stroke-width="1"/><path d="M515.7 244.1 L522.1 221.2" stroke="#ff4444" stroke-width="1"/><path d="M533.5 347.9 L519.4 365.6" stroke="#ff4444" stroke-width="1"/><path d="M467.5 291.8 L447.5 281.1" stroke="#ff3a3a" stroke-width="1"/><path d="M506.6 274.3 L498.4 254.6" stroke="#ff4444" stroke-width="1"/><path d="M485.9 237.8 L486.6 224.6" stroke="#ff4444" stroke-width="1"/><path d="M572.5 257.5 L582.6 249.1" stroke="#e03030" stroke-width="1"/><path d="M580.2 288.3 L591.1 280.5" stroke="#e03030" stroke-width="1"/><path d="M536.1 341.2 L523.2 355.2" stroke="#e03030" stroke-width="1"/><path d="M550.5 242.6 L565.9 224.6" stroke="#a82020" stroke-width="1"/><path d="M556.4 333.9 L552.4 355.7" stroke="#e03030" stroke-width="1"/><path d="M540.8 272.7 L542.2 258.5" stroke="#ff3a3a" stroke-width="1"/><path d="M536.0 261.8 L540.7 242.9" stroke="#c02424" stroke-width="1"/><path d="M548.2 270.0 L551.1 259.7" stroke="#a82020" stroke-width="1"/><path d="M533.5 348.1 L524.1 359.9" stroke="#a82020" stroke-width="1"/><path d="M516.7 227.6 L523.5 213.1" stroke="#f03333" stroke-width="1"/><path d="M556.9 278.5 L560.4 268.7" stroke="#ff3a3a" stroke-width="1"/><path d="M558.8 337.4 L558.1 349.2" stroke="#e03030" stroke-width="1"/><path d="M555.1 330.9 L551.7 341.7" stroke="#f03333" stroke-width="1"/><path d="M460.1 290.6 L446.1 283.3" stroke="#f83030" stroke-width="1"/><path d="M569.6 247.0 L587.5 233.6" stroke="#ff3a3a" stroke-width="1"/><path d="M478.2 263.4 L471.1 246.0" stroke="#ff3a3a" stroke-width="1"/><path d="M568.5 294.0 L576.1 283.2" stroke="#ff4444" stroke-width="1"/><path d="M485.1 213.7 L488.3 203.5" stroke="#e03030" stroke-width="1"/><path d="M540.0 294.0 L529.6 273.1" stroke="#f03333" stroke-width="1"/><path d="M507.7 279.7 L500.7 268.6" stroke="#c02424" stroke-width="1"/><path d="M556.5 328.5 L552.3 345.0" stroke="#ff3a3a" stroke-width="1"/><path d="M435.0 268.6 L420.9 249.9" stroke="#ff3a3a" stroke-width="1"/><path d="M493.2 308.5 L469.7 306.3" stroke="#f03333" stroke-width="1"/><path d="M503.9 238.1 L506.3 225.9" stroke="#e03030" stroke-width="1"/><path d="M521.5 297.5 L504.2 285.5" stroke="#e03030" stroke-width="1"/><path d="M507.7 323.0 L497.3 324.7" stroke="#ff4444" stroke-width="1"/><path d="M450.4 265.5 L440.1 248.7" stroke="#a82020" stroke-width="1"/><path d="M507.6 239.2 L511.1 223.7" stroke="#c02424" stroke-width="1"/><path d="M473.3 310.4 L457.5 309.6" stroke="#f03333" stroke-width="1"/><path d="M563.2 240.6 L573.2 231.8" stroke="#c02424" stroke-width="1"/><path d="M547.5 263.6 L554.9 246.6" stroke="#ff4444" stroke-width="1"/><path d="M584.8 275.7 L601.5 266.0" stroke="#ff3a3a" stroke-width="1"/><path d="M548.0 221.1 L564.8 205.7" stroke="#ff3a3a" stroke-width="1"/><path d="M485.9 232.7 L488.7 213.6" stroke="#ff4444" stroke-width="1"/><path d="M515.6 281.9 L505.7 264.0" stroke="#a82020" stroke-width="1"/><path d="M463.9 288.6 L448.9 279.4" stroke="#ff4444" stroke-width="1"/><path d="M522.0 338.5 L504.7 349.3" stroke="#ff4444" stroke-width="1"/><path d="M502.6 296.7 L481.7 285.6" stroke="#e03030" stroke-width="1"/><path d="M455.5 237.4 L453.9 223.0" stroke="#f83030" stroke-width="1"/><path d="M526.9 218.6 L540.6 200.2" stroke="#a82020" stroke-width="1"/><path d="M441.0 290.9 L425.3 283.5" stroke="#ff4444" stroke-width="1"/><path d="M431.6 244.9 L428.2 234.5" stroke="#a82020" stroke-width="1"/><path d="M450.5 270.5 L439.9 256.7" stroke="#a82020" stroke-width="1"/><path d="M552.9 328.3 L547.1 339.3" stroke="#a82020" stroke-width="1"/><path d="M549.0 229.7 L565.1 213.6" stroke="#e03030" stroke-width="1"/><path d="M522.3 254.4 L523.9 242.4" stroke="#e03030" stroke-width="1"/><path d="M478.2 312.2 L458.9 311.5" stroke="#c02424" stroke-width="1"/><path d="M453.5 272.2 L446.2 263.6" stroke="#ff4444" stroke-width="1"/><path d="M498.6 329.2 L487.3 331.8" stroke="#f83030" stroke-width="1"/><path d="M437.6 289.7 L419.2 280.4" stroke="#f03333" stroke-width="1"/><path d="M542.2 283.1 L540.7 266.4" stroke="#f83030" stroke-width="1"/><path d="M518.4 325.7 L504.2 329.4" stroke="#ff4444" stroke-width="1"/><path d="M511.6 336.9 L502.4 341.0" stroke="#e03030" stroke-width="1"/><path d="M546.6 295.0 L540.4 275.9" stroke="#e03030" stroke-width="1"/><path d="M546.9 260.1 L552.4 247.5" stroke="#ff4444" stroke-width="1"/><path d="M562.6 314.3 L583.8 308.4" stroke="#f03333" stroke-width="1"/><path d="M567.8 331.1 L573.9 343.8" stroke="#a82020" stroke-width="1"/><path d="M501.2 292.2 L487.9 282.9" stroke="#e03030" stroke-width="1"/><path d="M577.7 299.2 L597.8 286.8" stroke="#ff4444" stroke-width="1"/><path d="M462.2 222.2 L463.8 207.4" stroke="#ff4444" stroke-width="1"/><path d="M527.6 258.6 L530.7 240.2" stroke="#a82020" stroke-width="1"/><path d="M496.1 234.1 L500.0 215.1" stroke="#e03030" stroke-width="1"/><path d="M525.7 264.0 L526.2 247.8" stroke="#ff4444" stroke-width="1"/><path d="M453.1 273.0 L438.9 255.3" stroke="#a82020" stroke-width="1"/><path d="M517.1 256.3 L518.4 238.5" stroke="#ff4444" stroke-width="1"/><path d="M490.9 232.4 L495.7 209.0" stroke="#f03333" stroke-width="1"/><path d="M551.9 246.4 L562.3 233.1" stroke="#c02424" stroke-width="1"/><path d="M511.5 272.7 L507.0 260.3" stroke="#f03333" stroke-width="1"/><path d="M500.1 290.2 L484.9 278.1" stroke="#c02424" stroke-width="1"/><path d="M488.5 321.3 L472.1 322.7" stroke="#ff3a3a" stroke-width="1"/><path d="M520.4 302.0 L500.7 293.4" stroke="#ff3a3a" stroke-width="1"/><path d="M432.1 280.8 L421.6 273.0" stroke="#ff4444" stroke-width="1"/><path d="M573.4 303.4 L589.7 291.9" stroke="#ff4444" stroke-width="1"/><path d="M548.5 235.5 L562.1 220.1" stroke="#a82020" stroke-width="1"/><path d="M435.5 242.0 L430.6 221.2" stroke="#a82020" stroke-width="1"/><path d="M475.7 247.6 L473.7 235.1" stroke="#ff3a3a" stroke-width="1"/><path d="M539.5 329.4 L525.3 339.4" stroke="#ff3a3a" stroke-width="1"/><path d="M499.5 315.2 L477.4 315.3" stroke="#c02424" stroke-width="1"/><path d="M489.3 239.8 L490.0 226.3" stroke="#ff4444" stroke-width="1"/><path d="M533.5 208.2 L542.3 197.8" stroke="#f03333" stroke-width="1"/><path d="M542.3 306.9 L525.0 298.8" stroke="#ff4444" stroke-width="1"/><path d="M468.4 223.1 L469.9 211.2" stroke="#a82020" stroke-width="1"/><path d="M488.9 218.4 L495.3 199.2" stroke="#ff3a3a" stroke-width="1"/><path d="M458.1 270.5 L447.6 256.0" stroke="#e03030" stroke-width="1"/><path d="M550.5 290.3 L549.7 274.2" stroke="#f03333" stroke-width="1"/><path d="M488.8 210.9 L495.0 193.8" stroke="#ff4444" stroke-width="1"/><path d="M525.1 312.7 L512.6 311.8" stroke="#a82020" stroke-width="1"/><path d="M499.7 269.3 L492.4 248.5" stroke="#ff3a3a" stroke-width="1"/><path d="M532.7 226.4 L538.3 217.9" stroke="#f83030" stroke-width="1"/><path d="M439.0 254.2 L432.2 238.6" stroke="#f83030" stroke-width="1"/><path d="M493.6 213.2 L501.4 193.5" stroke="#c02424" stroke-width="1"/><path d="M526.3 257.1 L530.9 234.7" stroke="#f03333" stroke-width="1"/><path d="M452.9 274.1 L444.2 264.7" stroke="#ff3a3a" stroke-width="1"/><path d="M560.6 265.6 L572.0 250.1" stroke="#e03030" stroke-width="1"/><path d="M493.0 229.2 L496.6 213.6" stroke="#a82020" stroke-width="1"/><path d="M576.2 302.6 L585.0 296.7" stroke="#a82020" stroke-width="1"/><path d="M560.7 228.8 L576.5 216.6" stroke="#f83030" stroke-width="1"/><path d="M558.1 337.1 L556.8 351.6" stroke="#a82020" stroke-width="1"/><path d="M532.5 350.2 L520.6 365.4" stroke="#f03333" stroke-width="1"/><path d="M501.1 289.3 L489.3 279.6" stroke="#f83030" stroke-width="1"/><path d="M496.5 246.3 L496.6 234.3" stroke="#f03333" stroke-width="1"/><path d="M567.9 323.6 L575.9 332.2" stroke="#f03333" stroke-width="1"/><path d="M590.6 277.3 L606.3 269.9" stroke="#e03030" stroke-width="1"/><path d="M502.1 282.7 L489.4 266.1" stroke="#ff3a3a" stroke-width="1"/><path d="M528.5 317.9 L514.3 319.2" stroke="#c02424" stroke-width="1"/><path d="M486.7 273.8 L480.1 263.9" stroke="#e03030" stroke-width="1"/><path d="M515.0 211.5 L526.9 192.2" stroke="#c02424" stroke-width="1"/><path d="M525.3 275.7 L521.3 257.7" stroke="#ff3a3a" stroke-width="1"/><path d="M500.4 265.9 L496.1 251.9" stroke="#ff4444" stroke-width="1"/><path d="M463.5 285.2 L451.3 276.4" stroke="#ff3a3a" stroke-width="1"/><path d="M520.1 236.6 L523.9 226.3" stroke="#c02424" stroke-width="1"/><path d="M540.3 301.5 L528.6 291.4" stroke="#ff3a3a" stroke-width="1"/><path d="M569.6 292.1 L576.4 283.0" stroke="#f83030" stroke-width="1"/><path d="M490.2 233.5 L493.9 212.1" stroke="#ff3a3a" stroke-width="1"/><path d="M535.4 307.9 L513.1 301.5" stroke="#e03030" stroke-width="1"/><path d="M575.6 283.2 L592.3 269.3" stroke="#e03030" stroke-width="1"/><path d="M531.5 301.0 L513.0 288.5" stroke="#ff3a3a" stroke-width="1"/><path d="M541.4 312.6 L524.0 310.4" stroke="#e03030" stroke-width="1"/><path d="M479.3 286.8 L465.3 276.3" stroke="#c02424" stroke-width="1"/><path d="M588.2 273.9 L606.3 264.8" stroke="#c02424" stroke-width="1"/><path d="M429.3 278.0 L421.4 271.7" stroke="#ff3a3a" stroke-width="1"/><path d="M436.5 285.2 L421.3 275.6" stroke="#f83030" stroke-width="1"/><path d="M509.1 256.5 L508.6 244.2" stroke="#a82020" stroke-width="1"/><path d="M512.4 294.1 L499.8 285.0" stroke="#c02424" stroke-width="1"/><path d="M558.9 313.8 L567.0 322.2" stroke="#f83030" stroke-width="1"/><path d="M474.7 263.3 L467.4 246.4" stroke="#a82020" stroke-width="1"/><path d="M435.2 275.5 L419.9 260.4" stroke="#ff3a3a" stroke-width="1"/><path d="M439.6 232.7 L438.2 222.2" stroke="#c02424" stroke-width="1"/><path d="M514.6 247.3 L516.9 233.2" stroke="#ff3a3a" stroke-width="1"/><path d="M528.6 231.1 L540.6 211.6" stroke="#ff3a3a" stroke-width="1"/><path d="M514.7 268.9 L510.9 248.2" stroke="#f03333" stroke-width="1"/><path d="M501.1 213.1 L506.0 202.0" stroke="#e03030" stroke-width="1"/><path d="M513.6 247.0 L518.3 224.6" stroke="#f83030" stroke-width="1"/><path d="M584.0 278.4 L598.3 269.6" stroke="#ff4444" stroke-width="1"/><path d="M462.1 272.0 L455.3 263.5" stroke="#c02424" stroke-width="1"/><path d="M485.3 254.9 L481.9 236.4" stroke="#a82020" stroke-width="1"/><path d="M478.2 316.2 L459.1 316.5" stroke="#e03030" stroke-width="1"/><path d="M442.9 245.4 L438.5 229.1" stroke="#a82020" stroke-width="1"/><path d="M508.8 253.4 L509.9 231.8" stroke="#e03030" stroke-width="1"/><path d="M567.5 241.0 L584.9 228.1" stroke="#a82020" stroke-width="1"/><path d="M495.1 251.5 L494.1 236.1" stroke="#f83030" stroke-width="1"/><path d="M525.1 205.7 L533.5 194.3" stroke="#c02424" stroke-width="1"/><path d="M428.2 264.1 L421.3 254.7" stroke="#a82020" stroke-width="1"/><path d="M518.4 243.2 L524.8 222.4" stroke="#f03333" stroke-width="1"/><path d="M518.9 337.2 L503.2 345.7" stroke="#ff4444" stroke-width="1"/><path d="M436.2 247.5 L429.6 226.0" stroke="#ff3a3a" stroke-width="1"/><path d="M525.6 217.4 L539.2 198.7" stroke="#a82020" stroke-width="1"/><path d="M524.9 339.9 L507.8 352.1" stroke="#f83030" stroke-width="1"/><path d="M444.6 241.1 L440.7 220.4" stroke="#ff3a3a" stroke-width="1"/><path d="M584.2 256.1 L598.8 248.1" stroke="#ff4444" stroke-width="1"/><path d="M463.8 247.4 L460.8 233.0" stroke="#f03333" stroke-width="1"/><path d="M558.5 307.6 L556.3 291.2" stroke="#ff3a3a" stroke-width="1"/><path d="M507.1 301.8 L494.0 297.5" stroke="#f83030" stroke-width="1"/><path d="M550.1 247.8 L560.4 233.6" stroke="#f03333" stroke-width="1"/><path d="M561.8 320.6 L565.1 330.7" stroke="#a82020" stroke-width="1"/><path d="M551.2 249.6 L559.6 237.6" stroke="#f03333" stroke-width="1"/><path d="M489.7 307.3 L467.3 304.8" stroke="#c02424" stroke-width="1"/><path d="M569.9 225.0 L582.1 217.4" stroke="#e03030" stroke-width="1"/><path d="M565.4 266.2 L581.6 248.8" stroke="#f03333" stroke-width="1"/><path d="M560.0 216.5 L572.6 207.5" stroke="#ff3a3a" stroke-width="1"/><path d="M546.5 284.0 L547.6 260.8" stroke="#ff4444" stroke-width="1"/><path d="M446.9 256.1 L439.0 237.4" stroke="#f83030" stroke-width="1"/><path d="M557.3 316.9 L575.4 304.3" stroke="#c02424" stroke-width="1"/><path d="M494.6 257.1 L491.7 236.7" stroke="#e03030" stroke-width="1"/><path d="M499.1 262.9 L494.9 244.7" stroke="#ff4444" stroke-width="1"/><path d="M509.3 320.9 L495.2 322.5" stroke="#f83030" stroke-width="1"/><path d="M474.1 245.1 L472.3 227.9" stroke="#f83030" stroke-width="1"/><path d="M572.2 304.4 L585.7 294.2" stroke="#f83030" stroke-width="1"/><path d="M532.1 280.5 L527.7 259.2" stroke="#f83030" stroke-width="1"/><path d="M553.7 312.7 L540.2 307.8" stroke="#c02424" stroke-width="1"/><path d="M563.4 236.6 L579.5 223.8" stroke="#ff3a3a" stroke-width="1"/><path d="M565.9 261.1 L572.6 253.5" stroke="#e03030" stroke-width="1"/><path d="M554.7 322.2 L544.0 336.7" stroke="#ff3a3a" stroke-width="1"/><path d="M546.4 282.0 L547.3 263.7" stroke="#e03030" stroke-width="1"/><path d="M481.0 254.2 L477.1 233.8" stroke="#ff3a3a" stroke-width="1"/><path d="M462.5 223.6 L464.6 204.3" stroke="#ff4444" stroke-width="1"/><path d="M427.0 283.0 L414.4 274.8" stroke="#e03030" stroke-width="1"/><path d="M494.0 281.5 L482.8 268.1" stroke="#f03333" stroke-width="1"/><path d="M536.1 344.7 L529.3 353.1" stroke="#e03030" stroke-width="1"/><path d="M507.0 247.5 L508.2 233.2" stroke="#ff3a3a" stroke-width="1"/><path d="M437.3 241.0 L432.9 220.6" stroke="#e03030" stroke-width="1"/><path d="M546.1 272.8 L549.0 258.8" stroke="#ff4444" stroke-width="1"/><path d="M531.0 320.1 L515.1 322.9" stroke="#ff3a3a" stroke-width="1"/><path d="M487.5 236.5 L488.8 222.1" stroke="#a82020" stroke-width="1"/><path d="M552.9 271.0 L557.6 259.0" stroke="#c02424" stroke-width="1"/><path d="M459.2 226.4 L459.9 212.0" stroke="#f03333" stroke-width="1"/><path d="M503.8 334.2 L485.6 340.4" stroke="#a82020" stroke-width="1"/><path d="M472.6 218.6 L475.4 205.0" stroke="#e03030" stroke-width="1"/><path d="M497.2 232.7 L502.2 212.0" stroke="#a82020" stroke-width="1"/><path d="M480.4 252.7 L476.9 232.2" stroke="#ff3a3a" stroke-width="1"/><path d="M440.5 266.7 L432.1 255.2" stroke="#c02424" stroke-width="1"/><path d="M550.5 265.1 L555.9 252.8" stroke="#ff3a3a" stroke-width="1"/><path d="M529.0 264.6 L530.4 246.2" stroke="#a82020" stroke-width="1"/><path d="M552.0 309.5 L536.4 298.7" stroke="#f83030" stroke-width="1"/><path d="M461.2 232.4 L461.3 211.6" stroke="#ff4444" stroke-width="1"/><path d="M547.8 220.3 L563.8 205.6" stroke="#ff4444" stroke-width="1"/><path d="M494.4 306.5 L472.3 303.6" stroke="#c02424" stroke-width="1"/><path d="M502.8 231.0 L509.8 209.1" stroke="#e03030" stroke-width="1"/><path d="M547.5 313.0 L536.7 311.3" stroke="#ff4444" stroke-width="1"/><path d="M517.3 283.5 L508.0 268.1" stroke="#f03333" stroke-width="1"/><path d="M462.6 257.6 L456.1 240.7" stroke="#e03030" stroke-width="1"/><path d="M522.2 216.5 L534.6 198.4" stroke="#f03333" stroke-width="1"/><path d="M554.6 326.1 L545.7 344.6" stroke="#c02424" stroke-width="1"/><path d="M546.0 309.0 L536.3 304.9" stroke="#a82020" stroke-width="1"/><path d="M556.8 259.0 L564.7 247.4" stroke="#f83030" stroke-width="1"/><path d="M487.3 216.3 L493.0 198.7" stroke="#e03030" stroke-width="1"/><path d="M489.8 212.2 L496.2 194.9" stroke="#c02424" stroke-width="1"/><path d="M508.1 314.5 L494.9 314.4" stroke="#ff3a3a" stroke-width="1"/><path d="M528.8 265.3 L529.0 254.9" stroke="#c02424" stroke-width="1"/><path d="M578.2 310.9 L592.4 307.6" stroke="#ff3a3a" stroke-width="1"/><path d="M457.8 298.2 L435.2 291.2" stroke="#c02424" stroke-width="1"/><path d="M437.0 254.9 L432.3 245.4" stroke="#a82020" stroke-width="1"/><path d="M453.8 290.4 L441.2 284.1" stroke="#e03030" stroke-width="1"/><path d="M569.8 266.7 L579.0 257.2" stroke="#c02424" stroke-width="1"/><path d="M519.2 247.2 L524.7 226.2" stroke="#a82020" stroke-width="1"/><path d="M445.5 248.3 L441.5 235.8" stroke="#f03333" stroke-width="1"/><path d="M568.7 291.2 L578.2 278.4" stroke="#ff3a3a" stroke-width="1"/><path d="M552.8 268.0 L557.3 257.7" stroke="#ff3a3a" stroke-width="1"/><path d="M476.8 262.6 L469.0 241.9" stroke="#ff3a3a" stroke-width="1"/><path d="M535.9 204.5 L545.6 193.6" stroke="#e03030" stroke-width="1"/><path d="M563.5 304.9 L568.0 293.9" stroke="#ff4444" stroke-width="1"/><path d="M586.1 264.8 L602.5 256.0" stroke="#f03333" stroke-width="1"/><path d="M493.8 307.5 L478.2 305.7" stroke="#e03030" stroke-width="1"/><path d="M511.8 261.1 L510.7 238.6" stroke="#ff3a3a" stroke-width="1"/><path d="M479.0 293.4 L461.4 284.4" stroke="#f03333" stroke-width="1"/><path d="M514.5 246.7 L518.7 226.5" stroke="#a82020" stroke-width="1"/><path d="M579.2 268.9 L598.6 256.0" stroke="#f83030" stroke-width="1"/><path d="M496.0 211.5 L500.0 201.4" stroke="#f03333" stroke-width="1"/><path d="M461.8 227.2 L462.8 209.7" stroke="#c02424" stroke-width="1"/><path d="M493.7 304.2 L475.2 300.7" stroke="#e03030" stroke-width="1"/><path d="M506.9 295.1 L496.2 288.7" stroke="#e03030" stroke-width="1"/><path d="M501.1 287.8 L486.5 274.1" stroke="#a82020" stroke-width="1"/><path d="M535.4 295.8 L527.4 286.6" stroke="#a82020" stroke-width="1"/><path d="M553.7 241.6 L560.9 233.0" stroke="#e03030" stroke-width="1"/><path d="M523.6 228.2 L534.4 209.6" stroke="#f03333" stroke-width="1"/><path d="M545.0 231.9 L553.6 221.4" stroke="#ff4444" stroke-width="1"/><path d="M524.3 316.7 L514.0 317.2" stroke="#f03333" stroke-width="1"/><path d="M486.3 206.4 L494.7 184.2" stroke="#ff4444" stroke-width="1"/><path d="M519.5 211.1 L526.1 200.7" stroke="#a82020" stroke-width="1"/><path d="M482.8 290.6 L472.9 284.6" stroke="#f83030" stroke-width="1"/><path d="M464.4 254.1 L461.1 244.5" stroke="#a82020" stroke-width="1"/><path d="M536.1 279.2 L534.0 258.4" stroke="#f03333" stroke-width="1"/><path d="M557.1 240.9 L564.6 232.9" stroke="#e03030" stroke-width="1"/><path d="M517.6 276.6 L512.9 264.6" stroke="#e03030" stroke-width="1"/><path d="M494.0 297.0 L477.3 289.5" stroke="#f03333" stroke-width="1"/><path d="M561.5 262.7 L572.8 248.7" stroke="#f83030" stroke-width="1"/><path d="M475.1 211.0 L480.6 191.0" stroke="#c02424" stroke-width="1"/><path d="M507.6 263.1 L504.8 246.8" stroke="#ff4444" stroke-width="1"/><path d="M461.8 222.0 L465.1 198.3" stroke="#f83030" stroke-width="1"/><path d="M466.4 226.9 L467.8 210.3" stroke="#f03333" stroke-width="1"/><path d="M560.1 315.0 L545.3 319.0" stroke="#f83030" stroke-width="1"/><path d="M523.4 326.1 L503.3 332.2" stroke="#a82020" stroke-width="1"/><path d="M526.6 342.9 L512.0 355.1" stroke="#f03333" stroke-width="1"/><path d="M576.2 320.1 L596.5 326.5" stroke="#ff3a3a" stroke-width="1"/><path d="M461.6 291.1 L441.2 280.2" stroke="#f03333" stroke-width="1"/><path d="M513.7 265.3 L511.2 247.6" stroke="#c02424" stroke-width="1"/><path d="M547.9 259.9 L553.0 248.8" stroke="#ff3a3a" stroke-width="1"/><path d="M513.2 203.0 L519.0 193.3" stroke="#f03333" stroke-width="1"/><path d="M521.4 251.1 L524.9 234.2" stroke="#ff3a3a" stroke-width="1"/><path d="M427.5 275.2 L416.2 264.8" stroke="#ff3a3a" stroke-width="1"/><path d="M526.6 288.1 L516.7 271.8" stroke="#ff3a3a" stroke-width="1"/><path d="M444.9 279.6 L431.0 267.6" stroke="#a82020" stroke-width="1"/><path d="M441.3 265.7 L430.6 249.7" stroke="#c02424" stroke-width="1"/><path d="M498.9 326.4 L488.9 328.3" stroke="#f83030" stroke-width="1"/><path d="M524.9 311.8 L507.9 310.2" stroke="#a82020" stroke-width="1"/><path d="M484.9 288.0 L469.7 276.4" stroke="#f03333" stroke-width="1"/><path d="M467.6 210.8 L471.6 192.6" stroke="#ff3a3a" stroke-width="1"/><path d="M461.7 266.0 L455.8 256.3" stroke="#f83030" stroke-width="1"/><path d="M536.7 278.6 L535.1 264.9" stroke="#e03030" stroke-width="1"/><path d="M512.1 251.1 L514.0 232.7" stroke="#e03030" stroke-width="1"/><path d="M512.1 273.3 L508.1 263.0" stroke="#ff3a3a" stroke-width="1"/><path d="M477.5 215.2 L480.7 202.6" stroke="#ff4444" stroke-width="1"/><path d="M461.1 293.6 L444.1 286.2" stroke="#f83030" stroke-width="1"/><path d="M533.0 341.9 L518.5 356.4" stroke="#ff3a3a" stroke-width="1"/><path d="M573.7 241.2 L590.6 230.4" stroke="#ff3a3a" stroke-width="1"/><path d="M495.4 257.3 L492.3 234.8" stroke="#a82020" stroke-width="1"/><path d="M535.0 259.6 L541.4 237.3" stroke="#ff4444" stroke-width="1"/><path d="M515.1 308.0 L494.4 304.7" stroke="#a82020" stroke-width="1"/><path d="M484.3 315.0 L473.0 315.0" stroke="#ff4444" stroke-width="1"/><path d="M555.6 339.5 L552.1 358.4" stroke="#ff4444" stroke-width="1"/><path d="M512.5 208.3 L524.9 187.9" stroke="#a82020" stroke-width="1"/><path d="M571.4 285.3 L581.2 274.2" stroke="#c02424" stroke-width="1"/><path d="M570.1 227.8 L582.4 219.9" stroke="#a82020" stroke-width="1"/><path d="M514.6 241.6 L518.2 227.2" stroke="#ff3a3a" stroke-width="1"/><path d="M485.8 277.0 L473.3 259.4" stroke="#e03030" stroke-width="1"/><path d="M467.6 299.5 L457.1 296.6" stroke="#ff3a3a" stroke-width="1"/><path d="M543.8 275.1 L546.1 257.9" stroke="#f83030" stroke-width="1"/><path d="M487.8 249.1 L486.6 226.3" stroke="#c02424" stroke-width="1"/><path d="M477.1 205.3 L480.3 194.5" stroke="#f03333" stroke-width="1"/><path d="M530.2 342.3 L513.7 357.4" stroke="#f83030" stroke-width="1"/><path d="M546.4 279.6 L547.9 263.5" stroke="#f83030" stroke-width="1"/><path d="M553.9 342.0 L550.8 355.6" stroke="#ff4444" stroke-width="1"/><path d="M513.5 318.4 L503.2 319.1" stroke="#f83030" stroke-width="1"/><path d="M553.0 232.0 L566.4 219.0" stroke="#f83030" stroke-width="1"/><path d="M467.8 233.4 L468.3 214.2" stroke="#c02424" stroke-width="1"/><path d="M559.8 301.5 L560.9 290.5" stroke="#f83030" stroke-width="1"/><path d="M522.0 284.9 L514.3 272.0" stroke="#f03333" stroke-width="1"/><path d="M442.5 257.6 L434.2 240.4" stroke="#c02424" stroke-width="1"/><path d="M492.1 243.6 L493.2 222.9" stroke="#f03333" stroke-width="1"/><path d="M544.0 256.9 L550.4 242.7" stroke="#f83030" stroke-width="1"/><path d="M487.2 232.2 L490.5 212.3" stroke="#ff3a3a" stroke-width="1"/><path d="M545.8 237.9 L554.6 226.3" stroke="#f03333" stroke-width="1"/><path d="M585.2 293.2 L596.7 286.9" stroke="#a82020" stroke-width="1"/><path d="M527.6 322.9 L513.3 326.4" stroke="#c02424" stroke-width="1"/><path d="M548.0 286.0 L548.9 263.3" stroke="#f03333" stroke-width="1"/><path d="M522.1 215.3 L530.0 203.3" stroke="#e03030" stroke-width="1"/><path d="M527.4 306.1 L516.4 303.1" stroke="#ff3a3a" stroke-width="1"/><path d="M473.8 263.5 L469.0 253.7" stroke="#ff3a3a" stroke-width="1"/><path d="M555.5 262.3 L564.8 247.5" stroke="#f03333" stroke-width="1"/><path d="M560.3 328.5 L560.6 342.1" stroke="#e03030" stroke-width="1"/><path d="M549.9 329.3 L537.0 347.4" stroke="#a82020" stroke-width="1"/><path d="M551.7 332.5 L541.8 353.3" stroke="#ff3a3a" stroke-width="1"/><path d="M520.2 312.8 L507.2 312.1" stroke="#ff4444" stroke-width="1"/><path d="M533.6 251.2 L541.9 230.3" stroke="#e03030" stroke-width="1"/><path d="M524.0 269.3 L522.4 250.1" stroke="#a82020" stroke-width="1"/><path d="M483.1 309.2 L466.6 308.0" stroke="#ff4444" stroke-width="1"/><path d="M560.4 315.1 L540.8 311.5" stroke="#ff3a3a" stroke-width="1"/><path d="M580.2 243.0 L594.1 235.2" stroke="#ff3a3a" stroke-width="1"/><path d="M530.0 294.7 L519.6 283.8" stroke="#ff4444" stroke-width="1"/><path d="M516.7 323.9 L506.1 326.1" stroke="#c02424" stroke-width="1"/><path d="M527.2 343.2 L513.6 354.8" stroke="#a82020" stroke-width="1"/><path d="M590.7 278.9 L604.4 272.3" stroke="#ff3a3a" stroke-width="1"/><path d="M567.0 259.3 L576.3 249.7" stroke="#f03333" stroke-width="1"/><path d="M463.0 276.4 L455.1 268.2" stroke="#ff4444" stroke-width="1"/><path d="M561.8 306.1 L565.5 292.1" stroke="#f03333" stroke-width="1"/><path d="M572.8 308.0 L587.4 299.9" stroke="#e03030" stroke-width="1"/><path d="M517.6 289.1 L505.2 274.6" stroke="#c02424" stroke-width="1"/><path d="M563.4 243.1 L578.2 230.2" stroke="#ff3a3a" stroke-width="1"/><path d="M471.5 272.0 L461.8 258.1" stroke="#c02424" stroke-width="1"/><path d="M548.7 315.0 L533.2 315.0" stroke="#e03030" stroke-width="1"/><path d="M503.0 205.3 L509.8 191.7" stroke="#f83030" stroke-width="1"/><path d="M532.9 312.9 L514.6 311.5" stroke="#f83030" stroke-width="1"/><path d="M547.2 298.6 L542.1 289.4" stroke="#ff4444" stroke-width="1"/><path d="M585.9 267.6 L598.3 260.5" stroke="#e03030" stroke-width="1"/><path d="M437.2 241.8 L433.5 226.7" stroke="#f83030" stroke-width="1"/><path d="M541.8 318.4 L525.3 321.5" stroke="#ff3a3a" stroke-width="1"/><path d="M453.7 289.0 L433.6 277.2" stroke="#ff4444" stroke-width="1"/><path d="M491.4 250.4 L490.3 227.7" stroke="#f03333" stroke-width="1"/><path d="M527.8 252.0 L534.9 229.1" stroke="#ff4444" stroke-width="1"/><path d="M511.3 266.1 L508.8 253.8" stroke="#ff4444" stroke-width="1"/><path d="M505.1 270.5 L499.8 256.2" stroke="#f03333" stroke-width="1"/><path d="M555.9 332.7 L551.7 350.7" stroke="#ff4444" stroke-width="1"/><path d="M442.7 254.1 L437.9 243.1" stroke="#f03333" stroke-width="1"/><path d="M469.6 264.9 L462.3 250.8" stroke="#f03333" stroke-width="1"/><path d="M542.6 281.1 L541.9 266.6" stroke="#a82020" stroke-width="1"/><path d="M550.6 294.5 L548.2 282.4" stroke="#c02424" stroke-width="1"/><path d="M540.3 213.9 L549.5 204.0" stroke="#c02424" stroke-width="1"/><path d="M465.8 219.3 L469.9 196.2" stroke="#e03030" stroke-width="1"/><path d="M580.0 265.0 L589.2 258.5" stroke="#ff4444" stroke-width="1"/><path d="M534.2 266.6 L535.0 256.3" stroke="#e03030" stroke-width="1"/><path d="M575.5 308.9 L587.1 304.3" stroke="#f03333" stroke-width="1"/><path d="M551.6 220.8 L566.1 208.3" stroke="#c02424" stroke-width="1"/><path d="M460.7 254.5 L455.2 238.4" stroke="#c02424" stroke-width="1"/><path d="M444.2 245.7 L438.7 223.8" stroke="#c02424" stroke-width="1"/><path d="M524.5 301.3 L504.6 290.8" stroke="#c02424" stroke-width="1"/><path d="M574.3 262.3 L586.6 252.3" stroke="#c02424" stroke-width="1"/><path d="M504.8 264.1 L501.0 244.9" stroke="#f03333" stroke-width="1"/><path d="M472.4 215.3 L474.5 205.3" stroke="#ff4444" stroke-width="1"/><path d="M585.5 258.2 L600.0 250.4" stroke="#e03030" stroke-width="1"/><path d="M518.1 243.0 L522.5 227.6" stroke="#f03333" stroke-width="1"/><path d="M458.2 266.3 L451.8 256.3" stroke="#f83030" stroke-width="1"/><path d="M521.9 344.1 L509.9 353.3" stroke="#f83030" stroke-width="1"/><path d="M462.4 283.4 L444.0 268.0" stroke="#f83030" stroke-width="1"/><path d="M523.1 318.0 L512.6 318.9" stroke="#f03333" stroke-width="1"/><path d="M557.5 238.2 L571.4 225.1" stroke="#ff4444" stroke-width="1"/><path d="M437.1 242.9 L432.7 225.4" stroke="#e03030" stroke-width="1"/><path d="M483.0 219.9 L488.7 199.7" stroke="#ff4444" stroke-width="1"/><path d="M515.4 207.3 L525.5 191.2" stroke="#f83030" stroke-width="1"/><path d="M516.2 337.3 L497.6 346.7" stroke="#e03030" stroke-width="1"/><path d="M513.7 236.1 L517.8 223.2" stroke="#a82020" stroke-width="1"/><path d="M562.5 304.3 L569.3 286.2" stroke="#a82020" stroke-width="1"/><path d="M477.9 260.5 L474.2 251.0" stroke="#c02424" stroke-width="1"/><path d="M581.7 293.6 L600.5 282.6" stroke="#ff3a3a" stroke-width="1"/><path d="M509.9 275.7 L504.2 263.8" stroke="#e03030" stroke-width="1"/><path d="M570.0 236.8 L580.9 229.1" stroke="#ff3a3a" stroke-width="1"/><path d="M569.1 324.1 L585.7 340.8" stroke="#f03333" stroke-width="1"/><path d="M489.8 284.3 L479.0 274.0" stroke="#e03030" stroke-width="1"/><path d="M461.2 305.5 L447.6 304.2" stroke="#ff3a3a" stroke-width="1"/><path d="M548.9 262.2 L554.5 249.6" stroke="#ff3a3a" stroke-width="1"/><path d="M457.9 233.0 L457.3 219.3" stroke="#a82020" stroke-width="1"/><path d="M541.6 246.8 L550.0 232.0" stroke="#f03333" stroke-width="1"/><path d="M544.5 345.4 L536.3 361.3" stroke="#ff3a3a" stroke-width="1"/><path d="M508.3 206.1 L516.0 192.1" stroke="#e03030" stroke-width="1"/><path d="M500.7 244.9 L502.9 223.8" stroke="#a82020" stroke-width="1"/><path d="M490.4 283.2 L481.8 274.6" stroke="#a82020" stroke-width="1"/><path d="M487.2 212.0 L494.2 192.1" stroke="#f03333" stroke-width="1"/><path d="M452.7 230.2 L452.3 213.6" stroke="#ff4444" stroke-width="1"/><path d="M540.0 306.6 L523.3 299.5" stroke="#ff3a3a" stroke-width="1"/><path d="M538.4 235.2 L550.1 218.4" stroke="#c02424" stroke-width="1"/><path d="M509.0 268.6 L504.1 249.1" stroke="#f03333" stroke-width="1"/><path d="M473.7 278.5 L460.3 263.5" stroke="#ff4444" stroke-width="1"/><path d="M447.4 229.5 L446.7 216.6" stroke="#e03030" stroke-width="1"/><path d="M590.2 276.3 L600.8 271.0" stroke="#ff3a3a" stroke-width="1"/><path d="M526.4 344.0 L510.0 358.1" stroke="#f83030" stroke-width="1"/><path d="M477.6 220.8 L482.6 200.1" stroke="#ff4444" stroke-width="1"/><path d="M572.1 301.2 L580.3 293.6" stroke="#ff3a3a" stroke-width="1"/><path d="M494.3 312.6 L481.9 312.2" stroke="#f83030" stroke-width="1"/><path d="M550.5 241.2 L558.4 231.2" stroke="#ff3a3a" stroke-width="1"/><path d="M522.5 214.6 L535.1 196.4" stroke="#f83030" stroke-width="1"/><path d="M494.7 224.6 L501.0 204.8" stroke="#ff3a3a" stroke-width="1"/><path d="M471.9 227.4 L473.6 211.3" stroke="#ff3a3a" stroke-width="1"/><path d="M512.2 342.1 L500.8 348.6" stroke="#e03030" stroke-width="1"/><path d="M557.3 216.3 L570.0 206.8" stroke="#f83030" stroke-width="1"/><path d="M581.5 244.8 L597.9 236.0" stroke="#ff3a3a" stroke-width="1"/><path d="M513.2 259.7 L513.0 236.8" stroke="#f03333" stroke-width="1"/><path d="M588.4 298.4 L609.6 290.1" stroke="#f03333" stroke-width="1"/><path d="M574.5 304.9 L583.3 299.2" stroke="#f83030" stroke-width="1"/><path d="M573.6 309.1 L592.6 300.9" stroke="#ff4444" stroke-width="1"/><path d="M480.5 277.7 L468.1 262.3" stroke="#f83030" stroke-width="1"/><path d="M530.2 276.9 L527.5 263.1" stroke="#a82020" stroke-width="1"/><path d="M478.5 230.5 L481.0 210.9" stroke="#e03030" stroke-width="1"/><path d="M548.1 324.3 L531.1 337.6" stroke="#f03333" stroke-width="1"/><path d="M519.7 326.2 L499.2 331.9" stroke="#f83030" stroke-width="1"/><path d="M497.7 302.5 L484.7 299.2" stroke="#c02424" stroke-width="1"/><path d="M548.5 308.1 L531.0 297.7" stroke="#f83030" stroke-width="1"/><path d="M555.3 250.4 L570.5 232.6" stroke="#c02424" stroke-width="1"/><path d="M535.6 214.3 L545.7 202.5" stroke="#f03333" stroke-width="1"/><path d="M506.7 251.4 L507.0 238.7" stroke="#ff4444" stroke-width="1"/><path d="M568.4 320.6 L580.7 328.8" stroke="#f03333" stroke-width="1"/><path d="M568.1 292.2 L581.2 275.3" stroke="#f83030" stroke-width="1"/><path d="M558.7 333.6 L557.7 348.0" stroke="#f03333" stroke-width="1"/><path d="M497.1 207.4 L505.2 189.6" stroke="#f83030" stroke-width="1"/><path d="M551.4 232.1 L558.3 224.6" stroke="#a82020" stroke-width="1"/><path d="M512.2 295.0 L503.3 289.3" stroke="#e03030" stroke-width="1"/><path d="M523.5 321.6 L501.5 325.6" stroke="#e03030" stroke-width="1"/><path d="M479.9 304.9 L457.0 301.6" stroke="#ff3a3a" stroke-width="1"/><path d="M554.1 253.3 L565.4 238.1" stroke="#c02424" stroke-width="1"/><path d="M510.0 243.2 L515.0 220.9" stroke="#a82020" stroke-width="1"/><path d="M585.1 303.3 L596.6 298.7" stroke="#f03333" stroke-width="1"/><path d="M525.1 244.3 L531.7 226.3" stroke="#ff4444" stroke-width="1"/><path d="M468.8 295.9 L456.3 291.2" stroke="#f83030" stroke-width="1"/><path d="M554.8 216.5 L564.1 208.9" stroke="#f83030" stroke-width="1"/><path d="M550.7 238.9 L566.0 222.0" stroke="#a82020" stroke-width="1"/><path d="M551.3 236.4 L562.3 224.3" stroke="#e03030" stroke-width="1"/><path d="M456.6 290.3 L438.6 280.5" stroke="#a82020" stroke-width="1"/><path d="M525.4 322.7 L512.3 325.7" stroke="#ff3a3a" stroke-width="1"/><path d="M566.8 323.9 L580.7 341.8" stroke="#ff3a3a" stroke-width="1"/><path d="M516.3 299.9 L506.4 295.4" stroke="#f83030" stroke-width="1"/><path d="M582.0 303.9 L599.4 296.4" stroke="#e03030" stroke-width="1"/><path d="M534.9 204.4 L544.4 193.7" stroke="#f83030" stroke-width="1"/><path d="M557.6 239.5 L567.8 229.3" stroke="#e03030" stroke-width="1"/><path d="M503.5 238.0 L508.5 216.3" stroke="#c02424" stroke-width="1"/><path d="M563.2 249.3 L581.0 233.2" stroke="#c02424" stroke-width="1"/><path d="M562.5 302.8 L565.5 293.0" stroke="#f83030" stroke-width="1"/><path d="M521.0 314.2 L503.4 313.8" stroke="#f83030" stroke-width="1"/><path d="M500.2 256.5 L498.4 233.8" stroke="#ff3a3a" stroke-width="1"/><path d="M448.4 293.0 L438.8 289.1" stroke="#f03333" stroke-width="1"/><path d="M490.2 290.6 L475.8 280.9" stroke="#a82020" stroke-width="1"/><path d="M436.8 272.7 L428.8 264.5" stroke="#a82020" stroke-width="1"/><path d="M505.6 207.1 L511.6 195.5" stroke="#f83030" stroke-width="1"/><path d="M466.1 299.2 L447.0 293.7" stroke="#ff4444" stroke-width="1"/><path d="M528.8 319.4 L514.3 321.4" stroke="#f83030" stroke-width="1"/><path d="M566.7 271.8 L580.2 256.3" stroke="#ff3a3a" stroke-width="1"/><path d="M494.6 256.9 L491.6 233.7" stroke="#a82020" stroke-width="1"/><path d="M438.7 253.1 L433.7 241.6" stroke="#f83030" stroke-width="1"/><path d="M440.4 260.2 L430.0 240.6" stroke="#e03030" stroke-width="1"/><path d="M531.9 287.9 L524.2 272.7" stroke="#c02424" stroke-width="1"/><path d="M549.8 225.4 L564.3 211.6" stroke="#f03333" stroke-width="1"/><path d="M429.1 275.3 L416.1 263.1" stroke="#f03333" stroke-width="1"/><path d="M546.2 320.4 L536.5 324.2" stroke="#f03333" stroke-width="1"/><path d="M475.3 256.0 L471.3 242.7" stroke="#ff4444" stroke-width="1"/><path d="M527.2 338.7 L518.5 345.0" stroke="#a82020" stroke-width="1"/><path d="M559.0 284.3 L566.7 265.8" stroke="#f83030" stroke-width="1"/><path d="M521.2 221.5 L527.9 210.1" stroke="#a82020" stroke-width="1"/><path d="M545.7 329.1 L529.5 344.9" stroke="#f03333" stroke-width="1"/><path d="M581.1 268.5 L590.5 261.9" stroke="#ff4444" stroke-width="1"/><path d="M491.1 213.7 L495.8 200.7" stroke="#a82020" stroke-width="1"/><path d="M510.0 282.8 L497.8 264.3" stroke="#a82020" stroke-width="1"/><path d="M575.6 309.8 L594.1 303.7" stroke="#f03333" stroke-width="1"/><path d="M498.4 308.2 L485.4 306.7" stroke="#c02424" stroke-width="1"/><path d="M514.9 313.7 L502.6 313.3" stroke="#ff4444" stroke-width="1"/><path d="M483.3 290.4 L468.0 280.5" stroke="#ff3a3a" stroke-width="1"/><path d="M475.8 279.6 L464.3 267.5" stroke="#ff4444" stroke-width="1"/><path d="M515.5 218.7 L523.7 204.2" stroke="#e03030" stroke-width="1"/><path d="M475.9 286.8 L461.2 275.9" stroke="#f03333" stroke-width="1"/><path d="M470.7 280.1 L460.0 269.7" stroke="#ff4444" stroke-width="1"/><path d="M562.2 270.0 L570.6 257.6" stroke="#ff4444" stroke-width="1"/><path d="M544.6 225.1 L555.8 212.9" stroke="#a82020" stroke-width="1"/><path d="M507.0 279.8 L496.0 260.9" stroke="#f83030" stroke-width="1"/><path d="M453.1 288.5 L435.8 278.4" stroke="#f83030" stroke-width="1"/><path d="M467.1 308.5 L452.9 307.6" stroke="#c02424" stroke-width="1"/><path d="M465.9 222.1 L467.0 212.1" stroke="#f83030" stroke-width="1"/><path d="M549.1 315.8 L527.2 317.3" stroke="#a82020" stroke-width="1"/><path d="M527.5 346.5 L518.8 355.0" stroke="#c02424" stroke-width="1"/><path d="M482.5 298.3 L471.6 294.5" stroke="#a82020" stroke-width="1"/><path d="M573.4 271.3 L589.6 257.4" stroke="#ff4444" stroke-width="1"/><path d="M462.1 282.7 L445.0 268.1" stroke="#e03030" stroke-width="1"/><path d="M437.5 258.7 L430.5 246.0" stroke="#ff4444" stroke-width="1"/><path d="M547.8 307.5 L532.1 297.7" stroke="#c02424" stroke-width="1"/><path d="M518.7 240.5 L523.3 226.1" stroke="#ff4444" stroke-width="1"/><path d="M576.9 309.1 L594.7 302.9" stroke="#ff3a3a" stroke-width="1"/><path d="M508.2 322.7 L486.9 325.9" stroke="#f03333" stroke-width="1"/><path d="M558.3 261.0 L564.5 251.8" stroke="#f03333" stroke-width="1"/><path d="M580.2 305.4 L591.2 300.4" stroke="#f03333" stroke-width="1"/><path d="M524.4 328.9 L513.5 333.2" stroke="#f83030" stroke-width="1"/><path d="M533.7 265.8 L534.8 253.8" stroke="#c02424" stroke-width="1"/><path d="M533.1 272.3 L533.5 249.4" stroke="#ff4444" stroke-width="1"/><path d="M519.8 268.1 L517.7 251.3" stroke="#f83030" stroke-width="1"/><path d="M495.7 296.4 L475.8 286.5" stroke="#a82020" stroke-width="1"/><path d="M527.4 304.7 L514.0 300.1" stroke="#ff3a3a" stroke-width="1"/><path d="M540.3 289.8 L536.4 280.3" stroke="#f83030" stroke-width="1"/><path d="M497.8 250.3 L497.4 233.8" stroke="#ff3a3a" stroke-width="1"/><path d="M543.1 331.1 L529.0 344.4" stroke="#f03333" stroke-width="1"/><path d="M463.5 298.6 L450.5 294.9" stroke="#f03333" stroke-width="1"/><path d="M500.0 282.9 L487.7 267.8" stroke="#f03333" stroke-width="1"/><path d="M553.8 337.7 L548.2 358.1" stroke="#f83030" stroke-width="1"/><path d="M509.0 262.3 L506.7 245.1" stroke="#f83030" stroke-width="1"/><path d="M570.2 239.4 L584.7 229.3" stroke="#c02424" stroke-width="1"/><path d="M566.4 284.3 L571.9 275.6" stroke="#f83030" stroke-width="1"/><path d="M488.2 320.5 L465.0 322.3" stroke="#a82020" stroke-width="1"/><path d="M580.0 301.1 L595.1 292.9" stroke="#ff4444" stroke-width="1"/><path d="M540.4 320.6 L521.5 326.0" stroke="#ff3a3a" stroke-width="1"/><path d="M430.2 280.5 L414.5 268.4" stroke="#ff3a3a" stroke-width="1"/><path d="M536.6 241.3 L546.6 224.1" stroke="#f03333" stroke-width="1"/><path d="M443.7 251.7 L438.1 236.9" stroke="#ff4444" stroke-width="1"/><path d="M586.5 257.7 L603.2 249.3" stroke="#e03030" stroke-width="1"/><path d="M538.2 261.9 L545.4 239.1" stroke="#f03333" stroke-width="1"/><path d="M526.6 211.9 L539.6 194.8" stroke="#c02424" stroke-width="1"/><path d="M490.6 240.4 L492.4 219.8" stroke="#e03030" stroke-width="1"/><path d="M523.9 236.8 L531.3 220.3" stroke="#c02424" stroke-width="1"/><path d="M469.3 284.4 L451.6 269.8" stroke="#ff3a3a" stroke-width="1"/><path d="M432.6 282.5 L423.8 276.6" stroke="#ff4444" stroke-width="1"/><path d="M511.5 221.1 L522.0 201.0" stroke="#c02424" stroke-width="1"/><path d="M438.4 275.8 L431.0 269.0" stroke="#c02424" stroke-width="1"/><path d="M514.6 255.2 L515.2 241.4" stroke="#ff3a3a" stroke-width="1"/><path d="M465.8 250.1 L461.1 228.2" stroke="#a82020" stroke-width="1"/><path d="M494.9 261.3 L490.8 244.9" stroke="#f83030" stroke-width="1"/><path d="M506.9 298.6 L494.5 293.0" stroke="#a82020" stroke-width="1"/><path d="M588.0 250.4 L602.5 243.6" stroke="#c02424" stroke-width="1"/><path d="M483.9 219.3 L487.6 205.9" stroke="#f83030" stroke-width="1"/><path d="M542.6 243.5 L555.6 224.2" stroke="#ff4444" stroke-width="1"/><path d="M529.6 278.8 L525.2 257.6" stroke="#a82020" stroke-width="1"/><path d="M503.0 266.8 L497.2 243.7" stroke="#c02424" stroke-width="1"/><path d="M501.0 201.9 L507.7 188.5" stroke="#a82020" stroke-width="1"/><path d="M485.0 306.4 L463.8 304.0" stroke="#ff3a3a" stroke-width="1"/><path d="M499.1 283.9 L491.4 275.8" stroke="#a82020" stroke-width="1"/><path d="M523.6 272.4 L520.8 256.2" stroke="#ff4444" stroke-width="1"/><path d="M527.7 264.9 L528.1 250.8" stroke="#a82020" stroke-width="1"/><path d="M543.6 266.0 L546.7 254.5" stroke="#a82020" stroke-width="1"/><path d="M510.4 217.0 L520.7 197.8" stroke="#e03030" stroke-width="1"/><path d="M498.5 306.4 L475.7 303.2" stroke="#ff4444" stroke-width="1"/><path d="M534.6 250.6 L539.4 237.8" stroke="#ff3a3a" stroke-width="1"/><path d="M528.8 349.6 L516.4 363.5" stroke="#a82020" stroke-width="1"/><path d="M559.5 302.2 L562.0 283.6" stroke="#ff4444" stroke-width="1"/><path d="M528.0 326.7 L512.4 332.4" stroke="#e03030" stroke-width="1"/><path d="M477.6 216.5 L480.8 203.6" stroke="#ff4444" stroke-width="1"/><path d="M449.6 286.2 L438.8 279.5" stroke="#e03030" stroke-width="1"/><path d="M551.5 329.8 L542.6 345.1" stroke="#ff4444" stroke-width="1"/><path d="M568.9 230.4 L588.0 218.3" stroke="#ff4444" stroke-width="1"/><path d="M467.9 281.8 L456.5 271.8" stroke="#c02424" stroke-width="1"/><path d="M426.7 280.8 L414.9 272.3" stroke="#e03030" stroke-width="1"/><path d="M546.4 250.3 L559.2 230.6" stroke="#f03333" stroke-width="1"/><path d="M466.4 280.3 L455.7 270.4" stroke="#c02424" stroke-width="1"/><path d="M464.5 266.2 L459.1 257.3" stroke="#f03333" stroke-width="1"/><path d="M464.3 293.5 L445.3 284.7" stroke="#f83030" stroke-width="1"/><path d="M488.1 230.2 L492.8 207.7" stroke="#f03333" stroke-width="1"/><path d="M434.3 261.6 L424.3 244.9" stroke="#e03030" stroke-width="1"/><path d="M528.7 310.7 L514.7 308.8" stroke="#f83030" stroke-width="1"/><path d="M520.8 284.8 L511.7 269.5" stroke="#f03333" stroke-width="1"/><path d="M443.0 275.2 L428.7 260.4" stroke="#f03333" stroke-width="1"/><path d="M473.4 224.5 L477.3 201.9" stroke="#f03333" stroke-width="1"/><path d="M476.9 217.6 L479.2 207.8" stroke="#ff3a3a" stroke-width="1"/><path d="M536.1 277.3 L534.7 263.5" stroke="#c02424" stroke-width="1"/><path d="M487.0 226.2 L490.1 211.7" stroke="#f83030" stroke-width="1"/><path d="M443.1 240.3 L440.9 230.3" stroke="#f03333" stroke-width="1"/><path d="M590.0 273.0 L601.7 267.1" stroke="#f03333" stroke-width="1"/><path d="M548.7 265.6 L557.9 245.2" stroke="#c02424" stroke-width="1"/><path d="M575.9 261.6 L588.2 252.2" stroke="#f83030" stroke-width="1"/><path d="M572.8 291.8 L586.9 278.0" stroke="#ff4444" stroke-width="1"/><path d="M565.3 319.6 L575.7 328.7" stroke="#f03333" stroke-width="1"/><path d="M525.7 281.8 L521.3 272.0" stroke="#ff4444" stroke-width="1"/><path d="M459.4 234.3 L458.7 222.1" stroke="#f83030" stroke-width="1"/><path d="M495.2 301.4 L473.4 294.8" stroke="#e03030" stroke-width="1"/><path d="M512.6 308.4 L500.5 306.7" stroke="#f03333" stroke-width="1"/><path d="M567.7 321.5 L576.7 329.1" stroke="#e03030" stroke-width="1"/><path d="M447.3 279.4 L433.9 267.7" stroke="#ff4444" stroke-width="1"/><path d="M503.5 241.1 L505.1 229.3" stroke="#a82020" stroke-width="1"/><path d="M589.2 281.8 L602.6 275.1" stroke="#a82020" stroke-width="1"/><path d="M560.3 312.7 L562.1 297.4" stroke="#e03030" stroke-width="1"/><path d="M497.0 284.7 L481.1 267.2" stroke="#a82020" stroke-width="1"/><path d="M589.6 303.0 L602.2 298.6" stroke="#ff3a3a" stroke-width="1"/><path d="M481.3 258.9 L477.9 248.5" stroke="#ff3a3a" stroke-width="1"/><path d="M519.1 210.3 L527.1 197.9" stroke="#ff3a3a" stroke-width="1"/><path d="M471.6 299.5 L455.1 294.7" stroke="#ff4444" stroke-width="1"/><path d="M515.5 309.7 L501.3 308.1" stroke="#e03030" stroke-width="1"/><path d="M535.8 271.0 L536.7 253.8" stroke="#f03333" stroke-width="1"/><path d="M459.0 253.8 L452.1 230.9" stroke="#f83030" stroke-width="1"/><path d="M490.2 256.5 L486.9 238.1" stroke="#ff3a3a" stroke-width="1"/><path d="M508.9 294.6 L499.9 289.0" stroke="#c02424" stroke-width="1"/><path d="M504.2 212.3 L511.7 196.9" stroke="#f03333" stroke-width="1"/><path d="M519.4 314.3 L505.8 314.0" stroke="#ff4444" stroke-width="1"/><path d="M577.2 318.7 L587.1 320.8" stroke="#f03333" stroke-width="1"/><path d="M496.2 259.5 L493.1 244.1" stroke="#c02424" stroke-width="1"/><path d="M475.2 205.7 L479.2 191.6" stroke="#e03030" stroke-width="1"/><path d="M483.3 240.2 L483.2 229.6" stroke="#ff4444" stroke-width="1"/><path d="M487.7 230.8 L489.5 218.7" stroke="#ff3a3a" stroke-width="1"/><path d="M547.3 293.5 L543.4 280.4" stroke="#f83030" stroke-width="1"/><path d="M559.9 316.1 L561.9 299.4" stroke="#f03333" stroke-width="1"/><path d="M573.8 320.9 L590.2 328.0" stroke="#ff4444" stroke-width="1"/><path d="M532.0 228.2 L538.4 218.1" stroke="#ff4444" stroke-width="1"/><path d="M547.8 289.7 L546.3 265.9" stroke="#f83030" stroke-width="1"/><path d="M576.2 300.0 L593.8 288.2" stroke="#ff3a3a" stroke-width="1"/><path d="M522.6 242.7 L526.6 230.2" stroke="#f83030" stroke-width="1"/><path d="M512.3 311.2 L490.8 309.4" stroke="#ff4444" stroke-width="1"/><path d="M498.2 242.1 L501.3 218.6" stroke="#ff4444" stroke-width="1"/><path d="M528.7 305.5 L511.9 300.2" stroke="#ff4444" stroke-width="1"/><path d="M553.7 230.4 L562.4 221.9" stroke="#a82020" stroke-width="1"/><path d="M514.3 306.2 L493.3 302.2" stroke="#ff3a3a" stroke-width="1"/><path d="M508.9 275.5 L504.2 266.0" stroke="#e03030" stroke-width="1"/><path d="M554.2 304.9 L546.9 288.2" stroke="#a82020" stroke-width="1"/><path d="M570.1 241.4 L588.3 228.8" stroke="#c02424" stroke-width="1"/><path d="M524.5 207.9 L534.8 193.8" stroke="#e03030" stroke-width="1"/><path d="M452.2 273.6 L442.4 262.6" stroke="#e03030" stroke-width="1"/><path d="M574.8 276.6 L589.3 264.0" stroke="#f03333" stroke-width="1"/><path d="M457.3 279.6 L443.2 266.5" stroke="#f03333" stroke-width="1"/><path d="M555.6 292.5 L556.4 280.9" stroke="#f83030" stroke-width="1"/><path d="M486.0 212.5 L491.5 196.1" stroke="#f03333" stroke-width="1"/><path d="M485.0 208.6 L490.8 191.9" stroke="#c02424" stroke-width="1"/><path d="M501.9 326.2 L482.3 330.0" stroke="#a82020" stroke-width="1"/><path d="M513.7 322.5 L494.4 325.6" stroke="#f83030" stroke-width="1"/><path d="M463.6 293.3 L450.6 287.5" stroke="#e03030" stroke-width="1"/><path d="M557.1 307.8 L551.0 289.7" stroke="#a82020" stroke-width="1"/><path d="M522.4 345.6 L507.5 357.7" stroke="#f83030" stroke-width="1"/><path d="M511.1 325.9 L501.1 328.2" stroke="#c02424" stroke-width="1"/><path d="M558.8 298.5 L559.7 288.1" stroke="#c02424" stroke-width="1"/><path d="M443.3 272.0 L428.4 253.9" stroke="#a82020" stroke-width="1"/><path d="M522.4 235.6 L529.0 220.4" stroke="#f83030" stroke-width="1"/><path d="M528.3 213.5 L538.5 200.1" stroke="#e03030" stroke-width="1"/><path d="M538.9 347.7 L533.2 356.6" stroke="#f03333" stroke-width="1"/><path d="M568.7 234.5 L587.1 222.2" stroke="#ff4444" stroke-width="1"/><path d="M505.3 308.8 L493.2 307.4" stroke="#f83030" stroke-width="1"/><path d="M528.3 307.7 L514.7 304.6" stroke="#f83030" stroke-width="1"/><path d="M537.3 245.1 L547.9 225.8" stroke="#ff3a3a" stroke-width="1"/><path d="M481.1 295.5 L462.1 286.8" stroke="#e03030" stroke-width="1"/><path d="M483.4 278.6 L474.4 268.1" stroke="#c02424" stroke-width="1"/><path d="M513.1 291.7 L501.4 281.6" stroke="#ff4444" stroke-width="1"/><path d="M523.1 211.0 L529.7 201.4" stroke="#e03030" stroke-width="1"/><path d="M483.6 254.9 L481.2 244.9" stroke="#f83030" stroke-width="1"/><path d="M473.4 262.7 L468.6 252.4" stroke="#f83030" stroke-width="1"/><path d="M558.4 217.7 L569.0 209.7" stroke="#c02424" stroke-width="1"/><path d="M519.6 203.7 L526.1 193.9" stroke="#c02424" stroke-width="1"/><path d="M460.3 245.4 L457.9 234.0" stroke="#f03333" stroke-width="1"/><path d="M520.6 275.6 L516.6 263.0" stroke="#e03030" stroke-width="1"/><path d="M551.3 280.0 L556.9 258.7" stroke="#f03333" stroke-width="1"/><path d="M494.0 312.1 L475.2 311.2" stroke="#c02424" stroke-width="1"/><path d="M530.2 209.5 L538.8 198.7" stroke="#a82020" stroke-width="1"/><path d="M495.7 225.3 L498.4 215.5" stroke="#f83030" stroke-width="1"/><path d="M484.9 304.6 L466.4 301.7" stroke="#a82020" stroke-width="1"/><path d="M462.7 251.0 L457.2 228.3" stroke="#f03333" stroke-width="1"/><path d="M518.4 255.8 L519.4 242.2" stroke="#a82020" stroke-width="1"/><path d="M505.7 203.4 L516.4 183.9" stroke="#e03030" stroke-width="1"/><path d="M473.1 287.6 L464.7 282.1" stroke="#ff3a3a" stroke-width="1"/><path d="M540.4 260.1 L543.2 250.5" stroke="#ff4444" stroke-width="1"/><path d="M466.9 279.1 L453.0 264.9" stroke="#c02424" stroke-width="1"/><path d="M559.9 315.1 L565.7 305.0" stroke="#e03030" stroke-width="1"/><path d="M533.7 254.6 L541.0 233.5" stroke="#e03030" stroke-width="1"/><path d="M545.8 229.0 L557.8 215.8" stroke="#e03030" stroke-width="1"/><path d="M511.2 302.5 L489.1 295.0" stroke="#e03030" stroke-width="1"/><path d="M535.9 241.8 L547.8 221.3" stroke="#f83030" stroke-width="1"/><path d="M492.9 318.2 L471.1 319.3" stroke="#e03030" stroke-width="1"/><path d="M521.6 292.4 L506.2 276.0" stroke="#f03333" stroke-width="1"/><path d="M486.5 298.1 L468.5 291.3" stroke="#f83030" stroke-width="1"/><path d="M460.6 270.6 L452.5 259.7" stroke="#f03333" stroke-width="1"/><path d="M521.7 229.0 L532.0 210.0" stroke="#e03030" stroke-width="1"/><path d="M518.7 263.4 L517.9 248.2" stroke="#e03030" stroke-width="1"/><path d="M479.0 220.6 L482.9 204.0" stroke="#ff4444" stroke-width="1"/><path d="M528.5 222.5 L534.6 213.3" stroke="#f03333" stroke-width="1"/><path d="M494.2 243.6 L495.3 224.6" stroke="#f03333" stroke-width="1"/><path d="M485.3 213.7 L491.3 195.5" stroke="#a82020" stroke-width="1"/><path d="M555.8 317.1 L539.0 325.3" stroke="#f03333" stroke-width="1"/><path d="M506.6 321.1 L493.9 322.5" stroke="#c02424" stroke-width="1"/><path d="M525.9 204.8 L539.2 187.7" stroke="#f83030" stroke-width="1"/><path d="M441.9 252.3 L436.3 238.2" stroke="#ff4444" stroke-width="1"/><path d="M477.8 269.5 L472.1 260.3" stroke="#ff3a3a" stroke-width="1"/><path d="M566.1 311.3 L581.7 301.9" stroke="#f83030" stroke-width="1"/><path d="M580.5 267.1 L591.9 259.3" stroke="#a82020" stroke-width="1"/><path d="M578.9 311.6 L601.8 307.4" stroke="#ff3a3a" stroke-width="1"/><path d="M588.3 286.8 L602.7 279.6" stroke="#a82020" stroke-width="1"/><path d="M535.1 231.3 L542.4 220.1" stroke="#f03333" stroke-width="1"/><path d="M536.8 347.8 L528.3 359.8" stroke="#ff3a3a" stroke-width="1"/><path d="M553.2 314.4 L530.5 312.5" stroke="#ff3a3a" stroke-width="1"/><path d="M489.3 260.5 L485.8 248.7" stroke="#e03030" stroke-width="1"/><path d="M487.1 243.5 L487.4 223.2" stroke="#ff3a3a" stroke-width="1"/><path d="M565.9 220.2 L579.5 211.4" stroke="#a82020" stroke-width="1"/><path d="M572.2 268.0 L579.4 260.9" stroke="#ff3a3a" stroke-width="1"/><path d="M504.8 241.5 L506.4 230.3" stroke="#f83030" stroke-width="1"/><path d="M447.9 262.2 L437.5 242.7" stroke="#f03333" stroke-width="1"/><path d="M548.0 209.9 L557.6 201.1" stroke="#e03030" stroke-width="1"/><path d="M505.5 205.9 L511.7 193.9" stroke="#f83030" stroke-width="1"/><path d="M506.5 295.2 L496.7 289.5" stroke="#ff4444" stroke-width="1"/><path d="M558.4 267.2 L567.6 252.7" stroke="#c02424" stroke-width="1"/><path d="M446.1 286.5 L428.5 275.5" stroke="#a82020" stroke-width="1"/><path d="M545.3 245.9 L552.2 234.9" stroke="#e03030" stroke-width="1"/><path d="M431.6 282.9 L412.8 269.5" stroke="#f03333" stroke-width="1"/><path d="M480.1 277.5 L466.1 259.4" stroke="#ff4444" stroke-width="1"/><path d="M548.0 276.9 L553.4 254.3" stroke="#f83030" stroke-width="1"/><path d="M499.6 235.2 L504.3 214.4" stroke="#ff3a3a" stroke-width="1"/><path d="M509.0 324.6 L497.5 326.7" stroke="#e03030" stroke-width="1"/><path d="M524.5 329.0 L515.2 332.7" stroke="#a82020" stroke-width="1"/><path d="M556.0 319.5 L544.0 332.7" stroke="#f03333" stroke-width="1"/><path d="M499.0 250.6 L498.9 231.2" stroke="#ff3a3a" stroke-width="1"/><path d="M522.8 216.5 L534.9 198.9" stroke="#ff4444" stroke-width="1"/><path d="M544.2 220.7 L555.5 209.2" stroke="#a82020" stroke-width="1"/><path d="M558.3 312.4 L549.0 298.1" stroke="#f03333" stroke-width="1"/><path d="M470.8 295.6 L460.1 291.5" stroke="#f83030" stroke-width="1"/><path d="M478.2 264.8 L471.3 249.7" stroke="#c02424" stroke-width="1"/><path d="M538.4 335.3 L526.2 346.8" stroke="#ff3a3a" stroke-width="1"/><path d="M590.9 286.9 L602.5 281.5" stroke="#ff3a3a" stroke-width="1"/><path d="M561.8 237.1 L570.3 229.5" stroke="#ff4444" stroke-width="1"/><path d="M528.8 345.0 L518.5 354.9" stroke="#f83030" stroke-width="1"/><path d="M439.9 236.2 L437.8 224.0" stroke="#e03030" stroke-width="1"/><path d="M570.0 306.8 L585.7 294.9" stroke="#f03333" stroke-width="1"/><path d="M517.1 263.4 L516.1 245.4" stroke="#ff3a3a" stroke-width="1"/><path d="M527.0 312.5 L513.5 311.5" stroke="#a82020" stroke-width="1"/><path d="M561.5 310.5 L565.7 297.6" stroke="#e03030" stroke-width="1"/><path d="M544.8 261.7 L549.4 249.1" stroke="#f83030" stroke-width="1"/><path d="M528.6 262.1 L531.4 241.8" stroke="#ff4444" stroke-width="1"/><path d="M482.5 215.4 L489.6 192.5" stroke="#f03333" stroke-width="1"/><path d="M485.5 314.1 L470.1 313.9" stroke="#f83030" stroke-width="1"/><path d="M557.5 259.0 L565.9 247.2" stroke="#ff3a3a" stroke-width="1"/><path d="M452.2 233.1 L451.2 212.7" stroke="#f83030" stroke-width="1"/><path d="M537.4 230.6 L544.5 220.4" stroke="#ff4444" stroke-width="1"/><path d="M572.9 237.7 L583.7 230.5" stroke="#ff3a3a" stroke-width="1"/><path d="M456.8 261.4 L448.8 245.3" stroke="#f03333" stroke-width="1"/><path d="M570.4 277.9 L578.1 269.1" stroke="#f83030" stroke-width="1"/><path d="M522.2 280.9 L515.0 263.6" stroke="#f83030" stroke-width="1"/><path d="M537.3 308.8 L516.7 303.2" stroke="#a82020" stroke-width="1"/><path d="M504.0 245.9 L506.0 227.0" stroke="#f83030" stroke-width="1"/><path d="M556.5 282.1 L561.2 267.5" stroke="#f83030" stroke-width="1"/><path d="M499.3 303.5 L480.5 299.0" stroke="#e03030" stroke-width="1"/><path d="M555.6 295.2 L557.2 274.2" stroke="#f83030" stroke-width="1"/><path d="M520.0 257.0 L522.2 236.9" stroke="#ff3a3a" stroke-width="1"/><path d="M556.0 281.6 L563.1 262.0" stroke="#e03030" stroke-width="1"/><path d="M489.0 220.6 L494.6 202.6" stroke="#f83030" stroke-width="1"/><path d="M488.1 294.0 L472.8 286.0" stroke="#e03030" stroke-width="1"/><path d="M454.4 283.4 L445.0 276.7" stroke="#f03333" stroke-width="1"/><path d="M486.2 303.1 L469.8 299.7" stroke="#f83030" stroke-width="1"/><path d="M534.2 237.7 L544.7 220.0" stroke="#e03030" stroke-width="1"/><path d="M540.3 227.2 L552.5 212.5" stroke="#e03030" stroke-width="1"/><path d="M536.3 255.3 L541.5 240.0" stroke="#a82020" stroke-width="1"/><path d="M470.3 251.1 L466.4 233.1" stroke="#f03333" stroke-width="1"/><path d="M542.3 257.9 L549.1 241.4" stroke="#ff4444" stroke-width="1"/><path d="M565.2 311.7 L581.4 301.3" stroke="#a82020" stroke-width="1"/><path d="M505.7 263.8 L502.0 241.2" stroke="#ff3a3a" stroke-width="1"/><path d="M539.7 213.1 L550.0 202.1" stroke="#a82020" stroke-width="1"/><path d="M501.4 281.6 L493.8 272.1" stroke="#f03333" stroke-width="1"/><path d="M458.4 225.8 L459.4 208.1" stroke="#c02424" stroke-width="1"/><path d="M481.7 278.6 L468.1 262.0" stroke="#ff4444" stroke-width="1"/><path d="M431.8 250.5 L425.3 234.2" stroke="#f83030" stroke-width="1"/><path d="M527.9 260.6 L528.9 249.7" stroke="#f83030" stroke-width="1"/><path d="M532.1 345.4 L517.2 361.6" stroke="#f83030" stroke-width="1"/><path d="M475.5 281.1 L463.9 269.8" stroke="#e03030" stroke-width="1"/><path d="M466.4 292.1 L450.6 284.1" stroke="#f83030" stroke-width="1"/><path d="M495.6 264.4 L489.9 244.0" stroke="#ff4444" stroke-width="1"/><path d="M485.6 318.8 L471.2 319.5" stroke="#a82020" stroke-width="1"/><path d="M438.8 278.3 L427.3 268.4" stroke="#ff4444" stroke-width="1"/><path d="M560.2 250.7 L572.8 237.3" stroke="#c02424" stroke-width="1"/><path d="M572.3 229.5 L592.4 217.9" stroke="#e03030" stroke-width="1"/><path d="M581.3 255.0 L599.7 244.4" stroke="#f03333" stroke-width="1"/><path d="M575.9 280.0 L592.4 266.5" stroke="#c02424" stroke-width="1"/><path d="M553.4 286.8 L556.8 267.3" stroke="#e03030" stroke-width="1"/><path d="M509.5 339.6 L498.0 345.2" stroke="#ff4444" stroke-width="1"/><path d="M545.4 332.5 L536.2 343.4" stroke="#a82020" stroke-width="1"/><path d="M560.8 316.5 L551.6 299.8" stroke="#f83030" stroke-width="1"/><path d="M559.9 268.5 L570.9 252.3" stroke="#f03333" stroke-width="1"/><path d="M503.8 215.3 L510.3 201.1" stroke="#c02424" stroke-width="1"/><path d="M469.9 307.7 L454.5 306.5" stroke="#f03333" stroke-width="1"/><path d="M579.7 265.0 L599.8 252.2" stroke="#ff4444" stroke-width="1"/><path d="M536.5 287.9 L529.8 269.5" stroke="#ff3a3a" stroke-width="1"/><path d="M489.0 205.5 L497.0 185.4" stroke="#a82020" stroke-width="1"/><path d="M465.2 286.6 L452.6 278.1" stroke="#a82020" stroke-width="1"/><path d="M537.6 259.7 L542.7 242.8" stroke="#f03333" stroke-width="1"/><path d="M531.8 306.9 L514.6 301.9" stroke="#f03333" stroke-width="1"/><path d="M480.3 276.4 L469.5 262.4" stroke="#a82020" stroke-width="1"/><path d="M540.2 205.4 L549.9 195.3" stroke="#ff3a3a" stroke-width="1"/><path d="M506.9 327.5 L497.0 329.8" stroke="#ff4444" stroke-width="1"/><path d="M525.7 330.0 L510.9 336.6" stroke="#f83030" stroke-width="1"/><path d="M512.6 284.1 L499.7 264.5" stroke="#f03333" stroke-width="1"/><path d="M479.9 301.3 L462.2 296.9" stroke="#ff4444" stroke-width="1"/><path d="M491.7 221.3 L496.8 205.0" stroke="#f03333" stroke-width="1"/><path d="M474.3 290.6 L464.9 285.4" stroke="#c02424" stroke-width="1"/><path d="M589.6 273.5 L600.0 268.1" stroke="#a82020" stroke-width="1"/><path d="M452.6 247.2 L448.2 229.5" stroke="#f83030" stroke-width="1"/><path d="M479.9 283.1 L468.4 272.6" stroke="#c02424" stroke-width="1"/><path d="M462.9 289.9 L452.1 284.1" stroke="#ff3a3a" stroke-width="1"/><path d="M490.9 223.0 L497.0 203.0" stroke="#f83030" stroke-width="1"/><path d="M484.0 322.9 L471.4 324.3" stroke="#e03030" stroke-width="1"/><path d="M467.1 264.2 L457.2 243.4" stroke="#e03030" stroke-width="1"/><path d="M495.3 279.5 L487.0 268.8" stroke="#f83030" stroke-width="1"/><path d="M569.8 253.1 L584.7 240.9" stroke="#ff4444" stroke-width="1"/><path d="M518.1 227.5 L525.3 212.8" stroke="#a82020" stroke-width="1"/><path d="M435.0 250.5 L428.0 232.2" stroke="#f03333" stroke-width="1"/><path d="M523.9 244.5 L530.4 226.0" stroke="#f83030" stroke-width="1"/><path d="M536.7 301.7 L522.9 291.8" stroke="#e03030" stroke-width="1"/><path d="M535.2 319.7 L515.4 323.4" stroke="#ff4444" stroke-width="1"/><path d="M526.6 217.3 L533.7 207.1" stroke="#ff3a3a" stroke-width="1"/><path d="M525.3 299.6 L511.3 291.2" stroke="#ff3a3a" stroke-width="1"/><path d="M562.5 233.0 L575.8 222.4" stroke="#ff3a3a" stroke-width="1"/><path d="M520.4 218.7 L527.4 207.3" stroke="#e03030" stroke-width="1"/><path d="M471.6 241.6 L470.5 230.8" stroke="#c02424" stroke-width="1"/><path d="M529.2 283.8 L521.8 264.1" stroke="#ff4444" stroke-width="1"/><path d="M528.0 321.8 L518.0 323.9" stroke="#ff3a3a" stroke-width="1"/><path d="M549.5 217.9 L566.2 203.6" stroke="#ff4444" stroke-width="1"/><path d="M480.1 206.9 L486.8 186.3" stroke="#c02424" stroke-width="1"/><path d="M481.3 309.3 L457.9 307.7" stroke="#f83030" stroke-width="1"/><path d="M507.9 340.0 L498.0 344.7" stroke="#c02424" stroke-width="1"/><path d="M484.1 275.3 L477.3 266.1" stroke="#f83030" stroke-width="1"/><path d="M564.3 316.7 L584.1 324.4" stroke="#c02424" stroke-width="1"/><path d="M580.3 290.7 L593.9 281.4" stroke="#a82020" stroke-width="1"/><path d="M583.7 272.7 L592.6 266.9" stroke="#ff4444" stroke-width="1"/><path d="M486.6 246.7 L486.0 223.9" stroke="#a82020" stroke-width="1"/><path d="M560.2 315.0 L578.1 319.4" stroke="#ff3a3a" stroke-width="1"/><path d="M564.7 254.8 L581.2 239.2" stroke="#c02424" stroke-width="1"/><path d="M528.8 217.4 L538.4 204.5" stroke="#c02424" stroke-width="1"/><path d="M465.6 233.9 L465.3 221.8" stroke="#f83030" stroke-width="1"/><path d="M445.2 288.5 L429.9 280.1" stroke="#f83030" stroke-width="1"/><path d="M556.2 326.7 L550.1 345.5" stroke="#a82020" stroke-width="1"/><path d="M514.9 268.7 L511.4 249.9" stroke="#a82020" stroke-width="1"/><path d="M545.3 220.8 L559.6 206.7" stroke="#c02424" stroke-width="1"/><path d="M516.7 216.3 L522.7 206.0" stroke="#a82020" stroke-width="1"/><path d="M523.3 201.6 L531.2 190.7" stroke="#c02424" stroke-width="1"/><path d="M571.8 226.5 L582.1 220.1" stroke="#ff4444" stroke-width="1"/><path d="M544.7 327.6 L528.6 340.9" stroke="#e03030" stroke-width="1"/><path d="M554.6 287.0 L557.6 270.3" stroke="#ff3a3a" stroke-width="1"/><path d="M553.3 336.8 L548.7 351.7" stroke="#c02424" stroke-width="1"/><path d="M477.3 216.8 L480.7 202.7" stroke="#ff3a3a" stroke-width="1"/><path d="M531.8 303.7 L518.9 297.7" stroke="#f83030" stroke-width="1"/><path d="M583.9 299.1 L603.7 289.8" stroke="#ff4444" stroke-width="1"/><path d="M481.0 280.4 L466.7 264.4" stroke="#a82020" stroke-width="1"/><path d="M568.1 327.1 L574.9 337.2" stroke="#e03030" stroke-width="1"/><path d="M514.1 285.0 L501.6 266.8" stroke="#a82020" stroke-width="1"/><path d="M538.9 324.3 L523.1 331.3" stroke="#a82020" stroke-width="1"/><path d="M557.4 278.4 L566.6 258.8" stroke="#f03333" stroke-width="1"/><path d="M476.1 213.0 L480.7 195.6" stroke="#e03030" stroke-width="1"/><path d="M531.3 220.1 L538.7 210.0" stroke="#c02424" stroke-width="1"/><path d="M559.5 219.7 L570.2 211.6" stroke="#f83030" stroke-width="1"/><path d="M588.1 288.5 L599.5 282.7" stroke="#e03030" stroke-width="1"/><path d="M513.9 235.1 L517.4 224.3" stroke="#e03030" stroke-width="1"/><path d="M568.5 248.4 L585.2 235.2" stroke="#c02424" stroke-width="1"/><path d="M529.4 301.7 L516.3 294.6" stroke="#f03333" stroke-width="1"/><path d="M527.6 299.4 L510.7 287.8" stroke="#ff3a3a" stroke-width="1"/><path d="M554.8 251.7 L561.7 242.2" stroke="#ff4444" stroke-width="1"/><path d="M466.6 216.0 L469.5 200.6" stroke="#ff4444" stroke-width="1"/><path d="M554.8 313.0 L542.8 308.3" stroke="#c02424" stroke-width="1"/><path d="M524.2 214.9 L536.4 197.8" stroke="#c02424" stroke-width="1"/><path d="M526.4 266.9 L526.1 251.0" stroke="#e03030" stroke-width="1"/><path d="M506.6 243.5 L508.7 229.1" stroke="#e03030" stroke-width="1"/><path d="M544.6 342.4 L534.2 360.8" stroke="#e03030" stroke-width="1"/><path d="M561.4 260.7 L572.7 246.9" stroke="#a82020" stroke-width="1"/><path d="M459.0 303.1 L443.7 300.6" stroke="#f03333" stroke-width="1"/><path d="M435.7 278.4 L426.3 270.7" stroke="#ff4444" stroke-width="1"/><path d="M516.7 288.2 L502.8 270.8" stroke="#a82020" stroke-width="1"/><path d="M550.8 214.4 L562.4 204.5" stroke="#ff3a3a" stroke-width="1"/><path d="M441.4 255.5 L436.5 245.5" stroke="#ff4444" stroke-width="1"/><path d="M484.0 243.7 L483.6 226.5" stroke="#e03030" stroke-width="1"/><path d="M517.6 219.6 L527.1 203.6" stroke="#c02424" stroke-width="1"/><path d="M563.2 331.7 L566.8 350.3" stroke="#a82020" stroke-width="1"/><path d="M578.6 287.6 L595.8 275.2" stroke="#e03030" stroke-width="1"/><path d="M552.5 219.3 L564.0 209.4" stroke="#a82020" stroke-width="1"/><path d="M548.6 241.4 L554.7 233.1" stroke="#ff4444" stroke-width="1"/><path d="M497.8 214.5 L505.4 196.5" stroke="#ff3a3a" stroke-width="1"/><path d="M579.9 319.2 L592.7 321.9" stroke="#ff4444" stroke-width="1"/><path d="M531.2 323.2 L512.7 328.5" stroke="#f83030" stroke-width="1"/><path d="M572.4 257.8 L584.1 248.2" stroke="#ff3a3a" stroke-width="1"/><path d="M520.8 321.5 L509.4 323.3" stroke="#f83030" stroke-width="1"/><path d="M470.0 302.9 L454.4 300.1" stroke="#f03333" stroke-width="1"/><path d="M518.9 339.2 L504.1 347.9" stroke="#ff4444" stroke-width="1"/><path d="M491.0 321.1 L467.1 323.2" stroke="#f83030" stroke-width="1"/><path d="M474.6 265.5 L469.6 255.9" stroke="#f03333" stroke-width="1"/><path d="M555.2 295.8 L554.8 284.7" stroke="#f03333" stroke-width="1"/><path d="M520.5 346.2 L507.7 356.2" stroke="#c02424" stroke-width="1"/><path d="M494.6 292.5 L477.5 281.6" stroke="#f03333" stroke-width="1"/><path d="M473.1 222.4 L475.6 207.3" stroke="#c02424" stroke-width="1"/><path d="M529.2 239.2 L533.7 229.2" stroke="#c02424" stroke-width="1"/><path d="M487.5 324.4 L475.8 325.9" stroke="#ff3a3a" stroke-width="1"/><path d="M497.7 282.9 L484.6 267.3" stroke="#f83030" stroke-width="1"/><path d="M500.5 234.5 L506.4 211.4" stroke="#e03030" stroke-width="1"/><path d="M531.0 310.2 L509.9 306.7" stroke="#ff4444" stroke-width="1"/><path d="M583.3 253.9 L601.5 244.2" stroke="#f03333" stroke-width="1"/><path d="M452.3 244.0 L449.1 228.8" stroke="#c02424" stroke-width="1"/><path d="M555.1 299.5 L553.2 284.5" stroke="#e03030" stroke-width="1"/><path d="M443.1 266.5 L436.4 257.3" stroke="#e03030" stroke-width="1"/><path d="M510.5 288.5 L496.9 274.3" stroke="#ff4444" stroke-width="1"/><path d="M522.8 212.5 L530.8 200.7" stroke="#f03333" stroke-width="1"/><path d="M474.6 263.5 L469.1 251.8" stroke="#f83030" stroke-width="1"/><path d="M441.0 251.0 L433.4 228.4" stroke="#ff4444" stroke-width="1"/><path d="M575.6 315.0 L593.6 315.0" stroke="#a82020" stroke-width="1"/><path d="M570.8 291.8 L580.9 280.1" stroke="#a82020" stroke-width="1"/><path d="M472.6 235.6 L472.8 219.5" stroke="#f83030" stroke-width="1"/><path d="M439.7 259.3 L431.7 244.4" stroke="#ff3a3a" stroke-width="1"/><path d="M493.4 241.2 L495.2 221.6" stroke="#f03333" stroke-width="1"/><path d="M472.0 241.8 L470.8 221.6" stroke="#f83030" stroke-width="1"/><path d="M534.5 245.5 L541.7 230.2" stroke="#f03333" stroke-width="1"/><path d="M504.4 245.1 L505.8 230.9" stroke="#e03030" stroke-width="1"/><path d="M556.0 290.0 L561.0 267.7" stroke="#f03333" stroke-width="1"/><path d="M480.2 266.5 L471.8 248.1" stroke="#ff3a3a" stroke-width="1"/><path d="M554.5 272.3 L563.4 253.7" stroke="#ff4444" stroke-width="1"/><path d="M550.7 266.1 L559.6 247.6" stroke="#f83030" stroke-width="1"/><path d="M552.3 258.9 L562.4 242.6" stroke="#f83030" stroke-width="1"/><path d="M558.9 285.0 L563.8 271.3" stroke="#f03333" stroke-width="1"/><path d="M521.8 241.0 L526.7 227.0" stroke="#f83030" stroke-width="1"/><path d="M533.8 240.6 L538.2 231.5" stroke="#e03030" stroke-width="1"/><path d="M550.3 314.8 L531.3 314.4" stroke="#e03030" stroke-width="1"/><path d="M540.6 303.1 L529.6 295.2" stroke="#c02424" stroke-width="1"/><path d="M562.2 253.9 L572.5 242.8" stroke="#c02424" stroke-width="1"/><path d="M518.9 211.8 L526.9 199.3" stroke="#c02424" stroke-width="1"/><path d="M524.2 221.8 L533.2 207.8" stroke="#e03030" stroke-width="1"/><path d="M545.5 259.5 L550.7 247.0" stroke="#f83030" stroke-width="1"/><path d="M572.7 320.2 L593.4 328.8" stroke="#ff3a3a" stroke-width="1"/><path d="M533.8 331.2 L523.8 337.4" stroke="#f83030" stroke-width="1"/><path d="M533.9 239.6 L542.0 224.6" stroke="#f83030" stroke-width="1"/><path d="M573.9 303.1 L584.5 295.3" stroke="#c02424" stroke-width="1"/><path d="M547.0 279.0 L549.9 259.3" stroke="#ff3a3a" stroke-width="1"/><path d="M556.3 306.6 L550.8 290.7" stroke="#c02424" stroke-width="1"/><path d="M477.6 276.0 L464.9 259.1" stroke="#ff3a3a" stroke-width="1"/><path d="M479.2 277.2 L469.5 265.4" stroke="#e03030" stroke-width="1"/><path d="M529.3 343.8 L517.2 355.2" stroke="#ff4444" stroke-width="1"/><path d="M487.9 320.5 L464.5 322.3" stroke="#e03030" stroke-width="1"/><path d="M568.2 288.3 L578.2 274.7" stroke="#f03333" stroke-width="1"/><path d="M429.9 257.5 L424.1 247.3" stroke="#a82020" stroke-width="1"/><path d="M525.7 344.9 L514.6 354.5" stroke="#f03333" stroke-width="1"/><path d="M566.8 318.1 L585.2 326.3" stroke="#e03030" stroke-width="1"/><path d="M497.2 296.0 L486.9 291.0" stroke="#c02424" stroke-width="1"/><path d="M587.6 300.1 L601.9 294.3" stroke="#a82020" stroke-width="1"/><path d="M469.3 289.1 L456.6 281.5" stroke="#a82020" stroke-width="1"/><path d="M499.3 277.6 L490.3 263.4" stroke="#ff3a3a" stroke-width="1"/><path d="M529.9 321.9 L512.3 326.0" stroke="#f03333" stroke-width="1"/><path d="M588.2 267.2 L609.3 257.1" stroke="#ff3a3a" stroke-width="1"/><path d="M432.3 266.1 L425.8 257.7" stroke="#f03333" stroke-width="1"/><path d="M589.8 286.9 L604.4 280.0" stroke="#c02424" stroke-width="1"/><path d="M486.8 248.9 L485.5 226.1" stroke="#ff4444" stroke-width="1"/><path d="M549.2 260.1 L553.7 250.5" stroke="#f03333" stroke-width="1"/><path d="M476.7 289.6 L458.2 277.5" stroke="#f03333" stroke-width="1"/><path d="M560.4 333.0 L560.8 352.3" stroke="#c02424" stroke-width="1"/><path d="M506.7 332.4 L492.4 337.0" stroke="#ff3a3a" stroke-width="1"/><path d="M426.5 277.2 L413.6 266.2" stroke="#c02424" stroke-width="1"/><path d="M548.5 220.3 L556.1 212.9" stroke="#f83030" stroke-width="1"/><path d="M560.6 327.6 L561.1 340.0" stroke="#a82020" stroke-width="1"/><path d="M434.0 273.8 L425.5 265.6" stroke="#ff4444" stroke-width="1"/><path d="M508.8 301.6 L497.8 298.0" stroke="#f83030" stroke-width="1"/><path d="M498.0 298.9 L477.7 290.5" stroke="#c02424" stroke-width="1"/><path d="M425.6 273.3 L416.2 264.2" stroke="#ff3a3a" stroke-width="1"/><path d="M547.8 301.8 L539.9 291.2" stroke="#ff3a3a" stroke-width="1"/><path d="M500.9 289.1 L483.8 273.8" stroke="#ff4444" stroke-width="1"/><path d="M553.8 233.0 L570.0 217.7" stroke="#f03333" stroke-width="1"/><path d="M510.9 237.8 L516.6 218.5" stroke="#f03333" stroke-width="1"/><path d="M556.7 325.3 L551.6 341.0" stroke="#ff4444" stroke-width="1"/><path d="M541.9 317.8 L520.6 321.1" stroke="#a82020" stroke-width="1"/><path d="M502.3 226.2 L505.8 215.2" stroke="#f83030" stroke-width="1"/><path d="M505.2 216.7 L514.4 197.8" stroke="#c02424" stroke-width="1"/><path d="M482.6 267.3 L474.4 249.6" stroke="#ff3a3a" stroke-width="1"/><path d="M472.0 229.8 L473.4 212.9" stroke="#a82020" stroke-width="1"/><path d="M495.5 288.7 L484.0 279.7" stroke="#f83030" stroke-width="1"/><path d="M464.4 303.4 L446.7 300.6" stroke="#e03030" stroke-width="1"/><path d="M479.0 276.7 L470.3 266.2" stroke="#e03030" stroke-width="1"/><path d="M536.3 275.7 L535.4 265.5" stroke="#f83030" stroke-width="1"/><path d="M560.5 315.0 L548.0 314.7" stroke="#ff3a3a" stroke-width="1"/><path d="M484.2 307.1 L474.0 306.0" stroke="#a82020" stroke-width="1"/><path d="M574.8 302.6 L593.3 290.4" stroke="#f83030" stroke-width="1"/><path d="M506.5 297.8 L486.5 287.5" stroke="#a82020" stroke-width="1"/><path d="M480.8 235.5 L482.7 214.0" stroke="#a82020" stroke-width="1"/><path d="M525.1 227.2 L532.8 213.9" stroke="#f03333" stroke-width="1"/><path d="M544.3 339.5 L532.9 357.3" stroke="#e03030" stroke-width="1"/><path d="M559.1 311.7 L565.7 334.6" stroke="#f83030" stroke-width="1"/><path d="M524.3 206.1 L538.6 187.4" stroke="#ff4444" stroke-width="1"/><path d="M508.1 262.0 L505.7 240.8" stroke="#f83030" stroke-width="1"/><path d="M443.5 248.6 L437.0 226.4" stroke="#a82020" stroke-width="1"/><path d="M491.1 264.9 L485.2 247.6" stroke="#ff4444" stroke-width="1"/><path d="M490.4 201.7 L497.4 184.9" stroke="#ff4444" stroke-width="1"/><path d="M490.0 324.6 L468.8 327.5" stroke="#f03333" stroke-width="1"/><path d="M498.9 225.2 L506.8 203.0" stroke="#f83030" stroke-width="1"/><path d="M555.4 267.9 L564.3 251.7" stroke="#ff3a3a" stroke-width="1"/><path d="M543.7 325.2 L525.3 336.8" stroke="#ff4444" stroke-width="1"/><path d="M558.8 317.0 L552.3 327.6" stroke="#e03030" stroke-width="1"/><path d="M481.0 275.8 L467.4 256.3" stroke="#e03030" stroke-width="1"/><path d="M511.8 338.0 L499.3 343.9" stroke="#a82020" stroke-width="1"/><path d="M501.7 239.0 L505.4 219.5" stroke="#f03333" stroke-width="1"/><path d="M539.1 262.5 L542.1 250.2" stroke="#f03333" stroke-width="1"/><path d="M560.6 230.5 L570.1 222.5" stroke="#a82020" stroke-width="1"/><path d="M511.6 229.6 L517.6 214.1" stroke="#ff4444" stroke-width="1"/><path d="M543.1 317.5 L532.6 319.0" stroke="#a82020" stroke-width="1"/><path d="M546.0 264.0 L555.3 242.3" stroke="#c02424" stroke-width="1"/><path d="M497.0 309.9 L473.4 307.9" stroke="#a82020" stroke-width="1"/><path d="M563.7 330.5 L567.1 345.2" stroke="#f83030" stroke-width="1"/><path d="M533.3 228.2 L543.8 213.1" stroke="#f03333" stroke-width="1"/><path d="M538.3 318.7 L519.1 321.9" stroke="#c02424" stroke-width="1"/><path d="M508.5 248.6 L511.6 225.3" stroke="#ff3a3a" stroke-width="1"/><path d="M532.6 345.3 L520.8 358.4" stroke="#e03030" stroke-width="1"/><path d="M439.6 236.3 L436.7 214.9" stroke="#a82020" stroke-width="1"/><path d="M523.8 216.0 L536.7 197.7" stroke="#f83030" stroke-width="1"/><path d="M473.4 228.1 L474.3 217.8" stroke="#c02424" stroke-width="1"/><path d="M512.7 334.1 L492.8 342.2" stroke="#c02424" stroke-width="1"/><path d="M534.1 254.9 L539.2 238.8" stroke="#c02424" stroke-width="1"/><path d="M510.1 232.2 L513.3 222.0" stroke="#e03030" stroke-width="1"/><path d="M561.0 317.4 L566.6 331.2" stroke="#c02424" stroke-width="1"/><path d="M505.6 302.9 L493.2 299.5" stroke="#a82020" stroke-width="1"/><path d="M546.9 230.3 L560.5 215.6" stroke="#e03030" stroke-width="1"/><path d="M504.2 318.7 L493.0 319.5" stroke="#a82020" stroke-width="1"/><path d="M573.1 297.3 L583.9 287.2" stroke="#f03333" stroke-width="1"/><path d="M481.1 241.7 L480.7 228.0" stroke="#f83030" stroke-width="1"/><path d="M549.3 328.4 L537.3 343.4" stroke="#c02424" stroke-width="1"/><path d="M559.7 242.1 L567.0 234.6" stroke="#e03030" stroke-width="1"/><path d="M453.2 276.0 L440.9 263.1" stroke="#f83030" stroke-width="1"/><path d="M540.5 319.4 L529.6 321.9" stroke="#f83030" stroke-width="1"/><path d="M501.7 306.1 L483.5 303.3" stroke="#a82020" stroke-width="1"/><path d="M536.1 317.7 L514.7 320.0" stroke="#a82020" stroke-width="1"/><path d="M499.9 257.8 L497.6 238.3" stroke="#a82020" stroke-width="1"/><path d="M561.2 239.0 L574.4 227.4" stroke="#e03030" stroke-width="1"/><path d="M500.1 304.9 L488.0 302.7" stroke="#ff4444" stroke-width="1"/><path d="M534.1 317.5 L522.2 318.7" stroke="#e03030" stroke-width="1"/><path d="M460.2 265.8 L449.8 247.3" stroke="#ff3a3a" stroke-width="1"/><path d="M445.6 269.2 L435.7 256.2" stroke="#f83030" stroke-width="1"/><path d="M573.3 245.7 L587.7 235.8" stroke="#a82020" stroke-width="1"/><path d="M453.0 227.5 L453.2 209.5" stroke="#c02424" stroke-width="1"/><path d="M573.3 319.6 L587.0 324.4" stroke="#ff4444" stroke-width="1"/><path d="M538.2 283.7 L535.3 271.5" stroke="#a82020" stroke-width="1"/><path d="M514.2 299.1 L495.9 289.7" stroke="#e03030" stroke-width="1"/><path d="M490.6 234.6 L492.7 219.9" stroke="#f03333" stroke-width="1"/><path d="M559.1 255.9 L571.4 241.2" stroke="#ff3a3a" stroke-width="1"/><path d="M488.5 316.2 L471.3 316.5" stroke="#f83030" stroke-width="1"/><path d="M507.1 297.5 L489.4 288.3" stroke="#c02424" stroke-width="1"/><path d="M512.1 220.0 L518.9 206.6" stroke="#e03030" stroke-width="1"/><path d="M530.1 297.9 L513.4 283.4" stroke="#f83030" stroke-width="1"/><path d="M547.3 301.3 L534.7 281.5" stroke="#ff3a3a" stroke-width="1"/><path d="M588.2 298.4 L601.0 292.9" stroke="#c02424" stroke-width="1"/><path d="M547.6 343.2 L540.6 359.3" stroke="#f03333" stroke-width="1"/><path d="M534.5 267.9 L535.3 256.0" stroke="#f83030" stroke-width="1"/><path d="M513.2 278.1 L507.3 266.2" stroke="#f03333" stroke-width="1"/><path d="M551.8 285.9 L554.8 265.2" stroke="#f03333" stroke-width="1"/><path d="M558.6 331.4 L556.8 353.4" stroke="#a82020" stroke-width="1"/><path d="M507.5 230.0 L513.0 214.2" stroke="#e03030" stroke-width="1"/><path d="M587.0 281.2 L598.5 274.7" stroke="#e03030" stroke-width="1"/><path d="M435.5 285.4 L422.6 277.6" stroke="#f03333" stroke-width="1"/><path d="M485.6 231.8 L488.3 214.2" stroke="#a82020" stroke-width="1"/><path d="M483.2 242.7 L483.1 223.6" stroke="#f83030" stroke-width="1"/><path d="M565.4 238.4 L578.6 228.0" stroke="#a82020" stroke-width="1"/><path d="M504.7 278.9 L496.0 264.6" stroke="#a82020" stroke-width="1"/><path d="M530.5 238.5 L541.9 217.5" stroke="#f83030" stroke-width="1"/><path d="M430.0 283.0 L416.3 273.8" stroke="#ff3a3a" stroke-width="1"/><path d="M466.5 260.9 L460.9 248.5" stroke="#ff4444" stroke-width="1"/><path d="M474.8 238.5 L474.7 221.0" stroke="#a82020" stroke-width="1"/><path d="M457.2 261.1 L450.7 248.4" stroke="#c02424" stroke-width="1"/><path d="M454.1 268.5 L442.0 250.2" stroke="#f83030" stroke-width="1"/><path d="M526.2 328.0 L511.5 333.7" stroke="#c02424" stroke-width="1"/><path d="M497.0 302.3 L481.6 298.2" stroke="#f83030" stroke-width="1"/><path d="M550.6 210.3 L560.5 201.7" stroke="#f03333" stroke-width="1"/><path d="M483.9 320.3 L470.0 321.3" stroke="#ff3a3a" stroke-width="1"/><path d="M466.1 273.7 L454.2 258.3" stroke="#c02424" stroke-width="1"/><path d="M511.8 220.0 L520.5 203.3" stroke="#f03333" stroke-width="1"/><path d="M454.7 289.1 L442.5 282.4" stroke="#ff3a3a" stroke-width="1"/><path d="M576.0 321.3 L589.5 326.6" stroke="#f83030" stroke-width="1"/><path d="M557.4 221.8 L574.8 208.5" stroke="#a82020" stroke-width="1"/><path d="M581.4 247.8 L592.8 241.1" stroke="#e03030" stroke-width="1"/><path d="M501.6 199.0 L506.9 188.7" stroke="#ff3a3a" stroke-width="1"/><path d="M437.9 242.8 L434.0 227.9" stroke="#a82020" stroke-width="1"/><path d="M568.3 322.8 L579.0 332.9" stroke="#f83030" stroke-width="1"/><path d="M490.5 316.7 L478.1 317.0" stroke="#ff3a3a" stroke-width="1"/><path d="M443.1 240.5 L440.7 229.9" stroke="#c02424" stroke-width="1"/><path d="M557.4 275.7 L562.7 263.7" stroke="#c02424" stroke-width="1"/><path d="M557.7 312.6 L541.1 295.3" stroke="#c02424" stroke-width="1"/><path d="M512.6 323.2 L495.4 326.2" stroke="#ff3a3a" stroke-width="1"/><path d="M550.6 268.0 L557.5 251.5" stroke="#e03030" stroke-width="1"/><path d="M565.0 308.6 L577.8 293.3" stroke="#ff4444" stroke-width="1"/><path d="M539.3 253.9 L548.1 234.3" stroke="#ff3a3a" stroke-width="1"/><path d="M505.4 290.3 L494.5 281.3" stroke="#ff3a3a" stroke-width="1"/><path d="M520.9 342.5 L505.3 353.5" stroke="#ff3a3a" stroke-width="1"/><path d="M469.1 255.4 L464.0 238.7" stroke="#e03030" stroke-width="1"/><path d="M493.9 303.0 L483.1 300.6" stroke="#a82020" stroke-width="1"/><path d="M525.1 229.6 L535.7 211.3" stroke="#f03333" stroke-width="1"/><path d="M564.6 253.3 L574.3 243.4" stroke="#c02424" stroke-width="1"/><path d="M514.4 339.0 L498.5 347.4" stroke="#a82020" stroke-width="1"/><path d="M537.4 346.6 L531.4 355.0" stroke="#c02424" stroke-width="1"/><path d="M523.5 268.0 L522.4 246.8" stroke="#a82020" stroke-width="1"/><path d="M479.0 292.4 L465.1 284.9" stroke="#c02424" stroke-width="1"/><path d="M504.9 311.8 L485.4 310.7" stroke="#a82020" stroke-width="1"/><path d="M502.8 252.1 L502.4 238.5" stroke="#a82020" stroke-width="1"/><path d="M450.7 245.8 L446.2 226.3" stroke="#f83030" stroke-width="1"/><path d="M581.8 282.4 L597.1 272.2" stroke="#e03030" stroke-width="1"/><path d="M504.5 297.0 L492.2 290.9" stroke="#f03333" stroke-width="1"/><path d="M436.6 238.2 L434.0 225.5" stroke="#ff3a3a" stroke-width="1"/><path d="M483.6 250.7 L481.6 237.7" stroke="#ff3a3a" stroke-width="1"/><path d="M492.7 317.9 L476.1 318.7" stroke="#f03333" stroke-width="1"/><path d="M525.1 226.2 L531.2 215.6" stroke="#ff4444" stroke-width="1"/><path d="M520.1 246.6 L522.6 235.5" stroke="#f83030" stroke-width="1"/><path d="M560.0 315.0 L573.8 305.2" stroke="#ff3a3a" stroke-width="1"/><path d="M506.3 214.0 L513.0 200.4" stroke="#f03333" stroke-width="1"/><path d="M568.0 312.4 L583.0 307.5" stroke="#ff4444" stroke-width="1"/><path d="M492.9 300.2 L472.0 293.2" stroke="#ff4444" stroke-width="1"/><path d="M538.2 326.0 L522.4 334.0" stroke="#c02424" stroke-width="1"/><path d="M572.6 278.1 L582.8 267.7" stroke="#f03333" stroke-width="1"/><path d="M445.3 238.9 L442.9 225.8" stroke="#ff4444" stroke-width="1"/><path d="M476.5 205.2 L480.9 190.3" stroke="#ff4444" stroke-width="1"/><path d="M535.1 253.7 L539.9 239.7" stroke="#e03030" stroke-width="1"/><path d="M555.3 300.1 L553.2 283.5" stroke="#f83030" stroke-width="1"/><path d="M550.8 242.1 L560.7 229.9" stroke="#c02424" stroke-width="1"/><path d="M564.9 292.1 L569.5 282.8" stroke="#c02424" stroke-width="1"/><path d="M538.4 272.3 L540.5 251.9" stroke="#e03030" stroke-width="1"/><path d="M469.9 271.3 L458.4 253.8" stroke="#ff3a3a" stroke-width="1"/><path d="M584.8 250.9 L603.1 241.8" stroke="#a82020" stroke-width="1"/><path d="M495.8 280.3 L487.0 269.2" stroke="#c02424" stroke-width="1"/><path d="M486.2 202.8 L489.7 193.1" stroke="#ff4444" stroke-width="1"/><path d="M584.0 267.9 L601.8 257.7" stroke="#e03030" stroke-width="1"/><path d="M588.1 275.4 L608.6 265.2" stroke="#f83030" stroke-width="1"/><path d="M468.2 244.1 L466.0 226.0" stroke="#f03333" stroke-width="1"/><path d="M541.3 222.4 L554.0 208.5" stroke="#e03030" stroke-width="1"/><path d="M442.8 252.2 L435.3 231.4" stroke="#ff4444" stroke-width="1"/><path d="M559.5 287.2 L564.4 273.1" stroke="#ff3a3a" stroke-width="1"/><path d="M513.3 259.9 L512.6 243.8" stroke="#a82020" stroke-width="1"/><path d="M565.0 281.4 L571.1 271.5" stroke="#f83030" stroke-width="1"/><path d="M575.4 318.0 L588.9 320.7" stroke="#ff4444" stroke-width="1"/><path d="M571.0 317.2 L592.2 321.4" stroke="#c02424" stroke-width="1"/><path d="M561.0 266.2 L568.5 255.4" stroke="#f83030" stroke-width="1"/><path d="M512.5 285.9 L498.4 266.8" stroke="#ff4444" stroke-width="1"/><path d="M478.6 206.4 L484.0 189.3" stroke="#f03333" stroke-width="1"/><path d="M581.4 274.8 L600.8 262.5" stroke="#ff3a3a" stroke-width="1"/><path d="M572.4 312.7 L585.4 310.4" stroke="#e03030" stroke-width="1"/><path d="M561.8 282.0 L572.7 262.9" stroke="#e03030" stroke-width="1"/><path d="M487.2 292.4 L466.8 279.9" stroke="#ff4444" stroke-width="1"/><path d="M528.2 319.5 L518.2 320.9" stroke="#f03333" stroke-width="1"/><path d="M486.8 321.6 L466.5 323.4" stroke="#f83030" stroke-width="1"/><path d="M548.0 264.6 L551.6 254.7" stroke="#e03030" stroke-width="1"/><path d="M502.8 219.5 L509.0 205.0" stroke="#c02424" stroke-width="1"/><path d="M493.1 294.9 L482.9 289.8" stroke="#c02424" stroke-width="1"/><path d="M527.9 294.1 L514.4 279.3" stroke="#f83030" stroke-width="1"/><path d="M505.4 266.3 L502.5 256.2" stroke="#f03333" stroke-width="1"/><path d="M539.2 222.7 L547.7 212.6" stroke="#c02424" stroke-width="1"/><path d="M476.4 297.6 L462.4 292.7" stroke="#f83030" stroke-width="1"/><path d="M551.3 232.9 L567.7 216.7" stroke="#f03333" stroke-width="1"/><path d="M522.7 315.3 L508.4 315.4" stroke="#c02424" stroke-width="1"/><path d="M475.0 229.6 L477.5 208.7" stroke="#c02424" stroke-width="1"/><path d="M512.5 284.4 L499.3 264.7" stroke="#a82020" stroke-width="1"/><path d="M507.8 262.1 L505.4 238.3" stroke="#f83030" stroke-width="1"/><path d="M493.1 255.2 L491.4 245.0" stroke="#ff4444" stroke-width="1"/><path d="M548.1 325.1 L536.5 334.9" stroke="#a82020" stroke-width="1"/><path d="M513.6 284.2 L505.6 273.2" stroke="#f03333" stroke-width="1"/><path d="M529.3 257.4 L531.8 243.9" stroke="#e03030" stroke-width="1"/><path d="M509.5 291.4 L493.1 277.2" stroke="#f83030" stroke-width="1"/><path d="M451.9 245.2 L447.8 226.6" stroke="#ff3a3a" stroke-width="1"/><path d="M555.8 247.6 L564.0 237.6" stroke="#a82020" stroke-width="1"/><path d="M482.9 284.7 L465.8 269.0" stroke="#ff4444" stroke-width="1"/><path d="M528.5 299.6 L464.1 274.3" stroke="#f83030" stroke-width="1"/><path d="M543.1 314.3 L456.9 327.7" stroke="#f83030" stroke-width="1"/><path d="M550.1 315.9 L459.7 355.0" stroke="#ff3a3a" stroke-width="1"/><path d="M528.5 303.3 L508.8 277.5" stroke="#c02424" stroke-width="1"/><path d="M549.6 315.0 L518.4 278.0" stroke="#f03333" stroke-width="1"/><path d="M542.2 310.2 L481.3 313.6" stroke="#ff4444" stroke-width="1"/><path d="M537.7 305.9 L484.1 297.5" stroke="#a82020" stroke-width="1"/><path d="M544.2 309.1 L457.1 311.8" stroke="#a82020" stroke-width="1"/><path d="M554.8 304.8 L482.1 256.7" stroke="#f03333" stroke-width="1"/><path d="M529.4 292.3 L458.3 298.1" stroke="#e03030" stroke-width="1"/><path d="M527.6 296.6 L470.8 264.0" stroke="#c02424" stroke-width="1"/><path d="M545.2 307.2 L451.0 347.7" stroke="#a82020" stroke-width="1"/><path d="M548.2 297.2 L461.9 325.0" stroke="#c02424" stroke-width="1"/><path d="M536.2 311.9 L508.9 262.0" stroke="#c02424" stroke-width="1"/><path d="M550.2 319.6 L475.3 292.9" stroke="#c02424" stroke-width="1"/><path d="M549.0 317.8 L533.0 294.7" stroke="#e03030" stroke-width="1"/><path d="M531.5 307.1 L490.0 272.7" stroke="#f03333" stroke-width="1"/><path d="M539.1 312.1 L493.8 303.7" stroke="#a82020" stroke-width="1"/><path d="M546.2 311.7 L420.3 289.1" stroke="#ff4444" stroke-width="1"/><path d="M532.9 310.1 L492.1 271.2" stroke="#ff3a3a" stroke-width="1"/><path d="M535.7 290.8 L456.1 274.1" stroke="#c02424" stroke-width="1"/><path d="M534.0 304.7 L513.1 282.2" stroke="#f03333" stroke-width="1"/><path d="M554.1 304.3 L491.1 291.8" stroke="#e03030" stroke-width="1"/><path d="M529.0 290.6 L439.7 279.4" stroke="#e03030" stroke-width="1"/><path d="M535.6 299.6 L428.8 302.4" stroke="#ff4444" stroke-width="1"/><path d="M549.6 294.5 L467.6 255.8" stroke="#e03030" stroke-width="1"/><path d="M534.9 293.9 L444.9 303.4" stroke="#c02424" stroke-width="1"/><path d="M553.9 309.3 L491.7 283.3" stroke="#a82020" stroke-width="1"/><path d="M545.7 311.6 L493.2 316.3" stroke="#c02424" stroke-width="1"/><path d="M552.0 299.3 L500.0 278.5" stroke="#ff4444" stroke-width="1"/><path d="M552.5 301.1 L487.8 302.5" stroke="#f03333" stroke-width="1"/><path d="M533.1 304.6 L425.5 316.3" stroke="#ff3a3a" stroke-width="1"/><path d="M539.1 316.0 L497.7 245.9" stroke="#c02424" stroke-width="1"/><path d="M546.4 313.8 L521.2 291.1" stroke="#ff3a3a" stroke-width="1"/><path d="M549.4 304.2 L429.8 294.6" stroke="#ff4444" stroke-width="1"/><path d="M550.6 317.4 L499.6 312.5" stroke="#a82020" stroke-width="1"/><path d="M551.2 307.2 L436.9 329.3" stroke="#f03333" stroke-width="1"/><path d="M533.0 290.2 L457.9 298.1" stroke="#f83030" stroke-width="1"/><path d="M546.7 305.3 L513.5 254.9" stroke="#a82020" stroke-width="1"/><path d="M533.7 315.6 L474.8 332.2" stroke="#f83030" stroke-width="1"/><path d="M532.2 294.1 L448.5 310.2" stroke="#c02424" stroke-width="1"/><path d="M529.0 290.3 L510.6 258.2" stroke="#a82020" stroke-width="1"/><path d="M534.3 315.0 L448.8 284.9" stroke="#e03030" stroke-width="1"/><path d="M527.1 301.7 L504.9 256.7" stroke="#e03030" stroke-width="1"/><path d="M551.2 293.4 L520.0 265.7" stroke="#f03333" stroke-width="1"/><path d="M538.5 293.1 L507.1 251.5" stroke="#c02424" stroke-width="1"/><path d="M530.4 294.6 L415.7 281.9" stroke="#ff4444" stroke-width="1"/><path d="M543.3 292.8 L449.1 334.3" stroke="#ff4444" stroke-width="1"/><path d="M529.8 312.2 L516.9 284.4" stroke="#f03333" stroke-width="1"/><path d="M527.6 292.3 L459.8 317.9" stroke="#c02424" stroke-width="1"/><path d="M546.5 291.0 L460.5 284.4" stroke="#c02424" stroke-width="1"/><path d="M539.2 312.4 L458.4 287.8" stroke="#ff3a3a" stroke-width="1"/><path d="M545.7 293.6 L523.4 269.9" stroke="#ff3a3a" stroke-width="1"/><path d="M542.8 306.7 L498.9 310.7" stroke="#e03030" stroke-width="1"/><path d="M528.7 313.8 L483.7 259.5" stroke="#ff4444" stroke-width="1"/><path d="M532.3 304.7 L514.0 272.3" stroke="#f83030" stroke-width="1"/><path d="M543.3 308.7 L440.2 334.0" stroke="#ff3a3a" stroke-width="1"/><path d="M527.3 295.3 L499.2 245.1" stroke="#f03333" stroke-width="1"/><path d="M528.3 313.8 L478.6 253.3" stroke="#c02424" stroke-width="1"/><path d="M549.9 295.4 L533.8 263.4" stroke="#ff4444" stroke-width="1"/><path d="M540.5 293.4 L509.9 267.0" stroke="#f83030" stroke-width="1"/><path d="M547.2 298.7 L451.3 334.5" stroke="#ff4444" stroke-width="1"/><path d="M535.7 318.9 L472.8 295.8" stroke="#f03333" stroke-width="1"/><path d="M538.5 291.7 L445.5 323.3" stroke="#ff4444" stroke-width="1"/><path d="M554.6 309.2 L517.2 293.4" stroke="#c02424" stroke-width="1"/><path d="M542.5 290.4 L518.9 264.4" stroke="#a82020" stroke-width="1"/><path d="M534.4 308.0 L454.6 283.8" stroke="#ff4444" stroke-width="1"/><path d="M527.8 293.4 L509.1 266.2" stroke="#ff3a3a" stroke-width="1"/><path d="M531.7 313.0 L473.2 292.8" stroke="#e03030" stroke-width="1"/><path d="M529.1 299.0 L428.1 294.9" stroke="#e03030" stroke-width="1"/><path d="M527.1 308.9 L485.1 312.0" stroke="#a82020" stroke-width="1"/><path d="M534.0 308.5 L508.9 276.0" stroke="#e03030" stroke-width="1"/><path d="M535.9 313.6 L437.7 333.2" stroke="#c02424" stroke-width="1"/><path d="M528.5 305.5 L470.4 252.7" stroke="#e03030" stroke-width="1"/><path d="M542.2 317.7 L486.3 287.6" stroke="#ff4444" stroke-width="1"/><path d="M540.5 298.4 L462.3 279.4" stroke="#ff4444" stroke-width="1"/><path d="M534.7 318.8 L487.5 312.6" stroke="#ff3a3a" stroke-width="1"/><path d="M539.3 317.8 L463.2 294.5" stroke="#ff3a3a" stroke-width="1"/><path d="M536.2 301.4 L487.7 295.2" stroke="#c02424" stroke-width="1"/><path d="M526.1 303.6 L444.9 279.9" stroke="#c02424" stroke-width="1"/><path d="M535.3 310.4 L489.0 320.5" stroke="#a82020" stroke-width="1"/><path d="M546.2 317.7 L440.8 338.1" stroke="#f83030" stroke-width="1"/><path d="M554.2 298.1 L516.0 228.6" stroke="#ff4444" stroke-width="1"/><path d="M529.3 316.0 L426.2 310.0" stroke="#ff3a3a" stroke-width="1"/><path d="M553.1 315.4 L448.7 342.7" stroke="#ff4444" stroke-width="1"/><path d="M528.2 307.3 L505.5 278.7" stroke="#e03030" stroke-width="1"/><path d="M552.0 311.3 L508.6 247.8" stroke="#a82020" stroke-width="1"/><path d="M552.1 313.0 L523.3 297.1" stroke="#a82020" stroke-width="1"/><path d="M536.4 300.8 L451.1 264.3" stroke="#e03030" stroke-width="1"/><path d="M530.2 319.5 L479.6 285.1" stroke="#f03333" stroke-width="1"/><path d="M534.8 309.9 L436.7 282.5" stroke="#ff4444" stroke-width="1"/><path d="M552.6 299.2 L493.1 275.6" stroke="#f03333" stroke-width="1"/><path d="M539.5 309.7 L494.9 318.8" stroke="#e03030" stroke-width="1"/><path d="M526.8 316.3 L434.2 292.4" stroke="#ff3a3a" stroke-width="1"/><path d="M539.6 316.1 L445.4 345.6" stroke="#ff3a3a" stroke-width="1"/><path d="M553.5 302.9 L524.7 239.7" stroke="#f03333" stroke-width="1"/><path d="M530.5 310.9 L494.7 299.2" stroke="#e03030" stroke-width="1"/><path d="M528.4 314.5 L422.5 315.6" stroke="#ff4444" stroke-width="1"/><path d="M536.5 306.6 L496.9 295.5" stroke="#e03030" stroke-width="1"/><path d="M532.7 305.3 L486.7 299.9" stroke="#e03030" stroke-width="1"/><path d="M550.7 298.5 L441.7 320.5" stroke="#f83030" stroke-width="1"/><path d="M554.5 309.6 L490.0 322.6" stroke="#a82020" stroke-width="1"/><path d="M547.7 315.2 L504.7 299.7" stroke="#ff4444" stroke-width="1"/><path d="M541.7 312.9 L450.9 304.1" stroke="#e03030" stroke-width="1"/><path d="M541.4 316.4 L497.6 304.3" stroke="#e03030" stroke-width="1"/><path d="M529.4 291.8 L436.8 322.9" stroke="#a82020" stroke-width="1"/><path d="M545.1 300.2 L421.9 313.6" stroke="#f83030" stroke-width="1"/><path d="M533.3 305.4 L518.8 278.2" stroke="#e03030" stroke-width="1"/><path d="M541.2 293.7 L459.5 294.7" stroke="#f03333" stroke-width="1"/><path d="M533.3 317.9 L488.8 314.0" stroke="#a82020" stroke-width="1"/><path d="M532.3 310.4 L465.9 279.7" stroke="#f03333" stroke-width="1"/><path d="M537.8 308.3 L451.4 297.4" stroke="#a82020" stroke-width="1"/><path d="M541.4 296.3 L431.3 286.3" stroke="#c02424" stroke-width="1"/><path d="M544.7 292.2 L515.8 276.2" stroke="#f83030" stroke-width="1"/><path d="M539.2 319.2 L482.0 314.1" stroke="#f83030" stroke-width="1"/><path d="M534.6 305.4 L449.0 316.5" stroke="#f03333" stroke-width="1"/><path d="M554.1 314.8 L496.1 266.8" stroke="#e03030" stroke-width="1"/><path d="M541.4 314.7 L478.4 269.8" stroke="#f83030" stroke-width="1"/><path d="M541.7 316.0 L519.0 295.1" stroke="#ff4444" stroke-width="1"/><path d="M548.4 298.7 L494.0 234.4" stroke="#ff3a3a" stroke-width="1"/><path d="M538.9 311.9 L455.3 342.7" stroke="#f03333" stroke-width="1"/><path d="M536.6 315.6 L449.1 308.5" stroke="#f83030" stroke-width="1"/><path d="M541.4 314.6 L506.5 268.5" stroke="#f83030" stroke-width="1"/><path d="M539.4 294.2 L502.5 282.0" stroke="#c02424" stroke-width="1"/><path d="M537.2 291.3 L465.8 313.7" stroke="#f03333" stroke-width="1"/><path d="M546.1 319.3 L508.3 275.0" stroke="#a82020" stroke-width="1"/><path d="M537.6 312.7 L458.7 317.0" stroke="#ff4444" stroke-width="1"/><path d="M549.0 315.6 L503.6 313.9" stroke="#c02424" stroke-width="1"/><path d="M529.0 306.5 L458.7 317.4" stroke="#f83030" stroke-width="1"/><path d="M535.4 314.8 L479.3 311.1" stroke="#e03030" stroke-width="1"/><path d="M531.4 306.1 L513.5 279.2" stroke="#f83030" stroke-width="1"/><path d="M544.1 299.9 L487.3 284.1" stroke="#c02424" stroke-width="1"/><path d="M546.6 309.6 L493.4 289.1" stroke="#ff3a3a" stroke-width="1"/><path d="M539.5 300.5 L444.3 301.0" stroke="#f83030" stroke-width="1"/><path d="M532.0 315.3 L473.0 267.4" stroke="#a82020" stroke-width="1"/><path d="M529.3 310.5 L439.2 325.4" stroke="#e03030" stroke-width="1"/><path d="M527.2 304.8 L434.4 334.2" stroke="#a82020" stroke-width="1"/><path d="M538.2 292.7 L493.9 267.3" stroke="#e03030" stroke-width="1"/><path d="M527.2 302.0 L483.9 313.5" stroke="#e03030" stroke-width="1"/><path d="M554.8 319.7 L512.9 319.1" stroke="#a82020" stroke-width="1"/><path d="M545.6 305.3 L434.8 332.6" stroke="#a82020" stroke-width="1"/><path d="M530.0 303.0 L417.2 277.8" stroke="#f03333" stroke-width="1"/><path d="M551.2 308.5 L523.8 255.4" stroke="#ff4444" stroke-width="1"/><path d="M542.4 310.0 L461.4 328.9" stroke="#f03333" stroke-width="1"/><path d="M551.1 307.2 L438.0 336.3" stroke="#e03030" stroke-width="1"/><path d="M544.6 291.3 L523.4 269.0" stroke="#a82020" stroke-width="1"/><path d="M541.6 299.8 L512.6 283.6" stroke="#ff4444" stroke-width="1"/><path d="M547.8 309.6 L522.9 269.9" stroke="#c02424" stroke-width="1"/><path d="M549.1 297.0 L452.0 296.2" stroke="#ff3a3a" stroke-width="1"/><path d="M554.4 306.3 L503.8 290.7" stroke="#c02424" stroke-width="1"/><path d="M553.2 301.7 L467.2 280.3" stroke="#ff4444" stroke-width="1"/><path d="M541.5 301.6 L481.2 262.2" stroke="#e03030" stroke-width="1"/><path d="M553.2 313.2 L463.7 347.4" stroke="#a82020" stroke-width="1"/><path d="M543.1 306.6 L485.6 300.2" stroke="#ff3a3a" stroke-width="1"/><path d="M550.7 319.7 L468.8 339.2" stroke="#ff4444" stroke-width="1"/><path d="M529.9 309.6 L445.8 345.1" stroke="#c02424" stroke-width="1"/><path d="M540.7 290.4 L464.1 245.9" stroke="#ff4444" stroke-width="1"/><path d="M554.5 296.4 L503.3 233.5" stroke="#ff3a3a" stroke-width="1"/><path d="M537.2 292.3 L445.9 302.9" stroke="#f03333" stroke-width="1"/><path d="M538.7 301.7 L463.6 330.7" stroke="#ff3a3a" stroke-width="1"/><path d="M553.5 298.9 L496.2 258.8" stroke="#ff4444" stroke-width="1"/><path d="M540.0 307.6 L450.7 298.9" stroke="#f03333" stroke-width="1"/><path d="M552.2 319.1 L427.0 325.8" stroke="#e03030" stroke-width="1"/><path d="M525.5 304.6 L459.2 282.0" stroke="#c02424" stroke-width="1"/><path d="M536.9 313.9 L441.5 292.8" stroke="#c02424" stroke-width="1"/><path d="M531.5 319.3 L492.3 299.7" stroke="#c02424" stroke-width="1"/><path d="M550.3 292.6 L438.3 325.7" stroke="#f03333" stroke-width="1"/><path d="M536.2 312.9 L438.6 342.5" stroke="#a82020" stroke-width="1"/><path d="M541.6 318.5 L485.7 293.0" stroke="#c02424" stroke-width="1"/><path d="M530.6 295.5 L428.7 278.6" stroke="#a82020" stroke-width="1"/><path d="M552.9 312.8 L501.2 279.1" stroke="#e03030" stroke-width="1"/><path d="M543.3 305.8 L436.3 294.9" stroke="#f83030" stroke-width="1"/><path d="M530.5 312.5 L484.0 256.0" stroke="#ff4444" stroke-width="1"/><path d="M539.1 296.2 L447.6 316.5" stroke="#f83030" stroke-width="1"/><path d="M537.4 314.9 L453.1 321.8" stroke="#ff3a3a" stroke-width="1"/><path d="M531.7 304.5 L430.4 287.3" stroke="#e03030" stroke-width="1"/><path d="M547.5 313.1 L522.5 283.7" stroke="#e03030" stroke-width="1"/><path d="M541.4 318.8 L482.8 319.7" stroke="#ff3a3a" stroke-width="1"/><path d="M535.7 317.8 L490.7 331.5" stroke="#f03333" stroke-width="1"/><path d="M533.1 305.3 L483.0 324.7" stroke="#e03030" stroke-width="1"/><path d="M555.0 306.8 L442.0 324.6" stroke="#ff3a3a" stroke-width="1"/><path d="M540.6 309.4 L495.2 321.8" stroke="#c02424" stroke-width="1"/><path d="M541.5 316.7 L487.0 305.4" stroke="#a82020" stroke-width="1"/><path d="M530.5 295.6 L463.9 263.9" stroke="#a82020" stroke-width="1"/><path d="M540.9 291.1 L427.0 315.4" stroke="#a82020" stroke-width="1"/><path d="M541.8 312.3 L497.6 257.4" stroke="#e03030" stroke-width="1"/><path d="M549.2 297.9 L506.2 312.6" stroke="#f83030" stroke-width="1"/><path d="M530.1 315.2 L497.3 295.6" stroke="#e03030" stroke-width="1"/><path d="M546.7 309.0 L479.6 259.1" stroke="#c02424" stroke-width="1"/><path d="M553.7 296.0 L515.0 311.3" stroke="#a82020" stroke-width="1"/><path d="M530.8 297.9 L437.2 331.8" stroke="#f03333" stroke-width="1"/><path d="M527.5 304.1 L456.7 298.4" stroke="#f83030" stroke-width="1"/><path d="M548.4 305.3 L504.4 317.4" stroke="#ff4444" stroke-width="1"/><path d="M551.8 306.9 L520.8 260.8" stroke="#f03333" stroke-width="1"/><path d="M528.7 311.6 L459.4 319.7" stroke="#ff3a3a" stroke-width="1"/><path d="M548.0 307.2 L433.7 303.3" stroke="#ff3a3a" stroke-width="1"/><path d="M533.6 300.6 L415.8 290.6" stroke="#f83030" stroke-width="1"/><path d="M542.8 318.7 L521.9 284.4" stroke="#f03333" stroke-width="1"/><path d="M547.6 290.5 L450.7 290.4" stroke="#c02424" stroke-width="1"/><path d="M527.5 290.2 L441.3 294.2" stroke="#c02424" stroke-width="1"/><path d="M527.2 305.3 L493.5 278.5" stroke="#c02424" stroke-width="1"/><path d="M539.6 294.8 L492.5 263.2" stroke="#c02424" stroke-width="1"/><path d="M551.4 312.1 L487.6 306.4" stroke="#c02424" stroke-width="1"/><path d="M554.1 311.9 L493.3 262.7" stroke="#f83030" stroke-width="1"/><path d="M539.9 310.1 L493.9 295.3" stroke="#c02424" stroke-width="1"/><path d="M527.2 314.6 L451.3 276.3" stroke="#e03030" stroke-width="1"/><path d="M528.3 302.0 L486.5 304.1" stroke="#a82020" stroke-width="1"/><path d="M532.4 314.1 L487.2 264.8" stroke="#ff4444" stroke-width="1"/><path d="M553.4 317.5 L428.5 300.9" stroke="#e03030" stroke-width="1"/><path d="M547.0 310.1 L496.4 289.2" stroke="#ff4444" stroke-width="1"/><path d="M541.2 318.6 L482.2 299.7" stroke="#f03333" stroke-width="1"/><path d="M545.9 310.7 L508.6 268.6" stroke="#c02424" stroke-width="1"/><path d="M540.6 317.5 L475.4 328.5" stroke="#ff4444" stroke-width="1"/><path d="M539.0 292.3 L476.9 300.6" stroke="#a82020" stroke-width="1"/><path d="M533.9 307.9 L459.6 323.8" stroke="#f03333" stroke-width="1"/><path d="M552.9 301.2 L472.6 306.0" stroke="#c02424" stroke-width="1"/><path d="M525.3 292.6 L420.4 285.9" stroke="#ff4444" stroke-width="1"/><path d="M549.7 297.5 L430.7 331.1" stroke="#f83030" stroke-width="1"/><path d="M547.6 311.3 L490.6 259.5" stroke="#ff3a3a" stroke-width="1"/><path d="M526.2 292.6 L492.0 267.4" stroke="#a82020" stroke-width="1"/><path d="M528.8 299.8 L422.5 293.8" stroke="#c02424" stroke-width="1"/><path d="M527.8 317.5 L481.6 325.5" stroke="#c02424" stroke-width="1"/><path d="M538.5 294.0 L438.9 332.1" stroke="#f03333" stroke-width="1"/><path d="M547.3 315.6 L439.9 309.1" stroke="#c02424" stroke-width="1"/><path d="M543.5 301.6 L509.5 229.9" stroke="#e03030" stroke-width="1"/><path d="M555.0 309.7 L438.2 310.9" stroke="#f83030" stroke-width="1"/><path d="M547.8 293.6 L508.5 241.2" stroke="#f83030" stroke-width="1"/><path d="M553.8 315.6 L510.5 296.5" stroke="#e03030" stroke-width="1"/><path d="M548.3 310.2 L525.7 289.7" stroke="#ff4444" stroke-width="1"/><path d="M542.2 318.7 L514.6 283.4" stroke="#f03333" stroke-width="1"/><path d="M542.6 316.7 L497.8 300.9" stroke="#e03030" stroke-width="1"/><path d="M544.1 306.2 L528.1 284.1" stroke="#f03333" stroke-width="1"/><path d="M535.8 317.1 L440.7 341.0" stroke="#e03030" stroke-width="1"/><path d="M534.1 292.0 L517.5 256.9" stroke="#c02424" stroke-width="1"/><path d="M543.0 315.2 L518.3 264.4" stroke="#a82020" stroke-width="1"/><path d="M528.7 299.9 L482.1 309.6" stroke="#ff3a3a" stroke-width="1"/><path d="M551.1 316.7 L497.3 280.7" stroke="#c02424" stroke-width="1"/><path d="M550.3 309.5 L518.3 278.5" stroke="#a82020" stroke-width="1"/><path d="M539.2 293.6 L467.5 283.4" stroke="#f03333" stroke-width="1"/><path d="M547.6 291.4 L530.3 265.8" stroke="#f83030" stroke-width="1"/><path d="M547.5 298.9 L506.7 260.8" stroke="#ff4444" stroke-width="1"/><path d="M531.4 316.1 L439.2 292.7" stroke="#f83030" stroke-width="1"/><path d="M530.2 300.1 L485.8 254.9" stroke="#c02424" stroke-width="1"/><path d="M542.9 312.3 L454.4 323.8" stroke="#e03030" stroke-width="1"/><path d="M540.5 296.4 L500.1 297.7" stroke="#c02424" stroke-width="1"/><path d="M549.6 294.5 L496.7 263.3" stroke="#f83030" stroke-width="1"/><path d="M542.4 303.8 L485.7 279.4" stroke="#f83030" stroke-width="1"/><path d="M525.2 290.3 L482.9 280.7" stroke="#ff4444" stroke-width="1"/><path d="M532.8 299.4 L464.4 317.2" stroke="#ff4444" stroke-width="1"/><path d="M538.9 297.4 L518.2 260.1" stroke="#c02424" stroke-width="1"/><path d="M552.7 294.8 L497.2 257.5" stroke="#a82020" stroke-width="1"/><path d="M551.3 314.1 L483.1 306.9" stroke="#f03333" stroke-width="1"/><path d="M543.0 303.2 L473.7 285.8" stroke="#a82020" stroke-width="1"/><path d="M551.8 317.5 L491.9 273.1" stroke="#f03333" stroke-width="1"/><path d="M529.2 291.7 L503.5 256.1" stroke="#f03333" stroke-width="1"/><path d="M539.8 311.4 L480.0 276.0" stroke="#f03333" stroke-width="1"/><path d="M545.6 299.8 L503.6 303.0" stroke="#a82020" stroke-width="1"/><path d="M546.5 312.6 L427.0 327.9" stroke="#f03333" stroke-width="1"/><path d="M529.4 319.0 L472.3 281.2" stroke="#c02424" stroke-width="1"/><path d="M527.4 316.0 L431.2 325.5" stroke="#f83030" stroke-width="1"/><path d="M542.8 292.3 L429.8 317.4" stroke="#f83030" stroke-width="1"/><path d="M554.6 294.7 L523.6 266.6" stroke="#ff3a3a" stroke-width="1"/><path d="M541.5 292.4 L490.4 312.5" stroke="#f03333" stroke-width="1"/><path d="M554.7 292.6 L506.5 311.6" stroke="#ff3a3a" stroke-width="1"/><path d="M529.2 301.4 L428.8 321.5" stroke="#ff3a3a" stroke-width="1"/><path d="M525.0 298.6 L472.9 240.0" stroke="#f83030" stroke-width="1"/><path d="M528.0 311.7 L450.9 341.5" stroke="#a82020" stroke-width="1"/><path d="M536.3 310.7 L503.4 248.7" stroke="#f83030" stroke-width="1"/><path d="M529.6 311.8 L504.8 294.9" stroke="#ff4444" stroke-width="1"/><path d="M529.8 306.2 L462.0 255.6" stroke="#ff3a3a" stroke-width="1"/><path d="M526.3 309.2 L425.4 323.8" stroke="#ff3a3a" stroke-width="1"/><path d="M549.0 307.0 L433.1 329.4" stroke="#f03333" stroke-width="1"/><path d="M552.8 309.5 L499.8 279.7" stroke="#a82020" stroke-width="1"/><path d="M553.9 295.6 L531.4 248.1" stroke="#f03333" stroke-width="1"/><path d="M536.8 296.6 L468.9 293.3" stroke="#f83030" stroke-width="1"/><path d="M545.4 296.7 L460.1 306.9" stroke="#ff3a3a" stroke-width="1"/><path d="M547.3 313.4 L495.1 296.9" stroke="#f03333" stroke-width="1"/><path d="M546.1 304.9 L529.0 279.4" stroke="#a82020" stroke-width="1"/><path d="M542.1 302.1 L437.4 330.5" stroke="#f83030" stroke-width="1"/><path d="M541.6 307.5 L451.2 327.4" stroke="#a82020" stroke-width="1"/><path d="M542.4 307.9 L527.5 275.8" stroke="#ff3a3a" stroke-width="1"/><path d="M548.3 313.1 L454.6 317.6" stroke="#ff4444" stroke-width="1"/><path d="M534.1 302.0 L501.5 230.6" stroke="#e03030" stroke-width="1"/><path d="M525.4 308.8 L480.8 269.8" stroke="#ff3a3a" stroke-width="1"/><path d="M546.7 292.5 L433.1 295.3" stroke="#c02424" stroke-width="1"/><path d="M552.2 309.1 L481.5 277.5" stroke="#c02424" stroke-width="1"/><path d="M531.3 294.4 L471.7 290.8" stroke="#ff4444" stroke-width="1"/><path d="M535.5 319.3 L481.3 331.5" stroke="#ff4444" stroke-width="1"/><path d="M544.7 290.0 L468.9 276.4" stroke="#ff3a3a" stroke-width="1"/><path d="M553.0 295.6 L430.4 328.3" stroke="#c02424" stroke-width="1"/><path d="M540.8 290.9 L506.2 279.4" stroke="#f83030" stroke-width="1"/><path d="M526.2 307.4 L423.8 322.8" stroke="#a82020" stroke-width="1"/><path d="M526.4 295.4 L514.4 269.1" stroke="#c02424" stroke-width="1"/><path d="M525.8 301.8 L484.0 286.1" stroke="#c02424" stroke-width="1"/><path d="M554.3 311.2 L460.4 303.6" stroke="#e03030" stroke-width="1"/><path d="M534.0 306.6 L508.4 289.0" stroke="#ff4444" stroke-width="1"/><path d="M537.6 319.6 L466.7 341.4" stroke="#c02424" stroke-width="1"/><path d="M533.4 301.9 L506.1 290.5" stroke="#ff3a3a" stroke-width="1"/><path d="M531.0 308.5 L507.6 292.1" stroke="#f03333" stroke-width="1"/><path d="M534.3 317.9 L518.9 290.0" stroke="#ff3a3a" stroke-width="1"/><path d="M577.6 324.4 L591.1 359.4" stroke="#ff3a3a" stroke-width="1"/><path d="M572.8 305.7 L538.2 330.2" stroke="#a82020" stroke-width="1"/><path d="M546.0 305.2 L528.6 337.1" stroke="#ff3a3a" stroke-width="1"/><path d="M564.4 308.6 L549.6 356.7" stroke="#c02424" stroke-width="1"/><path d="M539.3 311.7 L538.6 342.5" stroke="#a82020" stroke-width="1"/><path d="M550.9 314.4 L529.6 350.5" stroke="#ff3a3a" stroke-width="1"/><path d="M569.1 323.5 L576.6 371.4" stroke="#ff4444" stroke-width="1"/><path d="M558.2 323.0 L555.3 386.7" stroke="#f83030" stroke-width="1"/><path d="M530.2 322.9 L497.1 352.8" stroke="#f03333" stroke-width="1"/><path d="M561.8 311.8 L546.3 327.6" stroke="#ff4444" stroke-width="1"/><path d="M573.6 315.5 L557.4 337.6" stroke="#ff4444" stroke-width="1"/><path d="M556.3 316.3 L500.0 354.0" stroke="#f03333" stroke-width="1"/><path d="M546.7 320.1 L497.9 353.5" stroke="#ff4444" stroke-width="1"/><path d="M557.4 307.6 L533.3 356.8" stroke="#ff4444" stroke-width="1"/><path d="M576.3 323.6 L564.1 344.9" stroke="#f83030" stroke-width="1"/><path d="M533.0 317.1 L545.8 356.9" stroke="#f03333" stroke-width="1"/><path d="M546.2 320.9 L533.7 350.0" stroke="#c02424" stroke-width="1"/><path d="M554.3 313.4 L526.6 354.0" stroke="#ff3a3a" stroke-width="1"/><path d="M554.5 308.9 L532.6 342.7" stroke="#e03030" stroke-width="1"/><path d="M541.5 311.4 L526.0 336.0" stroke="#e03030" stroke-width="1"/><path d="M535.9 309.5 L519.8 369.6" stroke="#ff3a3a" stroke-width="1"/><path d="M561.8 317.0 L548.5 339.0" stroke="#f83030" stroke-width="1"/><path d="M535.3 320.1 L530.2 364.6" stroke="#c02424" stroke-width="1"/><path d="M576.7 313.7 L555.4 359.8" stroke="#e03030" stroke-width="1"/><path d="M536.9 310.3 L521.3 378.4" stroke="#a82020" stroke-width="1"/><path d="M546.4 324.7 L547.8 374.6" stroke="#ff3a3a" stroke-width="1"/><path d="M535.1 318.5 L537.4 380.8" stroke="#a82020" stroke-width="1"/><path d="M532.5 314.7 L481.6 346.9" stroke="#f03333" stroke-width="1"/><path d="M551.0 322.0 L560.9 362.9" stroke="#c02424" stroke-width="1"/><path d="M533.3 323.5 L544.0 356.1" stroke="#a82020" stroke-width="1"/><path d="M537.6 314.0 L523.2 329.6" stroke="#f83030" stroke-width="1"/><path d="M561.4 316.9 L565.1 346.2" stroke="#c02424" stroke-width="1"/><path d="M532.5 323.7 L510.8 344.3" stroke="#ff3a3a" stroke-width="1"/><path d="M537.0 319.9 L556.1 359.9" stroke="#ff4444" stroke-width="1"/><path d="M542.6 308.9 L553.3 329.3" stroke="#c02424" stroke-width="1"/><path d="M576.1 311.9 L558.7 379.6" stroke="#e03030" stroke-width="1"/><path d="M576.2 323.7 L557.7 337.6" stroke="#f83030" stroke-width="1"/><path d="M541.9 306.2 L516.6 344.1" stroke="#e03030" stroke-width="1"/><path d="M567.2 314.0 L571.3 337.6" stroke="#ff3a3a" stroke-width="1"/><path d="M552.5 311.8 L565.0 334.2" stroke="#e03030" stroke-width="1"/><path d="M570.8 313.7 L546.0 365.5" stroke="#ff4444" stroke-width="1"/><path d="M546.8 306.2 L529.2 332.4" stroke="#ff4444" stroke-width="1"/><path d="M540.8 305.2 L543.8 360.6" stroke="#f83030" stroke-width="1"/><path d="M553.0 306.3 L555.5 333.9" stroke="#f83030" stroke-width="1"/><path d="M572.2 307.8 L573.3 365.8" stroke="#f03333" stroke-width="1"/><path d="M548.9 315.6 L543.6 348.9" stroke="#c02424" stroke-width="1"/><path d="M568.0 316.2 L560.7 340.2" stroke="#f83030" stroke-width="1"/><path d="M552.4 307.8 L576.1 367.6" stroke="#ff3a3a" stroke-width="1"/><path d="M538.5 324.4 L542.9 357.6" stroke="#ff4444" stroke-width="1"/><path d="M578.1 322.7 L588.9 341.7" stroke="#ff3a3a" stroke-width="1"/><path d="M546.7 309.6 L541.7 357.1" stroke="#a82020" stroke-width="1"/><path d="M564.1 323.3 L532.9 382.7" stroke="#ff3a3a" stroke-width="1"/><path d="M543.4 313.3 L550.6 338.2" stroke="#f83030" stroke-width="1"/><path d="M556.2 320.7 L531.9 351.8" stroke="#ff3a3a" stroke-width="1"/><path d="M531.7 322.2 L532.7 378.6" stroke="#c02424" stroke-width="1"/><path d="M549.1 318.6 L525.5 370.3" stroke="#ff3a3a" stroke-width="1"/><path d="M554.2 321.8 L551.6 368.0" stroke="#e03030" stroke-width="1"/><path d="M560.9 314.4 L536.6 345.9" stroke="#e03030" stroke-width="1"/><path d="M566.5 313.2 L528.2 337.1" stroke="#ff3a3a" stroke-width="1"/><path d="M570.9 310.8 L576.3 362.4" stroke="#f03333" stroke-width="1"/><path d="M531.4 309.9 L514.8 349.5" stroke="#e03030" stroke-width="1"/><path d="M541.4 307.7 L519.0 323.5" stroke="#c02424" stroke-width="1"/><path d="M537.0 310.5 L537.7 346.5" stroke="#f83030" stroke-width="1"/><path d="M554.2 320.2 L574.4 369.0" stroke="#ff4444" stroke-width="1"/><path d="M541.5 318.0 L539.7 380.5" stroke="#ff3a3a" stroke-width="1"/><path d="M559.4 319.4 L552.2 346.7" stroke="#e03030" stroke-width="1"/><path d="M540.7 311.6 L555.5 352.1" stroke="#e03030" stroke-width="1"/><path d="M544.1 310.9 L550.7 377.1" stroke="#c02424" stroke-width="1"/><path d="M537.9 312.9 L559.5 357.4" stroke="#e03030" stroke-width="1"/><path d="M552.2 310.7 L557.1 338.8" stroke="#f83030" stroke-width="1"/><path d="M591.9 285.6 L661.7 286.5" stroke="#ff4444" stroke-width="1.2"/><path d="M585.8 295.9 L606.2 286.7" stroke="#f83030" stroke-width="1.2"/><path d="M576.8 306.0 L625.7 325.1" stroke="#f03333" stroke-width="1.2"/><path d="M575.5 293.4 L598.7 291.1" stroke="#f03333" stroke-width="1.2"/><path d="M576.0 310.9 L627.5 263.6" stroke="#f83030" stroke-width="1.2"/><path d="M593.4 308.8 L609.4 312.0" stroke="#e03030" stroke-width="1.2"/><path d="M577.3 306.0 L605.8 293.6" stroke="#e03030" stroke-width="1.2"/><path d="M595.3 314.1 L626.8 303.9" stroke="#e03030" stroke-width="1.2"/><path d="M592.9 302.8 L615.1 316.1" stroke="#ff4444" stroke-width="1.2"/><path d="M599.6 299.1 L649.6 276.5" stroke="#a82020" stroke-width="1.2"/><path d="M593.0 310.1 L612.3 287.9" stroke="#e03030" stroke-width="1.2"/><path d="M595.7 312.6 L643.7 336.8" stroke="#f83030" stroke-width="1.2"/><path d="M575.2 300.8 L611.5 301.5" stroke="#e03030" stroke-width="1.2"/><path d="M575.9 298.7 L596.5 310.3" stroke="#e03030" stroke-width="1.2"/><path d="M594.6 305.2 L612.9 275.6" stroke="#f83030" stroke-width="1.2"/><path d="M578.9 302.0 L634.1 280.9" stroke="#f83030" stroke-width="1.2"/><path d="M595.1 299.8 L640.8 295.8" stroke="#ff4444" stroke-width="1.2"/><path d="M597.4 299.4 L649.5 304.4" stroke="#c02424" stroke-width="1.2"/><path d="M591.8 296.3 L622.9 313.8" stroke="#f83030" stroke-width="1.2"/><path d="M584.5 295.5 L623.1 338.6" stroke="#ff4444" stroke-width="1.2"/><path d="M593.9 293.5 L628.0 325.0" stroke="#c02424" stroke-width="1.2"/><path d="M589.3 314.9 L628.2 264.1" stroke="#f83030" stroke-width="1.2"/><path d="M586.2 303.6 L603.2 299.5" stroke="#f03333" stroke-width="1.2"/><path d="M593.0 291.5 L642.7 330.7" stroke="#ff4444" stroke-width="1.2"/><path d="M594.7 309.1 L662.8 301.0" stroke="#ff4444" stroke-width="1.2"/><path d="M599.4 312.3 L629.3 351.6" stroke="#f03333" stroke-width="1.2"/><path d="M590.4 307.9 L604.9 298.6" stroke="#f83030" stroke-width="1.2"/><path d="M591.9 296.1 L620.5 309.5" stroke="#a82020" stroke-width="1.2"/><path d="M593.6 288.1 L631.2 316.7" stroke="#f03333" stroke-width="1.2"/><path d="M588.1 304.4 L620.8 249.0" stroke="#a82020" stroke-width="1.2"/><path d="M587.2 296.7 L632.6 321.0" stroke="#ff4444" stroke-width="1.2"/><path d="M584.1 297.6 L639.8 321.9" stroke="#e03030" stroke-width="1.2"/><path d="M580.1 305.0 L596.4 321.9" stroke="#f03333" stroke-width="1.2"/><path d="M589.0 304.3 L623.6 351.4" stroke="#e03030" stroke-width="1.2"/><path d="M595.2 312.1 L610.2 328.8" stroke="#a82020" stroke-width="1.2"/><path d="M596.3 304.3 L619.9 287.8" stroke="#ff4444" stroke-width="1.2"/><path d="M599.4 307.7 L646.1 328.7" stroke="#f83030" stroke-width="1.2"/><path d="M588.5 294.8 L613.6 297.4" stroke="#e03030" stroke-width="1.2"/><path d="M571.6 305.7 L525.3 354.8" stroke="#f83030" stroke-width="1"/><path d="M565.6 316.5 L550.9 338.5" stroke="#c02424" stroke-width="1"/><path d="M555.5 312.7 L521.9 360.0" stroke="#c02424" stroke-width="1"/><path d="M539.4 327.2 L495.4 354.0" stroke="#ff4444" stroke-width="1"/><path d="M552.4 312.4 L535.1 330.9" stroke="#c02424" stroke-width="1"/><path d="M543.8 306.4 L496.1 344.9" stroke="#f03333" stroke-width="1"/><path d="M521.4 308.0 L508.7 331.4" stroke="#c02424" stroke-width="1"/><path d="M542.1 301.9 L497.8 333.7" stroke="#ff3a3a" stroke-width="1"/><path d="M555.2 304.5 L526.8 333.0" stroke="#ff3a3a" stroke-width="1"/><path d="M521.3 325.4 L494.1 363.0" stroke="#e03030" stroke-width="1"/><path d="M570.5 320.7 L550.5 340.0" stroke="#f03333" stroke-width="1"/><path d="M570.9 326.1 L539.1 371.7" stroke="#ff3a3a" stroke-width="1"/><path d="M553.2 317.5 L505.6 349.4" stroke="#c02424" stroke-width="1"/><path d="M574.4 327.9 L533.2 378.4" stroke="#a82020" stroke-width="1"/><path d="M555.8 328.9 L534.1 365.4" stroke="#e03030" stroke-width="1"/><path d="M569.1 302.5 L535.9 355.3" stroke="#a82020" stroke-width="1"/><path d="M528.2 303.3 L488.6 338.4" stroke="#c02424" stroke-width="1"/><path d="M544.2 305.6 L521.1 324.7" stroke="#f83030" stroke-width="1"/><path d="M544.0 316.8 L501.0 360.4" stroke="#e03030" stroke-width="1"/><path d="M571.6 308.4 L519.5 340.8" stroke="#ff4444" stroke-width="1"/><path d="M552.5 314.7 L510.5 352.1" stroke="#a82020" stroke-width="1"/><path d="M565.7 309.0 L546.8 336.5" stroke="#ff4444" stroke-width="1"/><path d="M553.1 311.9 L530.8 336.4" stroke="#f83030" stroke-width="1"/><path d="M544.8 308.5 L504.9 357.8" stroke="#f83030" stroke-width="1"/><path d="M558.2 314.8 L535.8 376.1" stroke="#e03030" stroke-width="1"/><path d="M567.7 302.2 L512.9 338.6" stroke="#c02424" stroke-width="1"/><path d="M543.2 323.7 L522.6 374.2" stroke="#ff4444" stroke-width="1"/><path d="M551.6 306.2 L526.4 321.2" stroke="#a82020" stroke-width="1"/><path d="M564.1 321.2 L534.0 353.8" stroke="#a82020" stroke-width="1"/><path d="M518.1 320.1 L486.5 351.1" stroke="#a82020" stroke-width="1"/><path d="M541.9 304.8 L522.7 361.5" stroke="#a82020" stroke-width="1"/><path d="M521.9 306.4 L501.9 353.2" stroke="#f83030" stroke-width="1"/><path d="M535.0 304.9 L512.2 320.1" stroke="#f83030" stroke-width="1"/><path d="M521.0 325.7 L488.8 373.3" stroke="#c02424" stroke-width="1"/><path d="M545.4 325.8 L524.8 359.7" stroke="#a82020" stroke-width="1"/><path d="M518.4 304.5 L504.5 329.9" stroke="#ff4444" stroke-width="1"/><path d="M563.4 303.5 L505.8 339.5" stroke="#c02424" stroke-width="1"/><path d="M519.3 329.0 L487.5 351.4" stroke="#ff3a3a" stroke-width="1"/><path d="M555.6 328.8 L530.9 384.6" stroke="#f03333" stroke-width="1"/><path d="M522.0 309.9 L488.5 345.5" stroke="#a82020" stroke-width="1"/><path d="M565.9 311.4 L538.1 349.3" stroke="#e03030" stroke-width="1"/><path d="M545.8 328.2 L532.2 361.5" stroke="#f03333" stroke-width="1"/><path d="M573.5 320.7 L552.8 355.2" stroke="#ff4444" stroke-width="1"/><path d="M532.0 322.7 L495.6 366.5" stroke="#f03333" stroke-width="1"/><path d="M531.2 301.4 L492.2 355.7" stroke="#e03030" stroke-width="1"/><path d="M550.7 308.5 L529.5 363.4" stroke="#a82020" stroke-width="1"/><path d="M534.3 308.5 L511.2 327.7" stroke="#ff3a3a" stroke-width="1"/><path d="M556.5 321.8 L521.9 344.2" stroke="#f83030" stroke-width="1"/><path d="M538.8 305.3 L487.8 339.4" stroke="#a82020" stroke-width="1"/><path d="M547.6 303.2 L537.2 329.1" stroke="#a82020" stroke-width="1"/><path d="M561.4 325.9 L542.3 354.2" stroke="#ff3a3a" stroke-width="1"/><path d="M551.4 325.8 L532.7 364.9" stroke="#c02424" stroke-width="1"/><path d="M554.9 320.6 L541.2 342.8" stroke="#f83030" stroke-width="1"/><path d="M524.3 327.7 L477.6 373.9" stroke="#e03030" stroke-width="1"/><path d="M555.0 302.8 L529.1 363.2" stroke="#f03333" stroke-width="1"/><path d="M569.0 318.6 L545.5 335.5" stroke="#ff4444" stroke-width="1"/><path d="M571.4 309.1 L542.4 345.7" stroke="#a82020" stroke-width="1"/><path d="M571.8 326.5 L534.8 359.4" stroke="#f83030" stroke-width="1"/><path d="M570.3 301.0 L529.7 347.9" stroke="#ff4444" stroke-width="1"/><path d="M535.8 311.6 L515.3 360.1" stroke="#a82020" stroke-width="1"/><path d="M519.6 315.2 L485.0 365.1" stroke="#ff3a3a" stroke-width="1"/><path d="M551.5 302.4 L495.7 335.4" stroke="#a82020" stroke-width="1"/><path d="M554.5 305.9 L544.3 334.1" stroke="#a82020" stroke-width="1"/><path d="M523.4 328.7 L505.4 352.5" stroke="#f83030" stroke-width="1"/><path d="M563.1 314.2 L515.0 361.2" stroke="#a82020" stroke-width="1"/><path d="M554.1 315.2 L526.0 348.1" stroke="#ff4444" stroke-width="1"/><path d="M525.0 313.7 L494.9 341.2" stroke="#f03333" stroke-width="1"/><path d="M535.0 301.2 L503.2 337.7" stroke="#ff4444" stroke-width="1"/><path d="M552.9 319.3 L528.0 335.3" stroke="#f03333" stroke-width="1"/><path d="M538.4 322.8 L502.2 353.2" stroke="#c02424" stroke-width="1"/><path d="M552.1 307.3 L514.5 355.3" stroke="#e03030" stroke-width="1"/><path d="M550.4 315.8 L515.4 367.0" stroke="#ff4444" stroke-width="1"/><path d="M552.2 323.4 L496.1 356.4" stroke="#f83030" stroke-width="1"/><path d="M518.1 302.4 L495.8 340.8" stroke="#a82020" stroke-width="1"/><path d="M562.4 304.3 L540.3 336.2" stroke="#e03030" stroke-width="1"/><path d="M560.2 315.2 L535.5 355.7" stroke="#a82020" stroke-width="1"/><path d="M562.6 317.7 L533.4 365.4" stroke="#f83030" stroke-width="1"/><path d="M569.0 301.6 L546.8 322.8" stroke="#ff3a3a" stroke-width="1"/><path d="M526.2 315.2 L498.1 339.0" stroke="#e03030" stroke-width="1"/><path d="M537.1 322.1 L521.7 358.4" stroke="#a82020" stroke-width="1"/><path d="M570.1 323.9 L554.8 348.5" stroke="#e03030" stroke-width="1"/><path d="M551.9 329.9 L534.8 366.0" stroke="#ff3a3a" stroke-width="1"/><path d="M522.3 327.6 L494.6 369.6" stroke="#ff3a3a" stroke-width="1"/><path d="M540.3 317.4 L504.9 342.4" stroke="#ff4444" stroke-width="1"/><path d="M560.9 321.0 L542.6 346.7" stroke="#c02424" stroke-width="1"/><path d="M518.0 322.0 L496.8 368.3" stroke="#f03333" stroke-width="1"/><path d="M569.2 309.4 L540.5 331.9" stroke="#a82020" stroke-width="1"/><path d="M568.1 323.5 L522.9 372.8" stroke="#e03030" stroke-width="1"/><path d="M530.7 327.3 L511.8 361.6" stroke="#f03333" stroke-width="1"/><path d="M546.2 304.4 L517.9 323.7" stroke="#f03333" stroke-width="1"/><path d="M563.2 325.1 L552.2 348.2" stroke="#ff4444" stroke-width="1"/><path d="M547.7 320.5 L514.1 369.3" stroke="#ff3a3a" stroke-width="1"/><path d="M561.5 316.6 L521.3 368.3" stroke="#e03030" stroke-width="1"/><path d="M537.7 320.2 L517.3 366.5" stroke="#a82020" stroke-width="1"/><path d="M548.9 306.0 L525.4 322.1" stroke="#e03030" stroke-width="1"/><path d="M531.7 309.8 L481.9 339.2" stroke="#c02424" stroke-width="1"/><path d="M530.2 317.9 L505.2 347.0" stroke="#ff3a3a" stroke-width="1"/><path d="M537.9 312.2 L509.0 343.3" stroke="#f83030" stroke-width="1"/><path d="M564.6 317.3 L547.2 340.7" stroke="#ff3a3a" stroke-width="1"/><path d="M523.6 301.9 L503.4 334.1" stroke="#ff3a3a" stroke-width="1"/><path d="M540.7 318.0 L529.0 340.6" stroke="#ff3a3a" stroke-width="1"/><path d="M527.8 327.0 L507.4 372.3" stroke="#a82020" stroke-width="1"/><path d="M540.0 321.3 L519.6 358.4" stroke="#e03030" stroke-width="1"/><path d="M557.7 322.8 L526.6 353.7" stroke="#e03030" stroke-width="1"/><path d="M518.4 310.5 L482.9 340.9" stroke="#c02424" stroke-width="1"/><path d="M543.1 301.1 L522.1 358.9" stroke="#ff3a3a" stroke-width="1"/><path d="M518.9 327.2 L491.8 383.6" stroke="#ff3a3a" stroke-width="1"/><path d="M526.7 324.4 L474.6 365.2" stroke="#f03333" stroke-width="1"/><path d="M518.6 306.0 L486.8 328.1" stroke="#c02424" stroke-width="1"/><path d="M542.8 317.0 L514.2 344.9" stroke="#f83030" stroke-width="1"/><path d="M524.6 310.3 L481.8 358.2" stroke="#f83030" stroke-width="1"/><path d="M545.4 313.6 L505.6 348.8" stroke="#a82020" stroke-width="1"/><path d="M556.6 308.9 L529.0 336.7" stroke="#f03333" stroke-width="1"/><path d="M539.0 314.4 L511.2 353.0" stroke="#ff4444" stroke-width="1"/><path d="M563.5 307.7 L547.4 330.4" stroke="#f83030" stroke-width="1"/><path d="M566.5 328.2 L540.4 363.7" stroke="#ff3a3a" stroke-width="1"/><path d="M567.9 324.2 L533.9 353.3" stroke="#c02424" stroke-width="1"/><path d="M533.4 317.0 L502.4 355.1" stroke="#ff4444" stroke-width="1"/><path d="M524.0 317.4 L502.4 376.0" stroke="#e03030" stroke-width="1"/><path d="M565.8 313.2 L529.3 357.1" stroke="#ff4444" stroke-width="1"/><path d="M519.8 329.2 L482.5 365.3" stroke="#ff3a3a" stroke-width="1"/><path d="M515.2 322.3 L493.8 336.0" stroke="#e03030" stroke-width="1"/><path d="M552.5 307.7 L533.6 353.7" stroke="#e03030" stroke-width="1"/><path d="M559.1 303.0 L544.4 341.5" stroke="#e03030" stroke-width="1"/><path d="M564.0 313.0 L549.6 350.8" stroke="#ff4444" stroke-width="1"/><path d="M564.7 303.8 L542.5 323.2" stroke="#f83030" stroke-width="1"/><path d="M566.4 307.9 L549.8 347.5" stroke="#c02424" stroke-width="1"/><path d="M539.6 311.0 L510.5 356.7" stroke="#f03333" stroke-width="1"/><path d="M574.9 310.0 L529.1 340.0" stroke="#ff4444" stroke-width="1"/><path d="M558.8 320.2 L528.8 357.0" stroke="#f83030" stroke-width="1"/><path d="M578.4 303.3 L578.0 227.6" stroke="#e03030" stroke-width="1.1"/><path d="M580.6 289.0 L595.2 244.0" stroke="#ff3a3a" stroke-width="1.1"/><path d="M589.5 296.3 L646.8 230.9" stroke="#c02424" stroke-width="1.1"/><path d="M585.9 297.9 L584.0 256.2" stroke="#ff3a3a" stroke-width="1.1"/><path d="M583.5 291.4 L594.3 199.8" stroke="#c02424" stroke-width="1.1"/><path d="M589.8 298.9 L635.9 226.4" stroke="#ff4444" stroke-width="1.1"/><path d="M581.1 298.5 L586.2 262.7" stroke="#c02424" stroke-width="1.1"/><path d="M590.8 301.6 L602.4 265.0" stroke="#c02424" stroke-width="1.1"/><path d="M575.7 294.5 L603.6 233.8" stroke="#e03030" stroke-width="1.1"/><path d="M578.9 298.5 L598.3 219.5" stroke="#ff4444" stroke-width="1.1"/><path d="M573.3 301.7 L582.8 259.1" stroke="#ff4444" stroke-width="1.1"/><path d="M591.6 299.3 L615.2 247.6" stroke="#ff4444" stroke-width="1.1"/><path d="M579.4 294.5 L603.8 264.6" stroke="#c02424" stroke-width="1.1"/><path d="M579.0 289.8 L607.6 203.6" stroke="#ff4444" stroke-width="1.1"/><path d="M575.1 290.8 L570.2 233.8" stroke="#f03333" stroke-width="1.1"/><path d="M578.6 304.9 L628.7 235.5" stroke="#ff4444" stroke-width="1.1"/><path d="M573.5 296.7 L627.5 218.9" stroke="#a82020" stroke-width="1.1"/><path d="M583.3 287.1 L611.5 185.7" stroke="#ff3a3a" stroke-width="1.1"/><path d="M582.9 294.4 L603.3 236.5" stroke="#f03333" stroke-width="1.1"/><path d="M582.4 285.6 L608.7 253.9" stroke="#f03333" stroke-width="1.1"/><path d="M575.6 295.1 L595.3 204.8" stroke="#f83030" stroke-width="1.1"/><path d="M576.0 302.0 L614.5 247.0" stroke="#f03333" stroke-width="1.1"/><path d="M535 162 L560 260" stroke="#a02020" stroke-width="1" stroke-dasharray="1.5 2"/><path d="M608 150 L575 240" stroke="#a02020" stroke-width="1" stroke-dasharray="1.5 2"/><path d="M450 420 L520 340" stroke="#a02020" stroke-width="1" stroke-dasharray="1.5 2"/><path d="M555 355 L548 410" stroke="#a02020" stroke-width="1" stroke-dasharray="1.5 2"/><path d="M640 330 L705 400" stroke="#a02020" stroke-width="1" stroke-dasharray="1.5 2"/><path d="M590 300 L674 117" stroke="#f03030" stroke-width="1.5"/><path d="M590 300 L657 194" stroke="#f03030" stroke-width="1.5"/><path d="M590 300 L671 227" stroke="#f03030" stroke-width="1.5"/><path d="M590 300 L678 255" stroke="#f03030" stroke-width="1.5"/><path d="M590 300 L672 269" stroke="#f03030" stroke-width="1.5"/><path d="M590 300 L712 343" stroke="#f03030" stroke-width="1.5"/><path d="M590 300 L621 335" stroke="#f03030" stroke-width="1.5"/><path d="M590 300 L603 361" stroke="#f03030" stroke-width="1.5"/><path d="M590 300 L542 363" stroke="#f03030" stroke-width="1.5"/><path d="M590 300 L565 344" stroke="#f03030" stroke-width="1.5"/><path d="M590 300 L536 361" stroke="#f03030" stroke-width="1.5"/><path d="M590 300 L645 298" stroke="#f03030" stroke-width="1.5"/><path d="M590 300 L690 300" stroke="#f03030" stroke-width="1.5"/><path d="M590 300 L660 320" stroke="#f03030" stroke-width="1.5"/><path d="M590 300 L700 280" stroke="#f03030" stroke-width="1.5"/><path d="M590 300 L640 240" stroke="#f03030" stroke-width="1.5"/><path d="M590 300 L625 210" stroke="#f03030" stroke-width="1.5"/><path d="M590 300 L560 230" stroke="#f03030" stroke-width="1.5"/><path d="M560 290 L774 477" stroke="#f03030" stroke-width="1.5"/><path d="M560 300 L721 477" stroke="#901818" stroke-width="1"/><path d="M395 315 L441 311" stroke="#f03030" stroke-width="1.5"/><path d="M517 146 L524 193" stroke="#f03030" stroke-width="1.5"/><path d="M600 280 L612 322" stroke="#503030" stroke-width="1.5"/><path d="M275.0 130.4 L279.2 128.0 L287.0 129.2 L287.0 137.6 L282.8 140.0 L275.0 138.8Z" fill="#f2f2f2"/><path d="M282.8 131.6 L287.0 129.2 L287.0 137.6 L282.8 140.0Z" fill="#dcdcdc"/><path d="M438.0 101.4 L442.2 99.0 L450.0 100.2 L450.0 108.6 L445.8 111.0 L438.0 109.8Z" fill="#f2f2f2"/><path d="M445.8 102.6 L450.0 100.2 L450.0 108.6 L445.8 111.0Z" fill="#dcdcdc"/><path d="M576.0 121.8 L580.9 119.0 L590.0 120.4 L590.0 130.2 L585.1 133.0 L576.0 131.6Z" fill="#f2f2f2"/><path d="M585.1 123.2 L590.0 120.4 L590.0 130.2 L585.1 133.0Z" fill="#dcdcdc"/><path d="M407.0 170.0 L414.0 166.0 L427.0 168.0 L427.0 182.0 L420.0 186.0 L407.0 184.0Z" fill="#f2f2f2"/><path d="M420.0 172.0 L427.0 168.0 L427.0 182.0 L420.0 186.0Z" fill="#dcdcdc"/><path d="M366.0 197.4 L370.2 195.0 L378.0 196.2 L378.0 204.6 L373.8 207.0 L366.0 205.8Z" fill="#f2f2f2"/><path d="M373.8 198.6 L378.0 196.2 L378.0 204.6 L373.8 207.0Z" fill="#dcdcdc"/><path d="M321.5 270.9 L327.45 267.5 L338.5 269.2 L338.5 281.1 L332.55 284.5 L321.5 282.8Z" fill="#f2f2f2"/><path d="M332.55 272.6 L338.5 269.2 L338.5 281.1 L332.55 284.5Z" fill="#dcdcdc"/><path d="M320.5 311.1 L325.05 308.5 L333.5 309.8 L333.5 318.9 L328.95 321.5 L320.5 320.2Z" fill="#f2f2f2"/><path d="M328.95 312.4 L333.5 309.8 L333.5 318.9 L328.95 321.5Z" fill="#dcdcdc"/><path d="M437.5 389.9 L443.45 386.5 L454.5 388.2 L454.5 400.1 L448.55 403.5 L437.5 401.8Z" fill="#f2f2f2"/><path d="M448.55 391.6 L454.5 388.2 L454.5 400.1 L448.55 403.5Z" fill="#dcdcdc"/><path d="M449.5 325.1 L454.05 322.5 L462.5 323.8 L462.5 332.9 L457.95 335.5 L449.5 334.2Z" fill="#f2f2f2"/><path d="M457.95 326.4 L462.5 323.8 L462.5 332.9 L457.95 335.5Z" fill="#dcdcdc"/><path d="M535.0 261.2 L540.6 258.0 L551.0 259.6 L551.0 270.8 L545.4 274.0 L535.0 272.4Z" fill="#f2f2f2"/><path d="M545.4 262.8 L551.0 259.6 L551.0 270.8 L545.4 274.0Z" fill="#dcdcdc"/></svg><svg class="a" style="left:0;top:0" width="1048" height="1011"><path d="M20.5 203.5 L17 207 L20.5 210.5" fill="none" stroke="#505050" stroke-width="2"/><path d="M228.5 203.5 L232 207 L228.5 210.5" fill="none" stroke="#505050" stroke-width="2"/><path d="M227.5 333.5 L231 330 L234.5 333.5" fill="none" stroke="#505050" stroke-width="2"/><path d="M227.5 472 L231 475.5 L234.5 472" fill="none" stroke="#505050" stroke-width="2"/><path d="M1026.5 333.5 L1030 330 L1033.5 333.5" fill="none" stroke="#505050" stroke-width="2"/><path d="M1026.5 456 L1030 459.5 L1033.5 456" fill="none" stroke="#505050" stroke-width="2"/><path d="M831.5 471.5 L828 475 L831.5 478.5" fill="none" stroke="#505050" stroke-width="2"/><path d="M1010.5 471.5 L1014 475 L1010.5 478.5" fill="none" stroke="#505050" stroke-width="2"/><path d="M135 587 h7 l-3.5 4z" fill="#000"/><path d="M207.5 617.5 L211 614 L214.5 617.5" fill="none" stroke="#505050" stroke-width="2"/><path d="M207.5 942 L211 945.5 L214.5 942" fill="none" stroke="#505050" stroke-width="2"/><path d="M327 587 h7 l-3.5 4z" fill="#000"/><path d="M694.5 639.5 L698 636 L701.5 639.5" fill="none" stroke="#505050" stroke-width="2"/><path d="M694.5 895 L698 898.5 L701.5 895" fill="none" stroke="#505050" stroke-width="2"/><path d="M753 627 h8 l-4 3z" fill="#7eb4ea"/><path d="M726.5 908.5 L723 912 L726.5 915.5" fill="none" stroke="#505050" stroke-width="2"/><path d="M1021.5 908.5 L1025 912 L1021.5 915.5" fill="none" stroke="#505050" stroke-width="2"/></svg></body></html>
